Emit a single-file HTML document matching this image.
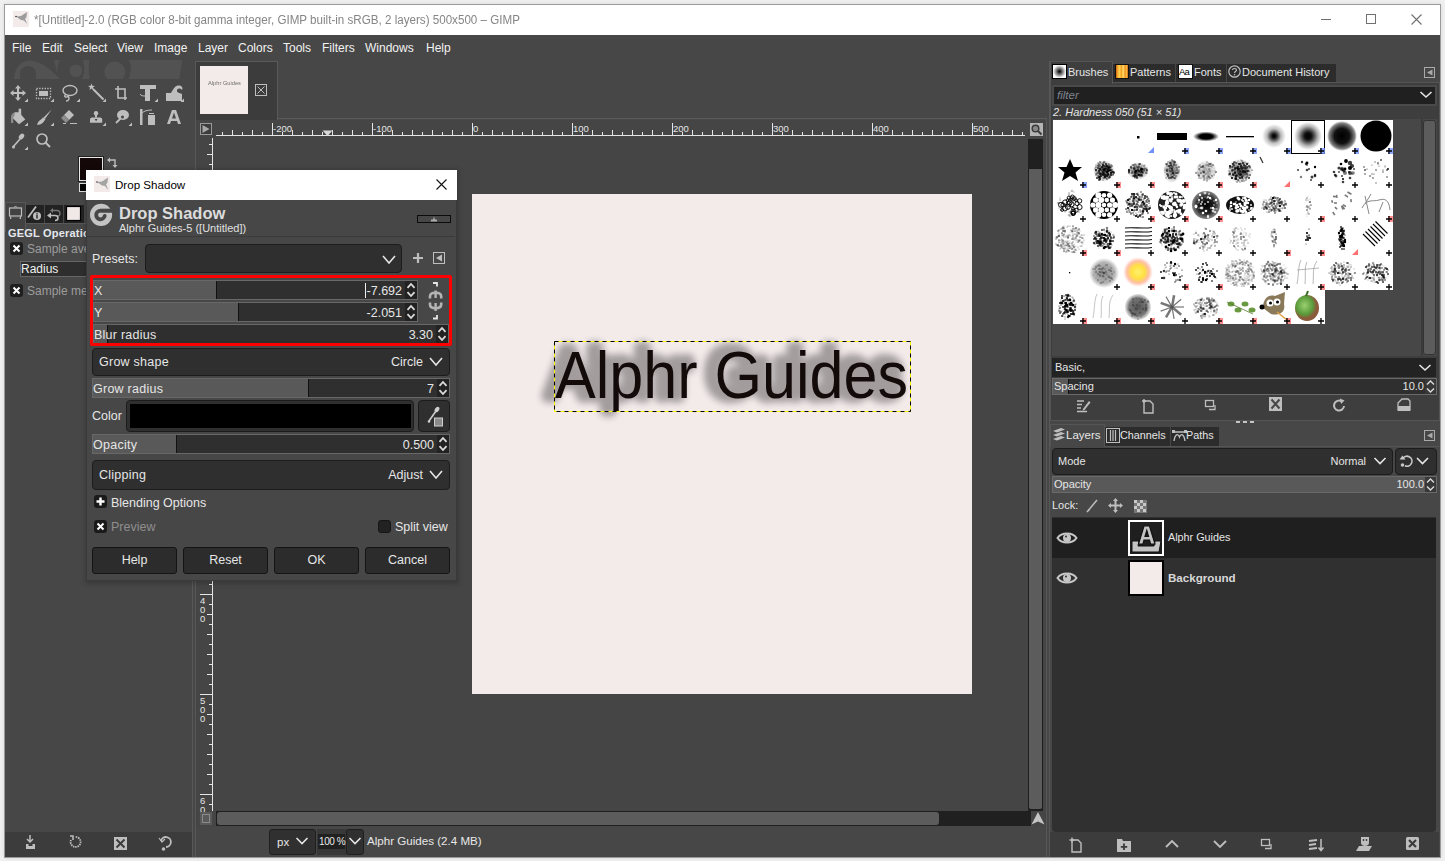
<!DOCTYPE html>
<html><head><meta charset="utf-8">
<style>
*{box-sizing:border-box;margin:0;padding:0}
html,body{width:1445px;height:861px;overflow:hidden;background:#efefef;font-family:"Liberation Sans",sans-serif;position:relative}
.a{position:absolute}
.t{position:absolute;white-space:pre;line-height:1}
svg{position:absolute;overflow:visible}

</style></head><body>

<div class="a" style="left:0;top:0;width:1445px;height:861px;background:#f0f0f0"></div>
<div class="a" style="left:4px;top:4px;width:1437px;height:854px;border:1px solid #9a9a9a;background:#474747;box-shadow:0 0 4px rgba(0,0,0,.10)"></div>
<div class="a" style="left:5px;top:5px;width:1435px;height:30px;background:#fff"></div>
<div class="a" style="left:13px;top:11px;width:16px;height:16px;background:#f3eaea"></div>
<svg style="left:13px;top:11px" width="16" height="16"><path d="M3 5.5 L8 5 L11 3 L14 1 L13.5 6 L12 8 L13 10 L14 13 L11 9.5 L8 9 Z" fill="#9c9c9c"/><circle cx="3" cy="5.5" r="0.8" fill="#333"/></svg>
<div class="t" style="left:34px;top:14px;font-size:12px;color:#858585;transform:scaleX(0.968);transform-origin:0 0">*[Untitled]-2.0 (RGB color 8-bit gamma integer, GIMP built-in sRGB, 2 layers) 500x500 – GIMP</div>
<div class="a" style="left:1321px;top:19px;width:10px;height:1px;background:#707070"></div>
<div class="a" style="left:1366px;top:14px;width:10px;height:10px;border:1px solid #707070"></div>
<svg style="left:1411px;top:14px" width="11" height="11"><path d="M0.5 0.5 L10.5 10.5 M10.5 0.5 L0.5 10.5" stroke="#707070" stroke-width="1.1"/></svg>
<div class="t" style="left:12px;top:42px;font-size:12px;color:#f2f2f2">File</div><div class="t" style="left:42px;top:42px;font-size:12px;color:#f2f2f2">Edit</div><div class="t" style="left:74px;top:42px;font-size:12px;color:#f2f2f2">Select</div><div class="t" style="left:117px;top:42px;font-size:12px;color:#f2f2f2">View</div><div class="t" style="left:154px;top:42px;font-size:12px;color:#f2f2f2">Image</div><div class="t" style="left:198px;top:42px;font-size:12px;color:#f2f2f2">Layer</div><div class="t" style="left:238px;top:42px;font-size:12px;color:#f2f2f2">Colors</div><div class="t" style="left:283px;top:42px;font-size:12px;color:#f2f2f2">Tools</div><div class="t" style="left:322px;top:42px;font-size:12px;color:#f2f2f2">Filters</div><div class="t" style="left:365px;top:42px;font-size:12px;color:#f2f2f2">Windows</div><div class="t" style="left:426px;top:42px;font-size:12px;color:#f2f2f2">Help</div><svg style="left:0;top:0" width="200" height="200"><path d="M14 79 C14 68 21 60.5 30 60.5 C40 60.5 50 69 60 79 Z" fill="#525252"/><path d="M20 79 L20 74 A8 8 0 0 1 36 74 L36 79 Z" fill="#474747"/><path d="M54 60 L59.8 60 C57.5 65 57 70 57.5 75 Z" fill="#525252"/><circle cx="75.8" cy="70.8" r="6.3" fill="#525252"/><path d="M82.5 60 L89.5 60 C88.5 66 88.5 72 90 79 L82 79 C85 73 85 66 82.5 60 Z" fill="#525252"/><path d="M107 79 A10.5 10.5 0 1 1 122.6 79 Z" fill="#525252"/><path d="M129 60 L182.3 60 L179.2 79 L128.6 79 C131.5 72 131.5 66 129 60 Z" fill="#525252"/><g fill="#bebebe" transform="translate(10,85)"><path d="M8 0 L11 3.5 L9 3.5 L9 7 L12.5 7 L12.5 5 L16 8 L12.5 11 L12.5 9 L9 9 L9 12.5 L11 12.5 L8 16 L5 12.5 L7 12.5 L7 9 L3.5 9 L3.5 11 L0 8 L3.5 5 L3.5 7 L7 7 L7 3.5 L5 3.5 Z"/></g><path d="M28 102 L24.5 102 L28 98.5 Z" fill="#bebebe"/><rect x="36.5" y="88.5" width="14" height="10" fill="none" stroke="#bebebe" stroke-width="1.3" stroke-dasharray="1.3 1.4"/><rect x="39" y="91" width="9" height="5" fill="#bebebe"/><path d="M54 102 L50.5 102 L54 98.5 Z" fill="#bebebe"/><ellipse cx="70" cy="90.5" rx="7" ry="5" fill="none" stroke="#bebebe" stroke-width="1.4"/><path d="M66 94 C63 97 66 98 68 96 C70 98 69 101 66 101" fill="none" stroke="#bebebe" stroke-width="1.4"/><path d="M80 102 L76.5 102 L80 98.5 Z" fill="#bebebe"/><path d="M93 89 L103.5 99.5" stroke="#bebebe" stroke-width="1.9"/><path d="M91.50 83.40 L92.38 85.79 L94.92 85.89 L92.93 87.46 L93.62 89.91 L91.50 88.50 L89.38 89.91 L90.07 87.46 L88.08 85.89 L90.62 85.79 Z" fill="#bebebe"/><path d="M106 102 L102.5 102 L106 98.5 Z" fill="#bebebe"/><path d="M118 86 L118 98 L127 98 M115 89 L125 89 L125 100" fill="none" stroke="#bebebe" stroke-width="1.6"/><path d="M140 85 L156 85 L156 89 L150 89 L150 101 L145 101 L145 89 L140 89 Z" fill="#bebebe"/><path d="M140 94 C141 96 143 96 146 96" fill="none" stroke="#bebebe" stroke-width="1"/><path d="M158 102 L154.5 102 L158 98.5 Z" fill="#bebebe"/><path d="M166 101 L166 93 L171 93 C174 88 175 85.5 179 85.5 C182 85.5 183 88 182 90 C180 88 177 88 177 91 C177 93 181 93 182 94 L182 101 Z" fill="#bebebe"/><path d="M184 102 L180.5 102 L184 98.5 Z" fill="#bebebe"/><path d="M14.6 112.3 L19 112.3 L25.3 119.6 L19 124.2 L12.6 118 Z" fill="#bebebe"/><rect x="18.6" y="108.6" width="2.6" height="9.2" rx="1.2" fill="#bebebe"/><path d="M11 123 L11 117.5 C11 114.5 12.5 113 14.6 112.5 L14.6 116 C13.6 116.3 13.2 117 13.2 118 L13.2 123 Z" fill="#8c8c8c"/><path d="M19.5 111 L19.5 117" stroke="#474747" stroke-width="0.01"/><path d="M28 126 L24.5 126 L28 122.5 Z" fill="#bebebe"/><path d="M51.8 109.3 L45 119 L43.3 117.8 Z" fill="#bebebe"/><path d="M43 117.5 L45.5 119.3 L43.5 122 C42 124 39.5 124.8 37 124.8 C37.5 122.5 39 120.5 41 119.5 Z" fill="#bebebe"/><path d="M54 126 L50.5 126 L54 122.5 Z" fill="#bebebe"/><path d="M69 110 L74 115 L69 120 L64 115 Z" fill="#bebebe"/><path d="M64 115 L69 120 L66 123 L61 118 Z" fill="#8c8c8c"/><path d="M63 123.5 L66 123.5 M70 123.5 L77 123.5" stroke="#bebebe" stroke-width="1.1"/><circle cx="96" cy="113.2" r="2.2" fill="#bebebe"/><rect x="95" y="114" width="2" height="3.5" fill="#bebebe"/><path d="M90 122.8 L90 119.5 C90 118.2 91 117.6 93 117.6 L99 117.6 C101 117.6 102.2 118.2 102.2 119.5 L102.2 122.8 Z" fill="#bebebe"/><path d="M94.6 119 L97.6 119 L96.1 121.2 Z" fill="#474747"/><path d="M106 126 L102.5 126 L106 122.5 Z" fill="#bebebe"/><ellipse cx="123" cy="115" rx="6" ry="5" fill="#bebebe"/><path d="M116 123 L122 117" stroke="#bebebe" stroke-width="1.8"/><circle cx="122.5" cy="117" r="1.5" fill="#474747"/><path d="M132 126 L128.5 126 L132 122.5 Z" fill="#bebebe"/><rect x="140" y="109" width="2.5" height="16" fill="#bebebe"/><path d="M142 113 C144 111 147 110 152 110" fill="none" stroke="#bebebe" stroke-width="1"/><rect x="148" y="115" width="7" height="10" fill="#bebebe"/><rect x="149" y="113" width="5" height="1" fill="#bebebe"/><path d="M167 124 L172 110 L176 110 L181 124 L178 124 L177 121 L171 121 L170 124 Z M172 118.5 L176 118.5 L174 112.5 Z" fill="#bebebe" fill-rule="evenodd"/><path d="M13 147 L20 139" stroke="#bebebe" stroke-width="1.6"/><ellipse cx="21.5" cy="136.5" rx="2.3" ry="3.2" transform="rotate(40 21.5 136.5)" fill="#bebebe"/><circle cx="13.5" cy="147" r="1.5" fill="#bebebe"/><path d="M28 150 L24.5 150 L28 146.5 Z" fill="#bebebe"/><circle cx="42" cy="139" r="5" fill="none" stroke="#bebebe" stroke-width="1.7"/><path d="M45.5 142.5 L50 147" stroke="#bebebe" stroke-width="2"/><path d="M109 160 L115 160 L115 166" fill="none" stroke="#bebebe" stroke-width="1.4"/><path d="M107 160 L110 157.5 L110 162.5 Z M115 168 L112.5 165 L117.5 165 Z" fill="#bebebe"/></svg><div class="a" style="left:79px;top:183px;width:12px;height:9px;background:#000;border:1px solid #ddd"></div><div class="a" style="left:79px;top:157px;width:24px;height:24px;border:1px solid #e8e8e8;background:#140808;outline:1px solid #222"></div><div class="a" style="left:26px;top:223px;width:166px;height:1px;background:#585858"></div><div class="a" style="left:5px;top:202px;width:21px;height:30px;background:#424242;border:1px solid #585858;border-bottom:none"></div><div class="a" style="left:26px;top:205px;width:18px;height:18px;background:#222"></div><div class="a" style="left:45px;top:205px;width:18px;height:18px;background:#222"></div><div class="a" style="left:64px;top:205px;width:20px;height:18px;background:#222"></div><svg style="left:0;top:195px" width="90" height="30">
<rect x="9.5" y="13" width="12" height="8" fill="none" stroke="#bebebe" stroke-width="1.2"/><path d="M14 12.5 L15.5 11 L17 12.5" fill="none" stroke="#bebebe" stroke-width="1"/><path d="M10.5 24 L11 21 M20.5 24 L20 21" stroke="#bebebe" stroke-width="1.2"/><rect x="11" y="21" width="9" height="1.2" fill="#888"/>
<path d="M28 22.5 L36 11.5" stroke="#bebebe" stroke-width="1.8"/><circle cx="37" cy="21" r="4" fill="#bebebe"/><rect x="36.3" y="19.5" width="1.4" height="4" fill="#222"/><rect x="36.3" y="17.8" width="1.4" height="1" fill="#222"/>
<path d="M52 15.5 L57 15.5 C59 15.5 60 17 60 18.5 C60 20 59 21 57.5 21" fill="none" stroke="#777" stroke-width="1.3"/><path d="M50 15.5 L53 13 L53 18 Z" fill="#777"/>
<path d="M50 20.5 L55 20.5 C57 20.5 58 22 58 23 C58 24.5 57 25.5 55 25.5" fill="none" stroke="#bebebe" stroke-width="1.5"/><path d="M47 20.5 L51 17.5 L51 23.5 Z" fill="#bebebe"/>
<rect x="66.5" y="11.5" width="14" height="14" fill="#f1e8e8" stroke="#000" stroke-width="1.2"/>
</svg><div class="t" style="left:8px;top:228px;font-size:11px;font-weight:bold;color:#e4e8ee;letter-spacing:0.2px">GEGL Operation</div><div class="a" style="left:10px;top:242px;width:13px;height:13px;background:#1e1e1e;border-radius:3px"></div><svg style="left:10px;top:242px" width="13" height="13"><path d="M3.5 3.5 L9.5 9.5 M9.5 3.5 L3.5 9.5" stroke="#fff" stroke-width="2"/></svg><div class="t" style="left:27px;top:243px;font-size:12px;color:#9c9c9c">Sample average</div><div class="a" style="left:20px;top:261px;width:170px;height:16px;background:#2e2e2e;border:1px solid #666"></div><div class="t" style="left:21px;top:263px;font-size:12px;color:#f0f0f0">Radius</div><div class="a" style="left:10px;top:284px;width:13px;height:13px;background:#1e1e1e;border-radius:3px"></div><svg style="left:10px;top:284px" width="13" height="13"><path d="M3.5 3.5 L9.5 9.5 M9.5 3.5 L3.5 9.5" stroke="#fff" stroke-width="2"/></svg><div class="t" style="left:27px;top:285px;font-size:12px;color:#9c9c9c">Sample merged</div><div class="a" style="left:5px;top:832px;width:187px;height:25px;background:#3c3c3c"></div><svg style="left:0;top:830px" width="200" height="30">
<path d="M30 5 L30 12 M27 9 L30 12 L33 9" fill="none" stroke="#bebebe" stroke-width="1.5"/><path d="M26 14 L26 19 L35 19 L35 14 L32.5 14 L32.5 16 L28.5 16 L28.5 14 Z" fill="#bebebe"/>
<path d="M71 10 A5 5 0 1 0 75 7" fill="none" stroke="#bebebe" stroke-width="1.8" stroke-dasharray="1.5 0.8"/><path d="M70 6 L73 6 L73 10" fill="none" stroke="#bebebe" stroke-width="1.5"/>
<rect x="114" y="7" width="13" height="13" fill="#bebebe"/><path d="M116.5 9.5 L124.5 17.5 M124.5 9.5 L116.5 17.5" stroke="#3c3c3c" stroke-width="2"/>
<path d="M161 11 A5 5 0 1 1 166 17" fill="none" stroke="#bebebe" stroke-width="1.8"/><path d="M159 8 L162 12 L165 9" fill="none" stroke="#bebebe" stroke-width="1.2"/><circle cx="163.5" cy="19" r="1.8" fill="#bebebe"/>
</svg><div class="a" style="left:195px;top:61px;width:1px;height:796px;background:#585858"></div><div class="a" style="left:192px;top:560px;width:1px;height:297px;background:#585858"></div><div class="a" style="left:196px;top:61px;width:82px;height:59px;background:#3c3c3c;border-top:1px solid #5a5a5a;border-right:1px solid #5a5a5a"></div><div class="a" style="left:277px;top:118px;width:770px;height:1px;background:#5a5a5a"></div><div class="a" style="left:200px;top:66px;width:48px;height:48px;background:#f3eaea"></div><div class="t" style="left:208px;top:80px;font-size:6px;color:#707070;transform:scaleX(0.95);transform-origin:0 0">Alphr Guides</div><svg style="left:255px;top:84px" width="12" height="12"><rect x="0.5" y="0.5" width="11" height="11" fill="none" stroke="#bebebe" stroke-width="1"/><path d="M2.5 2.5 L9.5 9.5 M9.5 2.5 L2.5 9.5" stroke="#bebebe" stroke-width="1"/></svg><div class="a" style="left:196px;top:120px;width:850px;height:706px;background:#454545"></div><svg style="left:200px;top:123px" width="12" height="12"><rect x="0.5" y="0.5" width="11" height="11" fill="#3c3c3c" stroke="#9a9a9a" stroke-width="1"/><path d="M2.5 2 L9.5 6 L2.5 10 Z" fill="#a8a8a8"/></svg><svg style="left:0;top:0" width="1445" height="861"><path d="M216 135.5 L1025 135.5" stroke="#e6e6e6" stroke-width="1"/><path d="M222.5 132 L222.5 135" stroke="#e6e6e6" stroke-width="1"/><path d="M232.5 130 L232.5 135" stroke="#e6e6e6" stroke-width="1"/><path d="M242.5 132 L242.5 135" stroke="#e6e6e6" stroke-width="1"/><path d="M252.5 130 L252.5 135" stroke="#e6e6e6" stroke-width="1"/><path d="M262.5 132 L262.5 135" stroke="#e6e6e6" stroke-width="1"/><path d="M272.5 123 L272.5 135" stroke="#e6e6e6" stroke-width="1"/><path d="M282.5 132 L282.5 135" stroke="#e6e6e6" stroke-width="1"/><path d="M292.5 130 L292.5 135" stroke="#e6e6e6" stroke-width="1"/><path d="M302.5 132 L302.5 135" stroke="#e6e6e6" stroke-width="1"/><path d="M312.5 130 L312.5 135" stroke="#e6e6e6" stroke-width="1"/><path d="M322.5 132 L322.5 135" stroke="#e6e6e6" stroke-width="1"/><path d="M332.5 130 L332.5 135" stroke="#e6e6e6" stroke-width="1"/><path d="M342.5 132 L342.5 135" stroke="#e6e6e6" stroke-width="1"/><path d="M352.5 130 L352.5 135" stroke="#e6e6e6" stroke-width="1"/><path d="M362.5 132 L362.5 135" stroke="#e6e6e6" stroke-width="1"/><path d="M372.5 123 L372.5 135" stroke="#e6e6e6" stroke-width="1"/><path d="M382.5 132 L382.5 135" stroke="#e6e6e6" stroke-width="1"/><path d="M392.5 130 L392.5 135" stroke="#e6e6e6" stroke-width="1"/><path d="M402.5 132 L402.5 135" stroke="#e6e6e6" stroke-width="1"/><path d="M412.5 130 L412.5 135" stroke="#e6e6e6" stroke-width="1"/><path d="M422.5 132 L422.5 135" stroke="#e6e6e6" stroke-width="1"/><path d="M432.5 130 L432.5 135" stroke="#e6e6e6" stroke-width="1"/><path d="M442.5 132 L442.5 135" stroke="#e6e6e6" stroke-width="1"/><path d="M452.5 130 L452.5 135" stroke="#e6e6e6" stroke-width="1"/><path d="M462.5 132 L462.5 135" stroke="#e6e6e6" stroke-width="1"/><path d="M472.5 123 L472.5 135" stroke="#e6e6e6" stroke-width="1"/><path d="M482.5 132 L482.5 135" stroke="#e6e6e6" stroke-width="1"/><path d="M492.5 130 L492.5 135" stroke="#e6e6e6" stroke-width="1"/><path d="M502.5 132 L502.5 135" stroke="#e6e6e6" stroke-width="1"/><path d="M512.5 130 L512.5 135" stroke="#e6e6e6" stroke-width="1"/><path d="M522.5 132 L522.5 135" stroke="#e6e6e6" stroke-width="1"/><path d="M532.5 130 L532.5 135" stroke="#e6e6e6" stroke-width="1"/><path d="M542.5 132 L542.5 135" stroke="#e6e6e6" stroke-width="1"/><path d="M552.5 130 L552.5 135" stroke="#e6e6e6" stroke-width="1"/><path d="M562.5 132 L562.5 135" stroke="#e6e6e6" stroke-width="1"/><path d="M572.5 123 L572.5 135" stroke="#e6e6e6" stroke-width="1"/><path d="M582.5 132 L582.5 135" stroke="#e6e6e6" stroke-width="1"/><path d="M592.5 130 L592.5 135" stroke="#e6e6e6" stroke-width="1"/><path d="M602.5 132 L602.5 135" stroke="#e6e6e6" stroke-width="1"/><path d="M612.5 130 L612.5 135" stroke="#e6e6e6" stroke-width="1"/><path d="M622.5 132 L622.5 135" stroke="#e6e6e6" stroke-width="1"/><path d="M632.5 130 L632.5 135" stroke="#e6e6e6" stroke-width="1"/><path d="M642.5 132 L642.5 135" stroke="#e6e6e6" stroke-width="1"/><path d="M652.5 130 L652.5 135" stroke="#e6e6e6" stroke-width="1"/><path d="M662.5 132 L662.5 135" stroke="#e6e6e6" stroke-width="1"/><path d="M672.5 123 L672.5 135" stroke="#e6e6e6" stroke-width="1"/><path d="M682.5 132 L682.5 135" stroke="#e6e6e6" stroke-width="1"/><path d="M692.5 130 L692.5 135" stroke="#e6e6e6" stroke-width="1"/><path d="M702.5 132 L702.5 135" stroke="#e6e6e6" stroke-width="1"/><path d="M712.5 130 L712.5 135" stroke="#e6e6e6" stroke-width="1"/><path d="M722.5 132 L722.5 135" stroke="#e6e6e6" stroke-width="1"/><path d="M732.5 130 L732.5 135" stroke="#e6e6e6" stroke-width="1"/><path d="M742.5 132 L742.5 135" stroke="#e6e6e6" stroke-width="1"/><path d="M752.5 130 L752.5 135" stroke="#e6e6e6" stroke-width="1"/><path d="M762.5 132 L762.5 135" stroke="#e6e6e6" stroke-width="1"/><path d="M772.5 123 L772.5 135" stroke="#e6e6e6" stroke-width="1"/><path d="M782.5 132 L782.5 135" stroke="#e6e6e6" stroke-width="1"/><path d="M792.5 130 L792.5 135" stroke="#e6e6e6" stroke-width="1"/><path d="M802.5 132 L802.5 135" stroke="#e6e6e6" stroke-width="1"/><path d="M812.5 130 L812.5 135" stroke="#e6e6e6" stroke-width="1"/><path d="M822.5 132 L822.5 135" stroke="#e6e6e6" stroke-width="1"/><path d="M832.5 130 L832.5 135" stroke="#e6e6e6" stroke-width="1"/><path d="M842.5 132 L842.5 135" stroke="#e6e6e6" stroke-width="1"/><path d="M852.5 130 L852.5 135" stroke="#e6e6e6" stroke-width="1"/><path d="M862.5 132 L862.5 135" stroke="#e6e6e6" stroke-width="1"/><path d="M872.5 123 L872.5 135" stroke="#e6e6e6" stroke-width="1"/><path d="M882.5 132 L882.5 135" stroke="#e6e6e6" stroke-width="1"/><path d="M892.5 130 L892.5 135" stroke="#e6e6e6" stroke-width="1"/><path d="M902.5 132 L902.5 135" stroke="#e6e6e6" stroke-width="1"/><path d="M912.5 130 L912.5 135" stroke="#e6e6e6" stroke-width="1"/><path d="M922.5 132 L922.5 135" stroke="#e6e6e6" stroke-width="1"/><path d="M932.5 130 L932.5 135" stroke="#e6e6e6" stroke-width="1"/><path d="M942.5 132 L942.5 135" stroke="#e6e6e6" stroke-width="1"/><path d="M952.5 130 L952.5 135" stroke="#e6e6e6" stroke-width="1"/><path d="M962.5 132 L962.5 135" stroke="#e6e6e6" stroke-width="1"/><path d="M972.5 123 L972.5 135" stroke="#e6e6e6" stroke-width="1"/><path d="M982.5 132 L982.5 135" stroke="#e6e6e6" stroke-width="1"/><path d="M992.5 130 L992.5 135" stroke="#e6e6e6" stroke-width="1"/><path d="M1002.5 132 L1002.5 135" stroke="#e6e6e6" stroke-width="1"/><path d="M1012.5 130 L1012.5 135" stroke="#e6e6e6" stroke-width="1"/><path d="M1022.5 132 L1022.5 135" stroke="#e6e6e6" stroke-width="1"/><path d="M212.5 138 L212.5 811" stroke="#e6e6e6" stroke-width="1"/><path d="M209 144.5 L212 144.5" stroke="#e6e6e6" stroke-width="1"/><path d="M207 154.5 L212 154.5" stroke="#e6e6e6" stroke-width="1"/><path d="M209 164.5 L212 164.5" stroke="#e6e6e6" stroke-width="1"/><path d="M207 174.5 L212 174.5" stroke="#e6e6e6" stroke-width="1"/><path d="M209 184.5 L212 184.5" stroke="#e6e6e6" stroke-width="1"/><path d="M200 194.5 L212 194.5" stroke="#e6e6e6" stroke-width="1"/><path d="M209 204.5 L212 204.5" stroke="#e6e6e6" stroke-width="1"/><path d="M207 214.5 L212 214.5" stroke="#e6e6e6" stroke-width="1"/><path d="M209 224.5 L212 224.5" stroke="#e6e6e6" stroke-width="1"/><path d="M207 234.5 L212 234.5" stroke="#e6e6e6" stroke-width="1"/><path d="M209 244.5 L212 244.5" stroke="#e6e6e6" stroke-width="1"/><path d="M207 254.5 L212 254.5" stroke="#e6e6e6" stroke-width="1"/><path d="M209 264.5 L212 264.5" stroke="#e6e6e6" stroke-width="1"/><path d="M207 274.5 L212 274.5" stroke="#e6e6e6" stroke-width="1"/><path d="M209 284.5 L212 284.5" stroke="#e6e6e6" stroke-width="1"/><path d="M200 294.5 L212 294.5" stroke="#e6e6e6" stroke-width="1"/><path d="M209 304.5 L212 304.5" stroke="#e6e6e6" stroke-width="1"/><path d="M207 314.5 L212 314.5" stroke="#e6e6e6" stroke-width="1"/><path d="M209 324.5 L212 324.5" stroke="#e6e6e6" stroke-width="1"/><path d="M207 334.5 L212 334.5" stroke="#e6e6e6" stroke-width="1"/><path d="M209 344.5 L212 344.5" stroke="#e6e6e6" stroke-width="1"/><path d="M207 354.5 L212 354.5" stroke="#e6e6e6" stroke-width="1"/><path d="M209 364.5 L212 364.5" stroke="#e6e6e6" stroke-width="1"/><path d="M207 374.5 L212 374.5" stroke="#e6e6e6" stroke-width="1"/><path d="M209 384.5 L212 384.5" stroke="#e6e6e6" stroke-width="1"/><path d="M200 394.5 L212 394.5" stroke="#e6e6e6" stroke-width="1"/><path d="M209 404.5 L212 404.5" stroke="#e6e6e6" stroke-width="1"/><path d="M207 414.5 L212 414.5" stroke="#e6e6e6" stroke-width="1"/><path d="M209 424.5 L212 424.5" stroke="#e6e6e6" stroke-width="1"/><path d="M207 434.5 L212 434.5" stroke="#e6e6e6" stroke-width="1"/><path d="M209 444.5 L212 444.5" stroke="#e6e6e6" stroke-width="1"/><path d="M207 454.5 L212 454.5" stroke="#e6e6e6" stroke-width="1"/><path d="M209 464.5 L212 464.5" stroke="#e6e6e6" stroke-width="1"/><path d="M207 474.5 L212 474.5" stroke="#e6e6e6" stroke-width="1"/><path d="M209 484.5 L212 484.5" stroke="#e6e6e6" stroke-width="1"/><path d="M200 494.5 L212 494.5" stroke="#e6e6e6" stroke-width="1"/><path d="M209 504.5 L212 504.5" stroke="#e6e6e6" stroke-width="1"/><path d="M207 514.5 L212 514.5" stroke="#e6e6e6" stroke-width="1"/><path d="M209 524.5 L212 524.5" stroke="#e6e6e6" stroke-width="1"/><path d="M207 534.5 L212 534.5" stroke="#e6e6e6" stroke-width="1"/><path d="M209 544.5 L212 544.5" stroke="#e6e6e6" stroke-width="1"/><path d="M207 554.5 L212 554.5" stroke="#e6e6e6" stroke-width="1"/><path d="M209 564.5 L212 564.5" stroke="#e6e6e6" stroke-width="1"/><path d="M207 574.5 L212 574.5" stroke="#e6e6e6" stroke-width="1"/><path d="M209 584.5 L212 584.5" stroke="#e6e6e6" stroke-width="1"/><path d="M200 594.5 L212 594.5" stroke="#e6e6e6" stroke-width="1"/><path d="M209 604.5 L212 604.5" stroke="#e6e6e6" stroke-width="1"/><path d="M207 614.5 L212 614.5" stroke="#e6e6e6" stroke-width="1"/><path d="M209 624.5 L212 624.5" stroke="#e6e6e6" stroke-width="1"/><path d="M207 634.5 L212 634.5" stroke="#e6e6e6" stroke-width="1"/><path d="M209 644.5 L212 644.5" stroke="#e6e6e6" stroke-width="1"/><path d="M207 654.5 L212 654.5" stroke="#e6e6e6" stroke-width="1"/><path d="M209 664.5 L212 664.5" stroke="#e6e6e6" stroke-width="1"/><path d="M207 674.5 L212 674.5" stroke="#e6e6e6" stroke-width="1"/><path d="M209 684.5 L212 684.5" stroke="#e6e6e6" stroke-width="1"/><path d="M200 694.5 L212 694.5" stroke="#e6e6e6" stroke-width="1"/><path d="M209 704.5 L212 704.5" stroke="#e6e6e6" stroke-width="1"/><path d="M207 714.5 L212 714.5" stroke="#e6e6e6" stroke-width="1"/><path d="M209 724.5 L212 724.5" stroke="#e6e6e6" stroke-width="1"/><path d="M207 734.5 L212 734.5" stroke="#e6e6e6" stroke-width="1"/><path d="M209 744.5 L212 744.5" stroke="#e6e6e6" stroke-width="1"/><path d="M207 754.5 L212 754.5" stroke="#e6e6e6" stroke-width="1"/><path d="M209 764.5 L212 764.5" stroke="#e6e6e6" stroke-width="1"/><path d="M207 774.5 L212 774.5" stroke="#e6e6e6" stroke-width="1"/><path d="M209 784.5 L212 784.5" stroke="#e6e6e6" stroke-width="1"/><path d="M200 794.5 L212 794.5" stroke="#e6e6e6" stroke-width="1"/><path d="M209 804.5 L212 804.5" stroke="#e6e6e6" stroke-width="1"/></svg><div class="t" style="left:273px;top:124px;font-size:9.5px;color:#e6e6e6">-200</div><div class="t" style="left:373px;top:124px;font-size:9.5px;color:#e6e6e6">-100</div><div class="t" style="left:473px;top:124px;font-size:9.5px;color:#e6e6e6">0</div><div class="t" style="left:573px;top:124px;font-size:9.5px;color:#e6e6e6">100</div><div class="t" style="left:673px;top:124px;font-size:9.5px;color:#e6e6e6">200</div><div class="t" style="left:773px;top:124px;font-size:9.5px;color:#e6e6e6">300</div><div class="t" style="left:873px;top:124px;font-size:9.5px;color:#e6e6e6">400</div><div class="t" style="left:973px;top:124px;font-size:9.5px;color:#e6e6e6">500</div><div class="t" style="left:200px;top:196px;font-size:9.5px;color:#e6e6e6">0</div><div class="t" style="left:200px;top:296px;font-size:9.5px;color:#e6e6e6">1</div><div class="t" style="left:200px;top:305px;font-size:9.5px;color:#e6e6e6">0</div><div class="t" style="left:200px;top:314px;font-size:9.5px;color:#e6e6e6">0</div><div class="t" style="left:200px;top:396px;font-size:9.5px;color:#e6e6e6">2</div><div class="t" style="left:200px;top:405px;font-size:9.5px;color:#e6e6e6">0</div><div class="t" style="left:200px;top:414px;font-size:9.5px;color:#e6e6e6">0</div><div class="t" style="left:200px;top:496px;font-size:9.5px;color:#e6e6e6">3</div><div class="t" style="left:200px;top:505px;font-size:9.5px;color:#e6e6e6">0</div><div class="t" style="left:200px;top:514px;font-size:9.5px;color:#e6e6e6">0</div><div class="t" style="left:200px;top:596px;font-size:9.5px;color:#e6e6e6">4</div><div class="t" style="left:200px;top:605px;font-size:9.5px;color:#e6e6e6">0</div><div class="t" style="left:200px;top:614px;font-size:9.5px;color:#e6e6e6">0</div><div class="t" style="left:200px;top:696px;font-size:9.5px;color:#e6e6e6">5</div><div class="t" style="left:200px;top:705px;font-size:9.5px;color:#e6e6e6">0</div><div class="t" style="left:200px;top:714px;font-size:9.5px;color:#e6e6e6">0</div><div class="t" style="left:200px;top:796px;font-size:9.5px;color:#e6e6e6">6</div><div class="t" style="left:200px;top:805px;font-size:9.5px;color:#e6e6e6">0</div><div class="t" style="left:200px;top:814px;font-size:9.5px;color:#e6e6e6">0</div><svg style="left:322px;top:130px" width="11" height="7"><path d="M0.5 0.5 L10.5 0.5 L5.5 6 Z" fill="#d8d8d8"/></svg><svg style="left:1030px;top:123px" width="13" height="13"><rect x="0" y="0" width="13" height="13" fill="#b4b4b4"/><circle cx="5.5" cy="5.5" r="3.3" fill="#888" stroke="#3c3c3c" stroke-width="1.5"/><path d="M8 8 L11.5 11.5" stroke="#3c3c3c" stroke-width="2"/></svg><div class="a" style="left:1028px;top:139px;width:15px;height:672px;background:#202020"></div><div class="a" style="left:1028px;top:168px;width:15px;height:642px;background:#5c5c5c;border:1px solid #1e1e1e;border-radius:0 0 3px 3px"></div><div class="a" style="left:216px;top:811px;width:815px;height:15px;background:#202020"></div><div class="a" style="left:217px;top:812px;width:722px;height:13px;background:#5c5c5c;border-radius:3px"></div><svg style="left:200px;top:812px" width="13" height="13"><rect x="0" y="0" width="12" height="13" fill="#5a5a5a"/><rect x="2.5" y="2.5" width="7" height="8" fill="none" stroke="#bbb" stroke-width="1" stroke-dasharray="1 1"/></svg><svg style="left:1031px;top:812px" width="14" height="14"><path d="M7 0 L13.5 12.5 L7 9.5 L0.5 12.5 Z" fill="#c4c4c4"/></svg><div class="a" style="left:472px;top:194px;width:500px;height:500px;background:#f3eaea"></div><div class="a" style="left:269px;top:829px;width:47px;height:26px;background:#303030;border:1px solid #1f1f1f;border-radius:3px"></div><div class="t" style="left:277px;top:837px;font-size:11.5px;color:#e8e8e8">px</div><svg style="left:295px;top:836px" width="14" height="10"><path d="M1.5 2 L7 7.5 L12.5 2" fill="none" stroke="#e6e6e6" stroke-width="1.6"/></svg><div class="a" style="left:317px;top:829px;width:30px;height:26px;background:#383838"></div><div class="a" style="left:318px;top:834px;width:27px;height:15px;background:#202020"></div><div class="t" style="left:319px;top:837px;font-size:10px;color:#e8e8e8;letter-spacing:-0.4px">100 %</div><div class="a" style="left:346px;top:829px;width:18px;height:26px;background:#303030;border:1px solid #1f1f1f;border-radius:3px"></div><svg style="left:348px;top:836px" width="14" height="10"><path d="M1.5 2 L7 7.5 L12.5 2" fill="none" stroke="#e6e6e6" stroke-width="1.6"/></svg><div class="t" style="left:367px;top:835px;font-size:11.6px;color:#e8e8e8">Alphr Guides (2.4 MB)</div><div class="a" style="left:1046px;top:118px;width:1px;height:739px;background:#585858"></div><div class="a" style="left:1049px;top:61px;width:1px;height:796px;background:#585858"></div><svg style="left:472px;top:194px" width="500" height="500" viewBox="472 194 500 500">
<defs><filter id="bl" x="-20%" y="-50%" width="140%" height="200%"><feGaussianBlur stdDeviation="3.6"/></filter></defs>
<g opacity="0.33" filter="url(#bl)">
<text transform="translate(547.3,396) scale(0.905,1)" font-family="Liberation Sans" font-size="67.5" fill="#000" stroke="#000" stroke-width="13" stroke-linejoin="round">Alphr Guides</text>
</g>
<text transform="translate(555,398) scale(0.905,1)" font-family="Liberation Sans" font-size="67.5" fill="#130a0a">Alphr Guides</text>
<rect x="554.5" y="341.5" width="356" height="70" fill="none" stroke="#ffff00" stroke-width="1"/>
<rect x="554.5" y="341.5" width="356" height="70" fill="none" stroke="#000" stroke-width="1" stroke-dasharray="4 4"/>
</svg><div class="a" style="left:1050px;top:57px;width:390px;height:800px;background:#474747"></div><div class="a" style="left:1050px;top:82px;width:390px;height:339px;background:#3e3e3e;border:1px solid #555;"></div><div class="a" style="left:1113px;top:64px;width:223px;height:18px;background:#2c2c2c"></div><div class="a" style="left:1175px;top:64px;width:1px;height:18px;background:#474747"></div><div class="a" style="left:1226px;top:64px;width:1px;height:18px;background:#474747"></div><div class="a" style="left:1050px;top:61px;width:63px;height:23px;background:#3e3e3e;border:1px solid #555;border-bottom:none"></div><div class="a" style="left:1052px;top:64px;width:15px;height:15px;background:radial-gradient(circle,#000 0,#333 15%,#fff 70%);border:1px solid #000"></div><div class="t" style="left:1068px;top:67px;font-size:11px;color:#e6e6e6">Brushes</div><div class="a" style="left:1115px;top:64px;width:14px;height:15px;border:1px solid #111;background:linear-gradient(90deg,#d06010 0,#f5b030 15%,#ffd050 30%,#f0a020 45%,#ffe070 60%,#e89020 75%,#ffc040 90%,#c05010 100%)"></div><div class="t" style="left:1130px;top:67px;font-size:11px;color:#e6e6e6">Patterns</div><div class="a" style="left:1178px;top:64px;width:15px;height:15px;background:#fff;border:1px solid #111"></div><div class="t" style="left:1179px;top:67px;font-size:9.5px;color:#000;letter-spacing:-0.8px">Aa</div><div class="t" style="left:1194px;top:67px;font-size:11px;color:#e6e6e6">Fonts</div><svg style="left:1228px;top:65px" width="13" height="13"><circle cx="6.5" cy="6.5" r="5.7" fill="none" stroke="#bebebe" stroke-width="1.2"/><path d="M4.5 5 C4.5 3 8.5 3 8.5 5 C8.5 6.5 6.5 6.5 6.5 8" fill="none" stroke="#bebebe" stroke-width="1.2"/><circle cx="6.5" cy="9.8" r="0.8" fill="#bebebe"/></svg><div class="t" style="left:1242px;top:67px;font-size:11px;color:#e6e6e6">Document History</div><svg style="left:1424px;top:67px" width="12" height="11"><rect x="0.5" y="0.5" width="10" height="10" fill="none" stroke="#aaa" stroke-width="1"/><path d="M8.5 2.5 L3 5.5 L8.5 8.5 Z" fill="#aaa"/></svg><div class="a" style="left:1052px;top:85px;width:385px;height:21px;background:#202020;border:2px solid #4a4a4a"></div><div class="t" style="left:1057px;top:90px;font-size:11.5px;font-style:italic;color:#7f8590">filter</div><svg style="left:1419px;top:90px" width="14" height="10"><path d="M1.5 2 L7 7 L12.5 2" fill="none" stroke="#e6e6e6" stroke-width="1.6"/></svg><div class="t" style="left:1053px;top:107px;font-size:11px;font-style:italic;color:#e6e6e6">2. Hardness 050 (51 × 51)</div><div class="a" style="left:1052px;top:119px;width:385px;height:237px;background:#474747"></div><div class="a" style="left:1421px;top:119px;width:2px;height:237px;background:#3a3a3a"></div><div class="a" style="left:1423px;top:120px;width:13px;height:235px;background:#5c5c5c;border:1px solid #333;border-radius:3px"></div><div class="a" style="left:1052px;top:358px;width:384px;height:19px;background:#232323"></div><div class="t" style="left:1055px;top:362px;font-size:11px;color:#e6e6e6">Basic,</div><svg style="left:1418px;top:363px" width="14" height="10"><path d="M1.5 2 L7 7 L12.5 2" fill="none" stroke="#e6e6e6" stroke-width="1.6"/></svg><div class="a" style="left:1052px;top:378px;width:385px;height:17px;background:#2f2f2f;border:1px solid #6a6a6a"></div><div class="a" style="left:1053px;top:379px;width:16px;height:15px;background:#595959;border-right:1px solid #111"></div><div class="a" style="left:1425px;top:379px;width:11px;height:15px;background:#383838"></div><svg style="left:1425px;top:379px" width="11" height="15"><path d="M2 5.5 L5.5 2.0 L9 5.5 M2 9.5 L5.5 13.0 L9 9.5" fill="none" stroke="#dcdcdc" stroke-width="1.4"/></svg><div class="t" style="left:1054px;top:381.0px;font-size:11px;color:#e6e6e6">Spacing</div><div class="t" style="right:21px;top:381.0px;font-size:11px;color:#e6e6e6">10.0</div><svg style="left:1060px;top:394px" width="370" height="22">
<g transform="translate(16,4)"><path d="M1 3 L8 3 M1 6.5 L6 6.5 M1 10 L5 10 M1 13.5 L11 13.5" stroke="#bebebe" stroke-width="1.4"/><path d="M7 11 L13 3 L14.5 4.5 L8.5 12 L6.5 12.5 Z" fill="#bebebe"/></g>
<g transform="translate(80,4)"><path d="M4 3 L10 3 L13 6 L13 15 L4 15 Z" fill="none" stroke="#bebebe" stroke-width="1.4"/><path d="M2 3 L6 3 M4 1 L4 5" stroke="#bebebe" stroke-width="1.4"/></g>
<g transform="translate(144,5)"><rect x="1.5" y="1.5" width="8" height="6" fill="none" stroke="#bebebe" stroke-width="1.3"/><path d="M11 6 L11 10.5 L5 10.5" fill="none" stroke="#bebebe" stroke-width="1.3"/></g>
<g transform="translate(209,3)"><rect x="0" y="0" width="13" height="14" fill="#bebebe"/><path d="M2.5 2.5 L10.5 11.5 M10.5 2.5 L2.5 11.5" stroke="#474747" stroke-width="2"/></g>
<g transform="translate(272,4)"><path d="M12 8 A5 5 0 1 1 9.5 3.2" fill="none" stroke="#bebebe" stroke-width="2"/><path d="M8 0.5 L12.5 2.5 L9 6 Z" fill="#bebebe"/></g>
<g transform="translate(336,3)"><path d="M2 13 L2 6 L6 2 L12 2 L14 4 L14 13 Z" fill="none" stroke="#bebebe" stroke-width="1.3"/><rect x="2" y="9" width="12" height="5" fill="#bebebe"/></g>
</svg><div class="a" style="left:1236px;top:421px;width:4px;height:2px;background:#c4c4c4"></div><div class="a" style="left:1243px;top:421px;width:4px;height:2px;background:#c4c4c4"></div><div class="a" style="left:1250px;top:421px;width:4px;height:2px;background:#c4c4c4"></div><div class="a" style="left:1050px;top:446px;width:389px;height:411px;background:#474747;border-top:1px solid #555"></div><div class="a" style="left:1104px;top:427px;width:115px;height:19px;background:#2c2c2c"></div><div class="a" style="left:1170px;top:427px;width:1px;height:19px;background:#474747"></div><div class="a" style="left:1050px;top:424px;width:55px;height:23px;background:#474747;border:1px solid #555;border-bottom:none"></div><svg style="left:1052px;top:427px" width="15" height="16"><path d="M1 4 L9 1 L13 2.5 L5 5.5 Z M1 8 L9 5 L13 6.5 L5 9.5 Z M1 12 L9 9 L13 10.5 L5 13.5 Z" fill="#bebebe"/></svg><div class="t" style="left:1066px;top:430px;font-size:11.5px;color:#e6e6e6">Layers</div><svg style="left:1106px;top:428px" width="14" height="15"><rect x="0.5" y="0.5" width="13" height="14" fill="none" stroke="#bebebe" stroke-width="1"/><path d="M4.5 2 L4.5 13 M7 2 L7 13 M9.5 2 L9.5 13" stroke="#bebebe" stroke-width="1.2"/></svg><div class="t" style="left:1120px;top:430px;font-size:10.8px;color:#e6e6e6">Channels</div><svg style="left:1172px;top:429px" width="15" height="14"><path d="M1 3 L14 3 M2 12 C3 5 6 4 7.5 8 C9 4 12 5 13 12" fill="none" stroke="#bebebe" stroke-width="1.4"/><rect x="0" y="1" width="3" height="3" fill="#bebebe"/><rect x="12" y="1" width="3" height="3" fill="#bebebe"/></svg><div class="t" style="left:1186px;top:430px;font-size:10.8px;color:#e6e6e6">Paths</div><svg style="left:1424px;top:430px" width="12" height="11"><rect x="0.5" y="0.5" width="10" height="10" fill="none" stroke="#aaa" stroke-width="1"/><path d="M8.5 2.5 L3 5.5 L8.5 8.5 Z" fill="#aaa"/></svg><div class="a" style="left:1052px;top:448px;width:341px;height:27px;background:#2f2f2f;border:1px solid #1c1c1c;border-radius:4px"></div><div class="t" style="left:1058px;top:456px;font-size:11px;color:#e6e6e6">Mode</div><div class="t" style="right:79px;top:456px;font-size:11px;color:#e6e6e6">Normal</div><svg style="left:1373px;top:456px" width="14" height="10"><path d="M1.5 2 L7 7.5 L12.5 2" fill="none" stroke="#e6e6e6" stroke-width="1.6"/></svg><div class="a" style="left:1395px;top:448px;width:42px;height:27px;background:#2f2f2f;border:1px solid #1c1c1c;border-radius:4px"></div><svg style="left:1398px;top:453px" width="36" height="16"><path d="M4.5 6 A5 5 0 1 1 7 12.8" fill="none" stroke="#c8c8c8" stroke-width="1.7"/><path d="M1.5 6.5 L4.5 2.5 L7.5 6.5 Z" fill="#c8c8c8"/><circle cx="4.5" cy="12" r="1.8" fill="#c8c8c8"/><path d="M19 5 L24.5 10.5 L30 5" fill="none" stroke="#e6e6e6" stroke-width="1.6"/></svg><div class="a" style="left:1052px;top:476px;width:385px;height:17px;background:#2f2f2f;border:1px solid #6a6a6a"></div><div class="a" style="left:1053px;top:477px;width:373px;height:15px;background:#595959;border-right:1px solid #111"></div><div class="a" style="left:1425px;top:477px;width:11px;height:15px;background:#383838"></div><svg style="left:1425px;top:477px" width="11" height="15"><path d="M2 5.5 L5.5 2.0 L9 5.5 M2 9.5 L5.5 13.0 L9 9.5" fill="none" stroke="#dcdcdc" stroke-width="1.4"/></svg><div class="t" style="left:1054px;top:479.0px;font-size:11px;color:#e6e6e6">Opacity</div><div class="t" style="right:21px;top:479.0px;font-size:11px;color:#e6e6e6">100.0</div><div class="t" style="left:1052px;top:500px;font-size:11px;color:#e6e6e6">Lock:</div><svg style="left:1084px;top:497px" width="64" height="18">
<path d="M3 15 L13 3" stroke="#bebebe" stroke-width="1.5"/><path d="M2.5 15.5 L5 12 L6 13 Z" fill="#bebebe"/>
<g transform="translate(24,1)"><path d="M7.5 0 L10 3 L8.5 3 L8.5 6.5 L12 6.5 L12 5 L15 7.5 L12 10 L12 8.5 L8.5 8.5 L8.5 12 L10 12 L7.5 15 L5 12 L6.5 12 L6.5 8.5 L3 8.5 L3 10 L0 7.5 L3 5 L3 6.5 L6.5 6.5 L6.5 3 L5 3 Z" fill="#bebebe"/></g>
<g transform="translate(50,3)"><rect x="0" y="0" width="13" height="13" fill="#777"/><path d="M0 0 h3 v3 h-3 Z M6 0 h3 v3 h-3 Z M3 3 h3 v3 h-3 Z M9 3 h3 v3 h-3 Z M0 6 h3 v3 h-3 Z M6 6 h3 v3 h-3 Z M3 9 h3 v3 h-3 Z M9 9 h3 v3 h-3 Z" fill="#c8c8c8"/></g>
</svg><div class="a" style="left:1052px;top:517px;width:384px;height:315px;background:#303030;border-radius:0 0 4px 4px"></div><div class="a" style="left:1052px;top:518px;width:384px;height:40px;background:#1f1f1f"></div><svg style="left:1056px;top:531px" width="22" height="14"><path d="M1.5 7 C5.5 1 16.5 1 20.5 7 C16.5 13 5.5 13 1.5 7 Z" fill="none" stroke="#c8c8c8" stroke-width="2"/><circle cx="11" cy="7" r="4" fill="#c8c8c8"/><circle cx="10" cy="5.5" r="1" fill="#333"/></svg><svg style="left:1056px;top:571px" width="22" height="14"><path d="M1.5 7 C5.5 1 16.5 1 20.5 7 C16.5 13 5.5 13 1.5 7 Z" fill="none" stroke="#c8c8c8" stroke-width="2"/><circle cx="11" cy="7" r="4" fill="#c8c8c8"/><circle cx="10" cy="5.5" r="1" fill="#333"/></svg><div class="a" style="left:1128px;top:520px;width:36px;height:36px;background:#1f1f1f;border:2px solid #fff"></div><svg style="left:1130px;top:522px" width="32" height="32"><path d="M2 19 L9 19 L8 24 L24 24 L25 19 L31 19 L29 30 L2 30 Z" fill="#c4c4c4" stroke="#111" stroke-width="1"/><path d="M8.5 22 L14 4 L19.5 4 L25 22 L20.5 22 L19.5 18 L14 18 L13 22 Z M15 14.5 L18.5 14.5 L16.8 8.5 Z" fill="#c4c4c4" fill-rule="evenodd" stroke="#111" stroke-width="1.2"/></svg><div class="t" style="left:1168px;top:532px;font-size:10.8px;color:#e6e6e6">Alphr Guides</div><div class="a" style="left:1128px;top:560px;width:36px;height:36px;background:#f3eaea;border:2px solid #000"></div><div class="t" style="left:1168px;top:572px;font-size:11.6px;font-weight:bold;color:#d8d8d8">Background</div><div class="a" style="left:1050px;top:832px;width:389px;height:25px;background:#3c3c3c"></div><svg style="left:1050px;top:832px" width="390" height="25">
<g transform="translate(18,5)"><path d="M4 3 L10 3 L13 6 L13 15 L4 15 Z" fill="none" stroke="#bebebe" stroke-width="1.4"/><path d="M1.5 3 L6.5 3 M4 0.5 L4 5.5" stroke="#bebebe" stroke-width="1.4"/></g>
<g transform="translate(66,5)"><path d="M1 2 L6 2 L7 4 L15 4 L15 15 L1 15 Z" fill="#bebebe"/><path d="M8 6.5 L8 13 M4.8 9.8 L11.2 9.8" stroke="#3c3c3c" stroke-width="1.8"/></g>
<g transform="translate(114,6)"><path d="M2 9 L8 3 L14 9" fill="none" stroke="#bebebe" stroke-width="1.8"/></g>
<g transform="translate(162,6)"><path d="M2 3 L8 9 L14 3" fill="none" stroke="#bebebe" stroke-width="1.8"/></g>
<g transform="translate(210,6)"><rect x="1.5" y="1.5" width="8" height="6" fill="none" stroke="#bebebe" stroke-width="1.3"/><path d="M11 6 L11 10.5 L5 10.5" fill="none" stroke="#bebebe" stroke-width="1.3"/></g>
<g transform="translate(258,5)"><path d="M1 4 L9 3 M1 8 L8 7 M1 12 L9 11" stroke="#bebebe" stroke-width="1.8"/><path d="M13 2 L13 13 M10.5 10.5 L13 13.5 L15.5 10.5" fill="none" stroke="#bebebe" stroke-width="1.5"/></g>
<g transform="translate(305,4)"><path d="M6 1 L14 1 L14 7 C14 9 12 10 10 10 C8 10 6 9 6 7 Z" fill="#bebebe"/><path d="M1 15 L4 10 L17 10 L14 15 Z" fill="#bebebe"/><circle cx="8.5" cy="4" r="0.9" fill="#3c3c3c"/><circle cx="11.5" cy="4" r="0.9" fill="#3c3c3c"/></g>
<g transform="translate(356,5)"><rect x="0" y="0" width="13" height="13" rx="1.5" fill="#bebebe"/><path d="M3 3 L10 10 M10 3 L3 10" stroke="#3c3c3c" stroke-width="2.2"/></g>
</svg><div class="a" style="left:1053px;top:120px;width:340px;height:170px;background:#fff"></div><div class="a" style="left:1053px;top:290px;width:272px;height:34px;background:#fff"></div><svg style="left:0;top:0" width="1445" height="861"><defs>
<radialGradient id="gE"><stop offset="0" stop-color="#000"/><stop offset="0.5" stop-color="#000"/><stop offset="1" stop-color="#000" stop-opacity="0"/></radialGradient>
<radialGradient id="gS"><stop offset="0" stop-color="#000"/><stop offset="0.15" stop-color="#111"/><stop offset="0.6" stop-color="#000" stop-opacity="0.25"/><stop offset="1" stop-color="#000" stop-opacity="0"/></radialGradient>
<radialGradient id="gM"><stop offset="0" stop-color="#000"/><stop offset="0.25" stop-color="#111"/><stop offset="0.7" stop-color="#000" stop-opacity="0.3"/><stop offset="1" stop-color="#000" stop-opacity="0"/></radialGradient>
<radialGradient id="gL"><stop offset="0" stop-color="#000"/><stop offset="0.5" stop-color="#111"/><stop offset="0.85" stop-color="#000" stop-opacity="0.5"/><stop offset="1" stop-color="#000" stop-opacity="0"/></radialGradient>
<radialGradient id="gD"><stop offset="0" stop-color="#000"/><stop offset="0.6" stop-color="#222"/><stop offset="1" stop-color="#888"/></radialGradient>
<radialGradient id="gO"><stop offset="0" stop-color="#fff070"/><stop offset="0.45" stop-color="#ffe040"/><stop offset="0.75" stop-color="#ffb090" stop-opacity="0.8"/><stop offset="1" stop-color="#ffc0b0" stop-opacity="0"/></radialGradient>
<radialGradient id="gB"><stop offset="0" stop-color="#000" stop-opacity="0.8"/><stop offset="0.6" stop-color="#000" stop-opacity="0.35"/><stop offset="1" stop-color="#000" stop-opacity="0"/></radialGradient><radialGradient id="gF"><stop offset="0" stop-color="#000" stop-opacity="0.45"/><stop offset="0.7" stop-color="#000" stop-opacity="0.3"/><stop offset="1" stop-color="#000" stop-opacity="0"/></radialGradient><radialGradient id="gG"><stop offset="0" stop-color="#555"/><stop offset="0.7" stop-color="#777"/><stop offset="1" stop-color="#999" stop-opacity="0.3"/></radialGradient>
<radialGradient id="gP" cx="0.4" cy="0.4"><stop offset="0" stop-color="#9ad070"/><stop offset="0.7" stop-color="#5a9a3a"/><stop offset="1" stop-color="#8a5a3a"/></radialGradient>
</defs><rect x="1137" y="136" width="2.5" height="2.5" fill="#000"/><path d="M1154 147 L1154 153 L1148 153 Z" fill="#7090ff"/><rect x="1157" y="133" width="30" height="7" fill="#000"/><rect x="1184" y="148" width="5" height="6" fill="#7090ff" opacity="0.8"/><path d="M1182 151 L1188 151 M1185 148 L1185 154" stroke="#000" stroke-width="1.3"/><ellipse cx="1206" cy="136.5" rx="13" ry="5" fill="url(#gE)"/><rect x="1218" y="148" width="5" height="6" fill="#7090ff" opacity="0.8"/><path d="M1216 151 L1222 151 M1219 148 L1219 154" stroke="#000" stroke-width="1.3"/><rect x="1226" y="136" width="28" height="1.3" fill="#000"/><rect x="1252" y="148" width="5" height="6" fill="#7090ff" opacity="0.8"/><path d="M1250 151 L1256 151 M1253 148 L1253 154" stroke="#000" stroke-width="1.3"/><circle cx="1274" cy="136" r="12" fill="url(#gS)"/><rect x="1286" y="148" width="5" height="6" fill="#7090ff" opacity="0.8"/><path d="M1284 151 L1290 151 M1287 148 L1287 154" stroke="#000" stroke-width="1.3"/><circle cx="1308" cy="136" r="14" fill="url(#gM)"/><rect x="1291.5" y="120.5" width="33" height="33" fill="none" stroke="#000" stroke-width="1"/><rect x="1320" y="148" width="5" height="6" fill="#7090ff" opacity="0.8"/><path d="M1318 151 L1324 151 M1321 148 L1321 154" stroke="#000" stroke-width="1.3"/><circle cx="1342" cy="136" r="15" fill="url(#gL)"/><rect x="1354" y="148" width="5" height="6" fill="#7090ff" opacity="0.8"/><path d="M1352 151 L1358 151 M1355 148 L1355 154" stroke="#000" stroke-width="1.3"/><circle cx="1376" cy="136" r="15.5" fill="#000"/><rect x="1388" y="148" width="5" height="6" fill="#7090ff" opacity="0.8"/><path d="M1386 151 L1392 151 M1389 148 L1389 154" stroke="#000" stroke-width="1.3"/><path d="M1070 159 L1073.5 167 L1082 167 L1075.5 172.5 L1078 181 L1070 176 L1062 181 L1064.5 172.5 L1058 167 L1066.5 167 Z" fill="#000"/><rect x="1082" y="182" width="5" height="6" fill="#7090ff" opacity="0.8"/><path d="M1080 185 L1086 185 M1083 182 L1083 188" stroke="#000" stroke-width="1.3"/><ellipse cx="1104" cy="171" rx="11" ry="11" fill="url(#gB)" opacity="0.8"/><g fill="#000" fill-opacity="0.5"><circle cx="1098" cy="176" r="0.9"/><circle cx="1114" cy="172" r="0.9"/><circle cx="1100" cy="162" r="1.0"/><circle cx="1104" cy="162" r="0.9"/><circle cx="1099" cy="179" r="0.4"/><circle cx="1102" cy="168" r="0.5"/><circle cx="1098" cy="173" r="0.5"/><circle cx="1110" cy="167" r="1.0"/><circle cx="1105" cy="166" r="0.8"/><circle cx="1105" cy="178" r="0.5"/><circle cx="1103" cy="165" r="0.7"/><circle cx="1109" cy="171" r="0.6"/><circle cx="1100" cy="166" r="0.7"/><circle cx="1095" cy="168" r="0.6"/><circle cx="1109" cy="164" r="0.8"/><circle cx="1109" cy="166" r="0.9"/><circle cx="1108" cy="166" r="0.5"/><circle cx="1096" cy="172" r="0.5"/><circle cx="1113" cy="171" r="0.6"/><circle cx="1098" cy="165" r="0.5"/><circle cx="1107" cy="179" r="0.4"/><circle cx="1100" cy="176" r="0.6"/><circle cx="1109" cy="170" r="0.9"/><circle cx="1099" cy="164" r="0.7"/><circle cx="1104" cy="166" r="1.0"/><circle cx="1100" cy="165" r="0.7"/><circle cx="1103" cy="175" r="0.8"/><circle cx="1107" cy="169" r="0.9"/><circle cx="1099" cy="172" r="0.8"/><circle cx="1096" cy="167" r="0.5"/><circle cx="1112" cy="172" r="0.5"/><circle cx="1098" cy="165" r="0.6"/><circle cx="1111" cy="171" r="1.0"/><circle cx="1099" cy="168" r="0.6"/><circle cx="1105" cy="169" r="0.8"/><circle cx="1108" cy="177" r="0.5"/><circle cx="1104" cy="170" r="0.9"/><circle cx="1108" cy="171" r="0.9"/><circle cx="1101" cy="168" r="0.7"/><circle cx="1109" cy="177" r="0.5"/><circle cx="1098" cy="173" r="0.8"/><circle cx="1101" cy="175" r="0.5"/><circle cx="1097" cy="178" r="0.9"/></g><g fill="#000" fill-opacity="1.0"><circle cx="1107" cy="172" r="0.8"/><circle cx="1107" cy="172" r="0.9"/><circle cx="1096" cy="170" r="1.0"/><circle cx="1099" cy="171" r="0.9"/><circle cx="1100" cy="174" r="0.5"/><circle cx="1113" cy="172" r="0.9"/><circle cx="1103" cy="169" r="0.5"/><circle cx="1103" cy="178" r="0.4"/><circle cx="1110" cy="170" r="1.0"/><circle cx="1105" cy="175" r="0.6"/><circle cx="1097" cy="178" r="0.8"/><circle cx="1107" cy="166" r="0.9"/><circle cx="1100" cy="179" r="0.9"/><circle cx="1106" cy="164" r="0.9"/><circle cx="1109" cy="168" r="0.9"/><circle cx="1110" cy="166" r="0.5"/><circle cx="1107" cy="169" r="0.7"/><circle cx="1106" cy="166" r="0.4"/><circle cx="1103" cy="165" r="0.9"/><circle cx="1104" cy="174" r="0.9"/><circle cx="1108" cy="171" r="0.7"/><circle cx="1105" cy="169" r="0.7"/><circle cx="1101" cy="176" r="0.9"/><circle cx="1101" cy="174" r="0.8"/><circle cx="1096" cy="175" r="0.5"/><circle cx="1109" cy="175" r="0.7"/><circle cx="1105" cy="167" r="0.5"/><circle cx="1104" cy="170" r="0.9"/><circle cx="1100" cy="173" r="0.8"/><circle cx="1108" cy="170" r="1.0"/><circle cx="1103" cy="167" r="0.5"/><circle cx="1105" cy="169" r="0.6"/><circle cx="1107" cy="176" r="0.7"/><circle cx="1105" cy="169" r="0.7"/><circle cx="1111" cy="167" r="0.6"/><circle cx="1108" cy="174" r="0.9"/><circle cx="1102" cy="167" r="0.9"/><circle cx="1106" cy="171" r="0.6"/><circle cx="1108" cy="174" r="0.8"/><circle cx="1101" cy="163" r="0.5"/><circle cx="1111" cy="175" r="1.0"/><circle cx="1099" cy="164" r="0.4"/><circle cx="1096" cy="171" r="0.4"/><circle cx="1104" cy="169" r="0.7"/><circle cx="1103" cy="173" r="0.8"/><circle cx="1103" cy="174" r="0.5"/><circle cx="1107" cy="176" r="0.8"/><circle cx="1098" cy="163" r="0.6"/><circle cx="1105" cy="177" r="1.0"/><circle cx="1100" cy="177" r="0.9"/><circle cx="1112" cy="172" r="0.8"/><circle cx="1106" cy="171" r="0.7"/><circle cx="1100" cy="169" r="0.8"/><circle cx="1108" cy="167" r="0.8"/></g><g fill="#000" fill-opacity="0.75"><circle cx="1108" cy="168" r="1.0"/><circle cx="1111" cy="173" r="0.8"/><circle cx="1111" cy="173" r="0.7"/><circle cx="1096" cy="167" r="0.6"/><circle cx="1098" cy="166" r="0.8"/><circle cx="1100" cy="174" r="0.9"/><circle cx="1099" cy="166" r="0.6"/><circle cx="1107" cy="177" r="0.4"/><circle cx="1108" cy="175" r="0.6"/><circle cx="1105" cy="177" r="0.4"/><circle cx="1104" cy="172" r="0.9"/><circle cx="1098" cy="172" r="0.5"/><circle cx="1103" cy="171" r="0.5"/><circle cx="1106" cy="166" r="0.4"/><circle cx="1103" cy="169" r="0.8"/><circle cx="1106" cy="172" r="0.4"/><circle cx="1112" cy="166" r="0.8"/><circle cx="1106" cy="171" r="0.5"/><circle cx="1099" cy="169" r="0.6"/><circle cx="1099" cy="180" r="0.9"/><circle cx="1107" cy="166" r="0.7"/><circle cx="1111" cy="165" r="0.7"/><circle cx="1098" cy="168" r="1.0"/><circle cx="1109" cy="167" r="0.7"/><circle cx="1105" cy="175" r="0.8"/><circle cx="1100" cy="178" r="0.6"/><circle cx="1102" cy="169" r="0.5"/><circle cx="1113" cy="175" r="0.8"/><circle cx="1100" cy="170" r="0.8"/><circle cx="1102" cy="174" r="0.8"/><circle cx="1099" cy="178" r="0.9"/><circle cx="1114" cy="173" r="0.9"/><circle cx="1109" cy="170" r="0.5"/><circle cx="1099" cy="175" r="0.4"/><circle cx="1106" cy="175" r="0.9"/><circle cx="1109" cy="178" r="0.7"/><circle cx="1105" cy="173" r="0.5"/><circle cx="1103" cy="164" r="0.4"/><circle cx="1105" cy="162" r="0.5"/><circle cx="1097" cy="174" r="0.5"/><circle cx="1100" cy="175" r="0.6"/><circle cx="1101" cy="170" r="0.7"/><circle cx="1113" cy="174" r="0.8"/><circle cx="1099" cy="177" r="0.7"/><circle cx="1110" cy="168" r="0.8"/><circle cx="1096" cy="165" r="0.6"/><circle cx="1103" cy="172" r="0.8"/><circle cx="1104" cy="175" r="0.7"/><circle cx="1105" cy="166" r="0.7"/><circle cx="1104" cy="178" r="0.7"/><circle cx="1103" cy="173" r="0.5"/><circle cx="1107" cy="174" r="0.7"/><circle cx="1108" cy="175" r="0.7"/><circle cx="1111" cy="173" r="1.0"/><circle cx="1106" cy="174" r="0.5"/><circle cx="1101" cy="174" r="0.6"/><circle cx="1100" cy="180" r="0.7"/><circle cx="1100" cy="167" r="0.6"/><circle cx="1103" cy="175" r="1.0"/><circle cx="1103" cy="163" r="0.7"/><circle cx="1104" cy="177" r="0.6"/><circle cx="1105" cy="168" r="0.7"/><circle cx="1109" cy="175" r="0.6"/><circle cx="1106" cy="178" r="0.7"/><circle cx="1107" cy="179" r="0.8"/><circle cx="1096" cy="174" r="0.7"/><circle cx="1110" cy="167" r="0.5"/><circle cx="1106" cy="166" r="0.5"/><circle cx="1108" cy="164" r="0.6"/><circle cx="1102" cy="171" r="0.7"/><circle cx="1106" cy="168" r="0.8"/><circle cx="1107" cy="167" r="0.7"/><circle cx="1099" cy="177" r="0.9"/><circle cx="1105" cy="170" r="0.8"/><circle cx="1100" cy="169" r="1.0"/><circle cx="1104" cy="163" r="0.5"/><circle cx="1107" cy="176" r="0.7"/><circle cx="1104" cy="169" r="0.4"/><circle cx="1103" cy="180" r="0.5"/><circle cx="1111" cy="170" r="0.8"/><circle cx="1105" cy="176" r="0.9"/><circle cx="1107" cy="172" r="1.0"/><circle cx="1107" cy="176" r="0.5"/><circle cx="1109" cy="177" r="0.8"/><circle cx="1106" cy="168" r="0.5"/><circle cx="1099" cy="165" r="0.6"/><circle cx="1109" cy="165" r="0.6"/><circle cx="1097" cy="173" r="0.6"/><circle cx="1103" cy="167" r="0.7"/><circle cx="1095" cy="169" r="0.4"/><circle cx="1111" cy="173" r="0.8"/><circle cx="1099" cy="173" r="0.6"/><circle cx="1109" cy="171" r="0.9"/><circle cx="1103" cy="167" r="0.4"/><circle cx="1112" cy="170" r="0.8"/><circle cx="1103" cy="170" r="0.5"/><circle cx="1111" cy="168" r="0.5"/><circle cx="1102" cy="173" r="0.6"/><circle cx="1110" cy="177" r="0.9"/><circle cx="1108" cy="172" r="0.7"/><circle cx="1109" cy="178" r="0.4"/></g><rect x="1116" y="182" width="5" height="6" fill="#ff7070" opacity="0.8"/><path d="M1114 185 L1120 185 M1117 182 L1117 188" stroke="#000" stroke-width="1.3"/><ellipse cx="1138" cy="171" rx="11" ry="9" fill="url(#gB)" opacity="0.8"/><g fill="#000" fill-opacity="0.75"><circle cx="1137" cy="170" r="0.5"/><circle cx="1131" cy="167" r="0.9"/><circle cx="1131" cy="170" r="0.5"/><circle cx="1134" cy="176" r="0.5"/><circle cx="1133" cy="176" r="0.8"/><circle cx="1137" cy="173" r="0.6"/><circle cx="1129" cy="171" r="1.0"/><circle cx="1135" cy="175" r="0.9"/><circle cx="1144" cy="166" r="0.7"/><circle cx="1135" cy="177" r="0.9"/><circle cx="1141" cy="168" r="0.7"/><circle cx="1144" cy="169" r="0.7"/><circle cx="1143" cy="172" r="0.6"/><circle cx="1133" cy="165" r="0.7"/><circle cx="1137" cy="177" r="0.5"/><circle cx="1129" cy="172" r="0.9"/><circle cx="1132" cy="165" r="0.4"/><circle cx="1142" cy="169" r="0.9"/><circle cx="1141" cy="175" r="0.9"/><circle cx="1129" cy="173" r="0.8"/><circle cx="1135" cy="172" r="0.9"/><circle cx="1138" cy="175" r="1.0"/><circle cx="1136" cy="176" r="1.0"/><circle cx="1135" cy="171" r="0.8"/><circle cx="1135" cy="173" r="1.0"/><circle cx="1134" cy="168" r="0.7"/><circle cx="1137" cy="178" r="0.9"/><circle cx="1142" cy="172" r="0.8"/><circle cx="1134" cy="165" r="0.6"/><circle cx="1135" cy="169" r="0.8"/><circle cx="1142" cy="173" r="0.5"/><circle cx="1142" cy="169" r="0.6"/><circle cx="1140" cy="172" r="0.8"/><circle cx="1142" cy="165" r="0.4"/><circle cx="1147" cy="170" r="0.9"/><circle cx="1134" cy="173" r="0.5"/><circle cx="1139" cy="171" r="0.9"/><circle cx="1137" cy="167" r="0.8"/><circle cx="1134" cy="167" r="0.5"/><circle cx="1147" cy="168" r="0.4"/><circle cx="1134" cy="169" r="0.9"/><circle cx="1134" cy="165" r="0.6"/><circle cx="1143" cy="173" r="0.7"/><circle cx="1139" cy="174" r="0.5"/><circle cx="1139" cy="164" r="0.7"/><circle cx="1140" cy="164" r="0.9"/><circle cx="1142" cy="169" r="0.8"/><circle cx="1146" cy="169" r="0.8"/><circle cx="1141" cy="169" r="0.7"/><circle cx="1141" cy="173" r="0.5"/><circle cx="1137" cy="176" r="0.6"/><circle cx="1142" cy="171" r="0.7"/><circle cx="1138" cy="169" r="0.8"/></g><g fill="#000" fill-opacity="0.5"><circle cx="1134" cy="175" r="0.7"/><circle cx="1138" cy="167" r="0.6"/><circle cx="1129" cy="170" r="0.7"/><circle cx="1136" cy="171" r="1.0"/><circle cx="1144" cy="170" r="0.4"/><circle cx="1135" cy="175" r="0.6"/><circle cx="1146" cy="171" r="0.8"/><circle cx="1140" cy="176" r="0.6"/><circle cx="1131" cy="173" r="0.4"/><circle cx="1147" cy="173" r="0.7"/><circle cx="1135" cy="176" r="0.8"/><circle cx="1142" cy="171" r="0.9"/><circle cx="1133" cy="173" r="0.5"/><circle cx="1139" cy="171" r="1.0"/><circle cx="1136" cy="173" r="0.8"/><circle cx="1147" cy="171" r="0.8"/><circle cx="1137" cy="171" r="0.8"/><circle cx="1142" cy="175" r="1.0"/><circle cx="1135" cy="172" r="0.7"/><circle cx="1136" cy="173" r="0.9"/><circle cx="1137" cy="177" r="0.9"/><circle cx="1136" cy="172" r="0.7"/><circle cx="1132" cy="171" r="0.4"/><circle cx="1140" cy="176" r="0.8"/><circle cx="1132" cy="168" r="0.7"/><circle cx="1134" cy="168" r="0.8"/><circle cx="1135" cy="178" r="0.6"/><circle cx="1132" cy="172" r="0.8"/><circle cx="1139" cy="175" r="0.9"/><circle cx="1131" cy="168" r="0.5"/><circle cx="1141" cy="172" r="0.9"/><circle cx="1135" cy="167" r="0.8"/><circle cx="1144" cy="170" r="0.9"/><circle cx="1140" cy="174" r="0.6"/><circle cx="1141" cy="176" r="0.6"/><circle cx="1136" cy="175" r="0.9"/><circle cx="1132" cy="173" r="0.9"/><circle cx="1142" cy="172" r="0.9"/><circle cx="1139" cy="175" r="0.7"/><circle cx="1141" cy="175" r="0.9"/></g><g fill="#000" fill-opacity="1.0"><circle cx="1144" cy="171" r="0.6"/><circle cx="1136" cy="171" r="0.9"/><circle cx="1145" cy="168" r="0.6"/><circle cx="1135" cy="164" r="0.6"/><circle cx="1141" cy="169" r="0.8"/><circle cx="1139" cy="167" r="0.7"/><circle cx="1131" cy="168" r="0.6"/><circle cx="1138" cy="171" r="0.4"/><circle cx="1146" cy="173" r="0.7"/><circle cx="1134" cy="176" r="0.8"/><circle cx="1145" cy="165" r="0.4"/><circle cx="1142" cy="169" r="0.9"/><circle cx="1136" cy="171" r="1.0"/><circle cx="1139" cy="165" r="0.6"/><circle cx="1139" cy="175" r="0.9"/><circle cx="1138" cy="170" r="0.7"/><circle cx="1129" cy="170" r="0.9"/><circle cx="1141" cy="170" r="0.6"/><circle cx="1143" cy="169" r="0.5"/><circle cx="1141" cy="167" r="0.4"/><circle cx="1141" cy="170" r="1.0"/><circle cx="1142" cy="176" r="0.7"/><circle cx="1138" cy="167" r="0.5"/><circle cx="1133" cy="171" r="0.5"/><circle cx="1136" cy="165" r="0.6"/><circle cx="1138" cy="173" r="0.6"/></g><rect x="1150" y="182" width="5" height="6" fill="#ff7070" opacity="0.8"/><path d="M1148 185 L1154 185 M1151 182 L1151 188" stroke="#000" stroke-width="1.3"/><ellipse cx="1172" cy="171" rx="9" ry="12" fill="url(#gB)" opacity="0.7200000000000001"/><g fill="#000" fill-opacity="0.25"><circle cx="1172" cy="171" r="0.7"/><circle cx="1175" cy="178" r="0.5"/><circle cx="1173" cy="177" r="0.6"/><circle cx="1175" cy="174" r="0.6"/><circle cx="1167" cy="170" r="0.6"/><circle cx="1170" cy="164" r="0.7"/><circle cx="1167" cy="177" r="0.4"/><circle cx="1175" cy="169" r="0.7"/><circle cx="1176" cy="177" r="0.5"/><circle cx="1173" cy="171" r="0.8"/><circle cx="1172" cy="171" r="0.6"/><circle cx="1169" cy="169" r="0.6"/></g><g fill="#000" fill-opacity="0.75"><circle cx="1172" cy="166" r="0.4"/><circle cx="1168" cy="175" r="0.8"/><circle cx="1167" cy="171" r="0.9"/><circle cx="1167" cy="165" r="0.6"/><circle cx="1171" cy="178" r="0.9"/><circle cx="1172" cy="168" r="0.7"/><circle cx="1175" cy="162" r="0.9"/><circle cx="1173" cy="173" r="0.8"/><circle cx="1174" cy="165" r="0.8"/><circle cx="1172" cy="169" r="1.0"/><circle cx="1171" cy="175" r="0.6"/><circle cx="1174" cy="164" r="0.6"/><circle cx="1171" cy="166" r="0.7"/><circle cx="1174" cy="173" r="0.6"/><circle cx="1174" cy="178" r="0.6"/><circle cx="1176" cy="172" r="0.5"/><circle cx="1177" cy="173" r="0.8"/><circle cx="1170" cy="166" r="0.6"/><circle cx="1169" cy="166" r="1.0"/><circle cx="1168" cy="176" r="0.9"/><circle cx="1172" cy="166" r="0.6"/><circle cx="1176" cy="176" r="0.7"/><circle cx="1167" cy="166" r="0.6"/><circle cx="1175" cy="163" r="0.5"/><circle cx="1168" cy="174" r="0.6"/><circle cx="1172" cy="160" r="0.7"/><circle cx="1174" cy="163" r="0.8"/><circle cx="1173" cy="173" r="0.9"/><circle cx="1178" cy="173" r="0.8"/><circle cx="1172" cy="174" r="0.6"/><circle cx="1174" cy="178" r="0.4"/><circle cx="1170" cy="163" r="0.9"/><circle cx="1170" cy="171" r="0.5"/><circle cx="1173" cy="167" r="0.7"/><circle cx="1172" cy="177" r="0.9"/><circle cx="1171" cy="165" r="0.9"/><circle cx="1175" cy="178" r="0.4"/><circle cx="1177" cy="168" r="0.8"/><circle cx="1173" cy="178" r="0.4"/><circle cx="1174" cy="165" r="0.6"/></g><g fill="#000" fill-opacity="0.5"><circle cx="1166" cy="164" r="0.9"/><circle cx="1170" cy="162" r="0.6"/><circle cx="1171" cy="171" r="0.6"/><circle cx="1174" cy="173" r="0.5"/><circle cx="1179" cy="167" r="0.9"/><circle cx="1169" cy="178" r="1.0"/><circle cx="1175" cy="171" r="0.5"/><circle cx="1179" cy="170" r="0.7"/><circle cx="1175" cy="178" r="0.6"/><circle cx="1173" cy="177" r="0.9"/><circle cx="1174" cy="162" r="0.8"/><circle cx="1174" cy="161" r="0.8"/><circle cx="1172" cy="171" r="0.7"/><circle cx="1170" cy="177" r="0.7"/><circle cx="1169" cy="170" r="0.7"/><circle cx="1174" cy="175" r="1.0"/><circle cx="1167" cy="164" r="1.0"/><circle cx="1175" cy="171" r="0.5"/><circle cx="1173" cy="171" r="0.6"/><circle cx="1166" cy="178" r="0.7"/><circle cx="1169" cy="166" r="0.5"/><circle cx="1176" cy="167" r="0.7"/><circle cx="1177" cy="170" r="0.9"/><circle cx="1172" cy="173" r="0.6"/><circle cx="1170" cy="161" r="0.5"/><circle cx="1167" cy="169" r="0.8"/><circle cx="1175" cy="178" r="0.7"/><circle cx="1165" cy="168" r="0.5"/><circle cx="1176" cy="173" r="1.0"/><circle cx="1172" cy="162" r="0.8"/><circle cx="1165" cy="172" r="0.6"/><circle cx="1172" cy="164" r="0.7"/><circle cx="1165" cy="170" r="0.8"/><circle cx="1179" cy="172" r="0.8"/><circle cx="1171" cy="168" r="0.7"/><circle cx="1168" cy="162" r="0.8"/><circle cx="1172" cy="161" r="0.5"/><circle cx="1178" cy="167" r="0.4"/><circle cx="1175" cy="179" r="0.5"/><circle cx="1173" cy="170" r="0.5"/><circle cx="1169" cy="178" r="0.8"/><circle cx="1176" cy="165" r="0.9"/><circle cx="1171" cy="163" r="0.9"/></g><g fill="#000" fill-opacity="1.0"><circle cx="1170" cy="168" r="0.7"/><circle cx="1173" cy="161" r="0.6"/><circle cx="1167" cy="174" r="0.8"/><circle cx="1178" cy="171" r="0.6"/><circle cx="1167" cy="170" r="0.7"/><circle cx="1170" cy="171" r="0.6"/></g><rect x="1184" y="182" width="5" height="6" fill="#ff7070" opacity="0.8"/><path d="M1182 185 L1188 185 M1185 182 L1185 188" stroke="#000" stroke-width="1.3"/><ellipse cx="1206" cy="171" rx="11" ry="11" fill="url(#gB)" opacity="0.4"/><g fill="#000" fill-opacity="0.5"><circle cx="1209" cy="177" r="1.0"/><circle cx="1204" cy="165" r="0.5"/><circle cx="1216" cy="172" r="1.0"/><circle cx="1200" cy="178" r="0.6"/><circle cx="1213" cy="165" r="0.9"/><circle cx="1196" cy="173" r="0.9"/><circle cx="1209" cy="164" r="0.8"/><circle cx="1210" cy="164" r="1.0"/><circle cx="1211" cy="166" r="0.5"/><circle cx="1204" cy="172" r="0.7"/><circle cx="1209" cy="175" r="0.4"/><circle cx="1208" cy="173" r="0.4"/><circle cx="1200" cy="165" r="0.8"/><circle cx="1208" cy="163" r="0.5"/><circle cx="1199" cy="169" r="0.7"/><circle cx="1203" cy="167" r="0.9"/><circle cx="1199" cy="173" r="0.4"/><circle cx="1203" cy="166" r="1.0"/><circle cx="1212" cy="176" r="0.9"/><circle cx="1205" cy="179" r="0.6"/><circle cx="1199" cy="176" r="0.9"/><circle cx="1201" cy="167" r="0.7"/><circle cx="1207" cy="179" r="0.6"/><circle cx="1211" cy="164" r="0.7"/><circle cx="1198" cy="173" r="0.6"/><circle cx="1199" cy="169" r="0.5"/><circle cx="1214" cy="166" r="0.4"/><circle cx="1209" cy="166" r="0.5"/><circle cx="1211" cy="163" r="0.4"/><circle cx="1204" cy="178" r="0.8"/><circle cx="1210" cy="178" r="0.5"/><circle cx="1201" cy="167" r="0.8"/><circle cx="1209" cy="169" r="0.7"/><circle cx="1204" cy="180" r="0.8"/><circle cx="1201" cy="178" r="0.6"/><circle cx="1201" cy="173" r="0.9"/><circle cx="1200" cy="168" r="0.5"/><circle cx="1204" cy="172" r="0.9"/><circle cx="1203" cy="177" r="0.4"/><circle cx="1200" cy="171" r="0.5"/></g><g fill="#000" fill-opacity="0.25"><circle cx="1203" cy="172" r="0.9"/><circle cx="1207" cy="165" r="0.9"/><circle cx="1202" cy="171" r="0.5"/><circle cx="1199" cy="175" r="0.9"/><circle cx="1212" cy="165" r="0.5"/><circle cx="1208" cy="179" r="0.5"/><circle cx="1198" cy="175" r="0.9"/><circle cx="1204" cy="176" r="0.9"/><circle cx="1202" cy="167" r="0.4"/><circle cx="1204" cy="176" r="0.9"/><circle cx="1197" cy="172" r="0.5"/><circle cx="1205" cy="167" r="0.8"/><circle cx="1202" cy="163" r="0.6"/><circle cx="1206" cy="174" r="0.7"/><circle cx="1214" cy="168" r="0.6"/><circle cx="1203" cy="172" r="0.8"/><circle cx="1207" cy="178" r="0.9"/><circle cx="1210" cy="171" r="0.9"/><circle cx="1208" cy="171" r="0.6"/><circle cx="1208" cy="176" r="1.0"/><circle cx="1198" cy="167" r="0.6"/><circle cx="1204" cy="171" r="0.4"/><circle cx="1202" cy="167" r="0.8"/><circle cx="1215" cy="170" r="0.6"/><circle cx="1206" cy="164" r="0.7"/><circle cx="1206" cy="174" r="0.4"/><circle cx="1208" cy="165" r="0.8"/><circle cx="1211" cy="175" r="0.6"/><circle cx="1207" cy="180" r="0.8"/><circle cx="1214" cy="174" r="0.4"/><circle cx="1212" cy="167" r="0.8"/><circle cx="1204" cy="168" r="0.7"/><circle cx="1206" cy="174" r="0.6"/><circle cx="1208" cy="174" r="0.8"/><circle cx="1210" cy="172" r="0.8"/><circle cx="1207" cy="177" r="0.8"/><circle cx="1213" cy="178" r="0.5"/><circle cx="1199" cy="166" r="0.9"/><circle cx="1203" cy="176" r="0.9"/><circle cx="1214" cy="171" r="0.6"/><circle cx="1212" cy="171" r="0.5"/><circle cx="1210" cy="174" r="0.8"/><circle cx="1202" cy="167" r="0.8"/><circle cx="1211" cy="164" r="0.8"/><circle cx="1210" cy="169" r="0.7"/><circle cx="1199" cy="175" r="0.6"/><circle cx="1206" cy="165" r="0.6"/><circle cx="1206" cy="165" r="0.6"/><circle cx="1209" cy="179" r="0.8"/><circle cx="1198" cy="171" r="0.5"/><circle cx="1209" cy="164" r="0.7"/><circle cx="1204" cy="173" r="0.8"/><circle cx="1208" cy="172" r="0.8"/><circle cx="1209" cy="166" r="0.8"/><circle cx="1213" cy="172" r="0.4"/><circle cx="1199" cy="178" r="0.9"/><circle cx="1206" cy="166" r="0.4"/><circle cx="1205" cy="178" r="0.5"/><circle cx="1198" cy="173" r="0.6"/><circle cx="1200" cy="174" r="0.6"/><circle cx="1200" cy="170" r="0.8"/><circle cx="1202" cy="171" r="0.4"/><circle cx="1199" cy="175" r="0.5"/><circle cx="1204" cy="170" r="0.8"/><circle cx="1205" cy="174" r="0.5"/><circle cx="1207" cy="162" r="0.9"/><circle cx="1204" cy="173" r="0.7"/><circle cx="1211" cy="166" r="1.0"/><circle cx="1199" cy="169" r="0.8"/><circle cx="1210" cy="178" r="1.0"/><circle cx="1200" cy="173" r="0.6"/><circle cx="1215" cy="171" r="0.6"/><circle cx="1203" cy="171" r="0.8"/><circle cx="1213" cy="177" r="0.4"/><circle cx="1209" cy="165" r="0.5"/><circle cx="1211" cy="178" r="0.7"/><circle cx="1214" cy="175" r="0.9"/><circle cx="1208" cy="177" r="0.6"/><circle cx="1206" cy="169" r="0.7"/><circle cx="1208" cy="166" r="0.8"/><circle cx="1215" cy="173" r="0.7"/><circle cx="1203" cy="177" r="0.5"/><circle cx="1207" cy="181" r="1.0"/><circle cx="1209" cy="170" r="0.8"/><circle cx="1209" cy="176" r="0.7"/></g><rect x="1218" y="182" width="5" height="6" fill="#ff7070" opacity="0.8"/><path d="M1216 185 L1222 185 M1219 182 L1219 188" stroke="#000" stroke-width="1.3"/><ellipse cx="1240" cy="171" rx="13" ry="12" fill="url(#gB)" opacity="0.8"/><g fill="#000" fill-opacity="0.75"><circle cx="1241" cy="175" r="0.9"/><circle cx="1237" cy="174" r="0.4"/><circle cx="1241" cy="174" r="0.9"/><circle cx="1245" cy="162" r="0.5"/><circle cx="1235" cy="162" r="0.7"/><circle cx="1244" cy="170" r="0.5"/><circle cx="1247" cy="172" r="0.5"/><circle cx="1246" cy="168" r="0.7"/><circle cx="1242" cy="172" r="0.6"/><circle cx="1245" cy="171" r="0.5"/><circle cx="1230" cy="174" r="0.6"/><circle cx="1242" cy="169" r="0.9"/><circle cx="1239" cy="177" r="0.5"/><circle cx="1246" cy="166" r="0.7"/><circle cx="1240" cy="175" r="0.9"/><circle cx="1241" cy="164" r="0.6"/><circle cx="1248" cy="171" r="0.9"/><circle cx="1236" cy="179" r="0.7"/><circle cx="1245" cy="175" r="0.5"/><circle cx="1239" cy="174" r="0.9"/><circle cx="1242" cy="178" r="0.9"/><circle cx="1235" cy="175" r="0.6"/><circle cx="1236" cy="176" r="0.9"/><circle cx="1238" cy="167" r="0.8"/><circle cx="1237" cy="182" r="0.7"/><circle cx="1242" cy="181" r="0.8"/><circle cx="1247" cy="168" r="0.8"/><circle cx="1235" cy="173" r="1.0"/><circle cx="1242" cy="177" r="1.0"/><circle cx="1244" cy="165" r="1.0"/><circle cx="1250" cy="175" r="0.8"/><circle cx="1242" cy="161" r="0.7"/><circle cx="1242" cy="167" r="0.6"/><circle cx="1234" cy="170" r="0.6"/><circle cx="1240" cy="176" r="0.6"/><circle cx="1233" cy="173" r="0.5"/><circle cx="1233" cy="167" r="0.6"/><circle cx="1235" cy="170" r="0.6"/><circle cx="1229" cy="175" r="0.6"/><circle cx="1239" cy="181" r="0.5"/><circle cx="1243" cy="174" r="0.7"/><circle cx="1235" cy="168" r="0.9"/><circle cx="1238" cy="172" r="0.5"/><circle cx="1235" cy="174" r="0.6"/><circle cx="1247" cy="170" r="0.4"/><circle cx="1247" cy="171" r="0.7"/><circle cx="1230" cy="174" r="1.0"/><circle cx="1245" cy="168" r="0.9"/><circle cx="1235" cy="166" r="0.4"/><circle cx="1245" cy="174" r="0.6"/><circle cx="1240" cy="172" r="0.6"/><circle cx="1248" cy="163" r="0.5"/><circle cx="1230" cy="173" r="0.8"/><circle cx="1236" cy="168" r="0.7"/><circle cx="1239" cy="169" r="1.0"/><circle cx="1233" cy="174" r="0.4"/><circle cx="1246" cy="169" r="0.8"/><circle cx="1241" cy="171" r="0.5"/><circle cx="1247" cy="167" r="0.5"/><circle cx="1241" cy="164" r="0.6"/><circle cx="1246" cy="163" r="0.4"/><circle cx="1235" cy="177" r="0.4"/><circle cx="1236" cy="179" r="0.5"/><circle cx="1241" cy="166" r="0.9"/><circle cx="1230" cy="168" r="0.8"/><circle cx="1236" cy="172" r="0.5"/><circle cx="1234" cy="175" r="0.8"/><circle cx="1235" cy="169" r="0.9"/><circle cx="1248" cy="170" r="0.5"/><circle cx="1238" cy="170" r="0.8"/><circle cx="1237" cy="168" r="0.9"/><circle cx="1244" cy="163" r="0.5"/><circle cx="1238" cy="167" r="0.7"/><circle cx="1241" cy="160" r="0.5"/><circle cx="1244" cy="173" r="0.8"/><circle cx="1235" cy="168" r="0.4"/><circle cx="1246" cy="174" r="0.7"/><circle cx="1236" cy="163" r="0.7"/><circle cx="1233" cy="166" r="0.6"/><circle cx="1241" cy="167" r="0.6"/><circle cx="1248" cy="167" r="0.6"/><circle cx="1243" cy="179" r="0.6"/><circle cx="1240" cy="171" r="1.0"/><circle cx="1250" cy="175" r="0.5"/><circle cx="1229" cy="171" r="0.6"/></g><g fill="#000" fill-opacity="0.5"><circle cx="1232" cy="170" r="0.5"/><circle cx="1247" cy="172" r="0.5"/><circle cx="1239" cy="172" r="0.4"/><circle cx="1243" cy="167" r="0.7"/><circle cx="1231" cy="176" r="0.7"/><circle cx="1241" cy="166" r="0.4"/><circle cx="1244" cy="181" r="0.7"/><circle cx="1250" cy="168" r="0.7"/><circle cx="1245" cy="171" r="0.9"/><circle cx="1232" cy="168" r="0.5"/><circle cx="1247" cy="176" r="0.7"/><circle cx="1243" cy="161" r="0.4"/><circle cx="1245" cy="168" r="0.8"/><circle cx="1249" cy="171" r="0.5"/><circle cx="1241" cy="168" r="0.7"/><circle cx="1242" cy="176" r="0.8"/><circle cx="1249" cy="166" r="0.6"/><circle cx="1245" cy="177" r="0.5"/><circle cx="1244" cy="175" r="0.6"/><circle cx="1244" cy="166" r="0.7"/><circle cx="1240" cy="168" r="0.6"/><circle cx="1246" cy="170" r="0.5"/><circle cx="1233" cy="174" r="0.6"/><circle cx="1242" cy="171" r="0.5"/><circle cx="1239" cy="173" r="0.5"/><circle cx="1234" cy="162" r="0.9"/><circle cx="1240" cy="164" r="0.9"/><circle cx="1233" cy="165" r="0.5"/><circle cx="1240" cy="182" r="0.6"/><circle cx="1245" cy="170" r="0.4"/><circle cx="1233" cy="175" r="0.9"/><circle cx="1232" cy="163" r="0.5"/><circle cx="1234" cy="165" r="0.6"/><circle cx="1239" cy="174" r="0.6"/><circle cx="1237" cy="166" r="0.5"/><circle cx="1244" cy="181" r="0.4"/><circle cx="1234" cy="163" r="0.9"/><circle cx="1238" cy="166" r="0.4"/><circle cx="1237" cy="168" r="0.7"/><circle cx="1246" cy="180" r="0.8"/><circle cx="1246" cy="178" r="0.9"/><circle cx="1230" cy="166" r="0.8"/><circle cx="1243" cy="167" r="0.6"/><circle cx="1239" cy="173" r="0.5"/><circle cx="1229" cy="174" r="0.9"/><circle cx="1247" cy="177" r="0.7"/><circle cx="1239" cy="166" r="0.5"/><circle cx="1245" cy="166" r="0.8"/><circle cx="1237" cy="176" r="0.6"/><circle cx="1230" cy="167" r="1.0"/><circle cx="1245" cy="172" r="0.7"/><circle cx="1243" cy="164" r="0.6"/><circle cx="1236" cy="163" r="0.7"/><circle cx="1237" cy="163" r="0.7"/><circle cx="1242" cy="167" r="0.7"/><circle cx="1241" cy="163" r="0.5"/><circle cx="1233" cy="166" r="0.5"/><circle cx="1230" cy="171" r="0.5"/><circle cx="1238" cy="168" r="0.8"/><circle cx="1235" cy="179" r="0.9"/><circle cx="1234" cy="172" r="0.6"/><circle cx="1250" cy="167" r="1.0"/><circle cx="1250" cy="166" r="0.5"/><circle cx="1246" cy="173" r="0.7"/><circle cx="1238" cy="176" r="0.9"/><circle cx="1249" cy="171" r="0.7"/><circle cx="1238" cy="161" r="0.6"/><circle cx="1247" cy="171" r="0.9"/><circle cx="1246" cy="172" r="0.8"/><circle cx="1238" cy="173" r="0.7"/><circle cx="1239" cy="169" r="0.8"/><circle cx="1241" cy="174" r="0.9"/><circle cx="1232" cy="170" r="1.0"/><circle cx="1241" cy="166" r="0.8"/><circle cx="1241" cy="172" r="0.8"/><circle cx="1238" cy="167" r="0.8"/><circle cx="1244" cy="168" r="0.8"/><circle cx="1233" cy="175" r="0.9"/><circle cx="1249" cy="177" r="0.6"/><circle cx="1247" cy="177" r="0.7"/><circle cx="1249" cy="178" r="0.8"/><circle cx="1245" cy="170" r="0.7"/><circle cx="1243" cy="171" r="0.6"/></g><g fill="#000" fill-opacity="1.0"><circle cx="1244" cy="171" r="0.5"/><circle cx="1233" cy="164" r="0.9"/><circle cx="1234" cy="165" r="0.7"/><circle cx="1235" cy="172" r="0.8"/><circle cx="1232" cy="171" r="0.5"/><circle cx="1232" cy="178" r="0.9"/><circle cx="1235" cy="178" r="0.6"/><circle cx="1230" cy="166" r="0.9"/><circle cx="1249" cy="178" r="0.8"/><circle cx="1249" cy="166" r="0.8"/><circle cx="1243" cy="171" r="0.9"/><circle cx="1240" cy="169" r="0.5"/><circle cx="1247" cy="164" r="1.0"/><circle cx="1242" cy="169" r="0.4"/><circle cx="1237" cy="175" r="0.8"/><circle cx="1247" cy="167" r="0.7"/><circle cx="1234" cy="166" r="0.5"/><circle cx="1237" cy="166" r="0.4"/><circle cx="1248" cy="168" r="0.4"/><circle cx="1232" cy="171" r="0.6"/><circle cx="1252" cy="170" r="0.6"/><circle cx="1239" cy="164" r="0.9"/><circle cx="1235" cy="167" r="0.4"/><circle cx="1241" cy="166" r="0.5"/><circle cx="1236" cy="176" r="0.9"/><circle cx="1243" cy="168" r="0.8"/><circle cx="1243" cy="172" r="0.9"/><circle cx="1235" cy="165" r="0.4"/><circle cx="1245" cy="166" r="0.7"/><circle cx="1238" cy="180" r="0.8"/><circle cx="1232" cy="178" r="0.7"/><circle cx="1236" cy="178" r="0.9"/><circle cx="1236" cy="168" r="0.5"/><circle cx="1240" cy="178" r="0.9"/><circle cx="1245" cy="172" r="1.0"/><circle cx="1236" cy="179" r="0.9"/><circle cx="1238" cy="169" r="1.0"/><circle cx="1240" cy="173" r="0.6"/><circle cx="1243" cy="176" r="0.7"/><circle cx="1233" cy="170" r="0.8"/><circle cx="1241" cy="168" r="0.7"/><circle cx="1233" cy="174" r="0.7"/><circle cx="1248" cy="175" r="0.6"/><circle cx="1235" cy="173" r="0.7"/><circle cx="1240" cy="164" r="0.8"/><circle cx="1243" cy="163" r="0.9"/><circle cx="1232" cy="167" r="0.8"/><circle cx="1247" cy="174" r="0.8"/><circle cx="1238" cy="171" r="0.7"/></g><rect x="1252" y="182" width="5" height="6" fill="#ff7070" opacity="0.8"/><path d="M1250 185 L1256 185 M1253 182 L1253 188" stroke="#000" stroke-width="1.3"/><path d="M1260 157 L1263 163" stroke="#333" stroke-width="1.2"/><path d="M1290 181 L1290 187 L1284 187 Z" fill="#ff7070"/><g fill="#000" fill-opacity="0.75"><circle cx="1302" cy="162" r="1.2"/><circle cx="1307" cy="163" r="1.1"/><circle cx="1306" cy="164" r="1.2"/><circle cx="1315" cy="175" r="1.2"/><circle cx="1315" cy="176" r="1.3"/><circle cx="1307" cy="170" r="1.3"/><circle cx="1311" cy="180" r="1.0"/><circle cx="1312" cy="177" r="1.5"/><circle cx="1298" cy="170" r="1.0"/><circle cx="1309" cy="169" r="1.0"/></g><g fill="#000" fill-opacity="1.0"><circle cx="1307" cy="163" r="1.4"/><circle cx="1307" cy="165" r="0.8"/><circle cx="1315" cy="167" r="1.2"/></g><g fill="#000" fill-opacity="0.5"><circle cx="1301" cy="177" r="1.2"/></g><path d="M1318 185 L1324 185 M1321 182 L1321 188" stroke="#000" stroke-width="1.3"/><g fill="#000" fill-opacity="0.75"><circle cx="1343" cy="182" r="1.3"/><circle cx="1350" cy="173" r="1.9"/><circle cx="1349" cy="172" r="1.1"/><circle cx="1344" cy="171" r="1.6"/><circle cx="1350" cy="178" r="1.3"/><circle cx="1334" cy="172" r="1.3"/><circle cx="1335" cy="175" r="1.2"/><circle cx="1352" cy="166" r="2.1"/><circle cx="1354" cy="169" r="1.0"/><circle cx="1339" cy="172" r="0.9"/><circle cx="1336" cy="176" r="1.4"/><circle cx="1339" cy="168" r="1.6"/><circle cx="1350" cy="163" r="2.2"/><circle cx="1345" cy="169" r="1.1"/><circle cx="1342" cy="169" r="1.6"/><circle cx="1342" cy="176" r="1.0"/></g><g fill="#000" fill-opacity="1.0"><circle cx="1343" cy="179" r="1.0"/><circle cx="1346" cy="161" r="1.9"/><circle cx="1350" cy="168" r="2.0"/><circle cx="1341" cy="164" r="1.3"/><circle cx="1345" cy="169" r="1.4"/></g><g fill="#000" fill-opacity="0.5"><circle cx="1352" cy="174" r="0.8"/><circle cx="1342" cy="169" r="2.2"/><circle cx="1343" cy="170" r="1.3"/><circle cx="1345" cy="173" r="2.0"/><circle cx="1353" cy="173" r="1.8"/></g><path d="M1352 185 L1358 185 M1355 182 L1355 188" stroke="#000" stroke-width="1.3"/><g fill="#000" fill-opacity="1.0"><circle cx="1383" cy="170" r="0.5"/><circle cx="1365" cy="170" r="0.8"/><circle cx="1378" cy="163" r="0.7"/><circle cx="1370" cy="176" r="0.7"/><circle cx="1387" cy="170" r="0.8"/><circle cx="1388" cy="169" r="0.9"/></g><g fill="#000" fill-opacity="0.75"><circle cx="1365" cy="174" r="0.8"/><circle cx="1364" cy="167" r="0.8"/><circle cx="1376" cy="170" r="0.8"/><circle cx="1387" cy="177" r="0.8"/><circle cx="1379" cy="166" r="0.5"/><circle cx="1385" cy="166" r="0.6"/><circle cx="1374" cy="174" r="0.6"/><circle cx="1367" cy="169" r="0.6"/><circle cx="1383" cy="172" r="0.7"/><circle cx="1381" cy="160" r="0.9"/><circle cx="1372" cy="165" r="0.5"/><circle cx="1373" cy="178" r="0.8"/><circle cx="1378" cy="164" r="0.6"/></g><g fill="#000" fill-opacity="0.5"><circle cx="1365" cy="170" r="0.6"/><circle cx="1385" cy="167" r="0.5"/><circle cx="1376" cy="183" r="0.8"/><circle cx="1372" cy="174" r="0.8"/><circle cx="1375" cy="162" r="0.8"/></g><path d="M1386 185 L1392 185 M1389 182 L1389 188" stroke="#000" stroke-width="1.3"/><circle cx="1063.0" cy="205.0" r="2.1" fill="none" stroke="#000" stroke-width="0.9"/><circle cx="1068.8" cy="197.8" r="1.6" fill="none" stroke="#000" stroke-width="0.9"/><circle cx="1073.4" cy="211.4" r="2.5" fill="none" stroke="#000" stroke-width="0.9"/><circle cx="1073.0" cy="208.6" r="1.4" fill="none" stroke="#000" stroke-width="0.9"/><circle cx="1073.4" cy="212.8" r="2.0" fill="none" stroke="#000" stroke-width="0.9"/><circle cx="1074.3" cy="198.6" r="1.9" fill="none" stroke="#000" stroke-width="0.9"/><circle cx="1079.6" cy="207.1" r="2.5" fill="none" stroke="#000" stroke-width="0.9"/><circle cx="1065.1" cy="202.4" r="2.5" fill="none" stroke="#000" stroke-width="0.9"/><circle cx="1075.9" cy="200.1" r="1.4" fill="none" stroke="#000" stroke-width="0.9"/><circle cx="1067.4" cy="200.3" r="1.3" fill="none" stroke="#000" stroke-width="0.9"/><circle cx="1068.7" cy="203.8" r="2.5" fill="none" stroke="#000" stroke-width="0.9"/><circle cx="1072.4" cy="196.9" r="1.9" fill="none" stroke="#000" stroke-width="0.9"/><circle cx="1062.2" cy="209.9" r="1.5" fill="none" stroke="#000" stroke-width="0.9"/><circle cx="1073.2" cy="213.1" r="2.2" fill="none" stroke="#000" stroke-width="0.9"/><circle cx="1071.6" cy="198.5" r="1.8" fill="none" stroke="#000" stroke-width="0.9"/><circle cx="1073.1" cy="213.5" r="2.1" fill="none" stroke="#000" stroke-width="0.9"/><circle cx="1064.9" cy="208.4" r="2.5" fill="none" stroke="#000" stroke-width="0.9"/><circle cx="1071.6" cy="204.3" r="2.5" fill="none" stroke="#000" stroke-width="0.9"/><circle cx="1069.8" cy="202.6" r="2.4" fill="none" stroke="#000" stroke-width="0.9"/><circle cx="1076.2" cy="210.3" r="2.0" fill="none" stroke="#000" stroke-width="0.9"/><circle cx="1077.0" cy="203.6" r="2.0" fill="none" stroke="#000" stroke-width="0.9"/><circle cx="1079.6" cy="200.9" r="2.2" fill="none" stroke="#000" stroke-width="0.9"/><circle cx="1067.8" cy="206.9" r="2.5" fill="none" stroke="#000" stroke-width="0.9"/><circle cx="1061.0" cy="204.8" r="2.5" fill="none" stroke="#000" stroke-width="0.9"/><g fill="#000" fill-opacity="0.25"><circle cx="1059" cy="203" r="1.0"/><circle cx="1075" cy="214" r="0.7"/><circle cx="1062" cy="210" r="0.8"/><circle cx="1071" cy="199" r="1.2"/><circle cx="1078" cy="208" r="1.0"/><circle cx="1061" cy="206" r="0.4"/><circle cx="1074" cy="203" r="0.4"/><circle cx="1065" cy="212" r="0.6"/><circle cx="1070" cy="212" r="1.1"/><circle cx="1075" cy="199" r="0.9"/><circle cx="1079" cy="212" r="0.9"/><circle cx="1079" cy="207" r="0.4"/><circle cx="1059" cy="208" r="0.8"/><circle cx="1074" cy="205" r="1.2"/><circle cx="1070" cy="216" r="1.1"/><circle cx="1066" cy="211" r="0.6"/><circle cx="1074" cy="198" r="1.1"/><circle cx="1074" cy="192" r="0.7"/><circle cx="1066" cy="212" r="0.4"/><circle cx="1080" cy="210" r="0.7"/><circle cx="1075" cy="199" r="0.7"/><circle cx="1063" cy="203" r="1.2"/><circle cx="1061" cy="210" r="1.3"/><circle cx="1069" cy="195" r="1.2"/><circle cx="1079" cy="204" r="0.9"/><circle cx="1064" cy="210" r="0.6"/><circle cx="1072" cy="214" r="0.5"/><circle cx="1058" cy="203" r="0.4"/><circle cx="1069" cy="212" r="0.8"/><circle cx="1072" cy="191" r="1.3"/><circle cx="1069" cy="199" r="1.2"/><circle cx="1058" cy="203" r="1.2"/><circle cx="1078" cy="201" r="1.0"/><circle cx="1071" cy="212" r="0.5"/><circle cx="1082" cy="209" r="0.5"/><circle cx="1073" cy="201" r="0.9"/><circle cx="1075" cy="196" r="0.6"/><circle cx="1069" cy="215" r="1.3"/><circle cx="1076" cy="197" r="0.6"/><circle cx="1070" cy="205" r="1.0"/><circle cx="1060" cy="198" r="0.8"/><circle cx="1071" cy="207" r="1.3"/><circle cx="1060" cy="200" r="1.0"/></g><g fill="#000" fill-opacity="0.5"><circle cx="1068" cy="209" r="0.8"/><circle cx="1078" cy="208" r="0.6"/><circle cx="1071" cy="199" r="1.1"/><circle cx="1069" cy="193" r="0.7"/></g><path d="M1080 219 L1086 219 M1083 216 L1083 222" stroke="#000" stroke-width="1.3"/><circle cx="1104" cy="205" r="14" fill="#000"/><circle cx="1095.6" cy="200.1" r="2.6" fill="#fff"/><circle cx="1092.8" cy="205.0" r="2.6" fill="#fff"/><circle cx="1095.6" cy="209.9" r="2.6" fill="#fff"/><circle cx="1098.4" cy="195.2" r="3.0" fill="#fff"/><circle cx="1101.2" cy="200.1" r="3.0" fill="#fff"/><circle cx="1098.4" cy="205.0" r="3.0" fill="#fff"/><circle cx="1101.2" cy="209.9" r="3.0" fill="#fff"/><circle cx="1098.4" cy="214.8" r="3.0" fill="#fff"/><circle cx="1104.0" cy="195.2" r="2.3" fill="#fff"/><circle cx="1106.8" cy="200.1" r="2.3" fill="#fff"/><circle cx="1104.0" cy="205.0" r="2.3" fill="#fff"/><circle cx="1106.8" cy="209.9" r="2.3" fill="#fff"/><circle cx="1104.0" cy="214.8" r="2.3" fill="#fff"/><circle cx="1109.6" cy="195.2" r="2.6" fill="#fff"/><circle cx="1112.4" cy="200.1" r="2.6" fill="#fff"/><circle cx="1109.6" cy="205.0" r="2.6" fill="#fff"/><circle cx="1112.4" cy="209.9" r="2.6" fill="#fff"/><circle cx="1109.6" cy="214.8" r="2.6" fill="#fff"/><circle cx="1115.2" cy="205.0" r="3.0" fill="#fff"/><path d="M1114 219 L1120 219 M1117 216 L1117 222" stroke="#000" stroke-width="1.3"/><g fill="#000" fill-opacity="0.5"><circle cx="1142" cy="203" r="0.9"/><circle cx="1140" cy="210" r="0.7"/><circle cx="1132" cy="205" r="0.9"/><circle cx="1147" cy="210" r="0.5"/><circle cx="1132" cy="197" r="0.4"/><circle cx="1134" cy="202" r="0.5"/><circle cx="1142" cy="207" r="1.1"/><circle cx="1142" cy="194" r="0.5"/><circle cx="1141" cy="217" r="0.7"/><circle cx="1147" cy="202" r="0.6"/><circle cx="1130" cy="204" r="1.1"/><circle cx="1147" cy="200" r="0.7"/><circle cx="1128" cy="205" r="1.0"/><circle cx="1127" cy="200" r="0.5"/><circle cx="1132" cy="203" r="0.6"/><circle cx="1139" cy="216" r="0.9"/><circle cx="1143" cy="194" r="1.0"/><circle cx="1139" cy="206" r="0.9"/><circle cx="1134" cy="196" r="0.9"/><circle cx="1140" cy="195" r="0.4"/><circle cx="1130" cy="201" r="0.5"/><circle cx="1129" cy="212" r="0.8"/><circle cx="1128" cy="203" r="0.5"/><circle cx="1144" cy="199" r="0.8"/><circle cx="1136" cy="205" r="0.9"/><circle cx="1132" cy="205" r="0.5"/><circle cx="1135" cy="210" r="0.8"/><circle cx="1127" cy="212" r="1.0"/><circle cx="1147" cy="200" r="0.7"/><circle cx="1141" cy="201" r="0.6"/><circle cx="1134" cy="201" r="0.9"/><circle cx="1142" cy="207" r="0.4"/><circle cx="1129" cy="199" r="0.9"/><circle cx="1149" cy="199" r="0.6"/><circle cx="1136" cy="199" r="0.7"/><circle cx="1143" cy="217" r="1.1"/><circle cx="1132" cy="194" r="0.6"/><circle cx="1141" cy="215" r="0.7"/><circle cx="1126" cy="209" r="1.0"/><circle cx="1135" cy="208" r="0.5"/><circle cx="1132" cy="210" r="1.0"/><circle cx="1135" cy="203" r="0.5"/><circle cx="1132" cy="210" r="0.7"/><circle cx="1133" cy="199" r="1.0"/><circle cx="1143" cy="211" r="0.5"/><circle cx="1150" cy="208" r="0.4"/><circle cx="1133" cy="206" r="0.5"/><circle cx="1150" cy="206" r="0.7"/><circle cx="1144" cy="211" r="0.8"/><circle cx="1141" cy="203" r="0.4"/><circle cx="1142" cy="207" r="0.6"/><circle cx="1138" cy="195" r="0.5"/><circle cx="1141" cy="205" r="1.1"/><circle cx="1143" cy="210" r="0.6"/><circle cx="1133" cy="204" r="0.4"/><circle cx="1140" cy="197" r="1.0"/><circle cx="1147" cy="211" r="0.8"/><circle cx="1132" cy="197" r="0.6"/><circle cx="1141" cy="199" r="0.9"/><circle cx="1134" cy="196" r="1.0"/><circle cx="1127" cy="203" r="0.5"/><circle cx="1141" cy="215" r="0.5"/><circle cx="1145" cy="209" r="1.0"/><circle cx="1141" cy="211" r="0.8"/><circle cx="1127" cy="202" r="0.6"/><circle cx="1143" cy="195" r="1.0"/><circle cx="1131" cy="204" r="1.1"/><circle cx="1148" cy="198" r="0.7"/><circle cx="1129" cy="208" r="0.4"/><circle cx="1137" cy="203" r="0.7"/><circle cx="1148" cy="199" r="0.9"/><circle cx="1139" cy="212" r="0.7"/><circle cx="1138" cy="208" r="0.7"/><circle cx="1140" cy="200" r="0.5"/><circle cx="1141" cy="192" r="0.9"/><circle cx="1144" cy="198" r="0.7"/><circle cx="1140" cy="210" r="0.4"/><circle cx="1137" cy="201" r="1.0"/><circle cx="1132" cy="203" r="0.4"/><circle cx="1146" cy="207" r="0.6"/></g><g fill="#000" fill-opacity="0.75"><circle cx="1134" cy="204" r="1.0"/><circle cx="1149" cy="203" r="0.5"/><circle cx="1140" cy="216" r="0.9"/><circle cx="1139" cy="200" r="1.0"/><circle cx="1127" cy="203" r="0.7"/><circle cx="1137" cy="209" r="0.7"/><circle cx="1140" cy="215" r="0.7"/><circle cx="1148" cy="213" r="0.6"/><circle cx="1137" cy="194" r="1.0"/><circle cx="1133" cy="201" r="1.0"/><circle cx="1127" cy="210" r="0.5"/><circle cx="1132" cy="194" r="0.9"/><circle cx="1141" cy="200" r="0.7"/><circle cx="1137" cy="210" r="1.1"/><circle cx="1146" cy="209" r="0.7"/><circle cx="1133" cy="202" r="0.4"/><circle cx="1143" cy="209" r="0.8"/><circle cx="1132" cy="210" r="1.1"/><circle cx="1135" cy="207" r="0.5"/><circle cx="1134" cy="205" r="0.6"/><circle cx="1134" cy="203" r="1.0"/><circle cx="1146" cy="209" r="1.0"/><circle cx="1139" cy="197" r="0.8"/><circle cx="1144" cy="204" r="0.8"/><circle cx="1145" cy="203" r="0.8"/><circle cx="1136" cy="213" r="0.6"/><circle cx="1131" cy="214" r="0.8"/><circle cx="1138" cy="193" r="0.5"/><circle cx="1146" cy="201" r="0.7"/><circle cx="1148" cy="213" r="0.7"/><circle cx="1143" cy="213" r="0.7"/><circle cx="1144" cy="203" r="0.7"/><circle cx="1128" cy="200" r="0.9"/><circle cx="1126" cy="201" r="0.7"/><circle cx="1138" cy="199" r="0.8"/><circle cx="1145" cy="210" r="0.4"/><circle cx="1147" cy="209" r="1.1"/><circle cx="1147" cy="196" r="0.6"/><circle cx="1137" cy="198" r="0.5"/><circle cx="1135" cy="194" r="0.6"/><circle cx="1144" cy="208" r="0.5"/><circle cx="1147" cy="197" r="0.9"/><circle cx="1138" cy="205" r="0.8"/><circle cx="1146" cy="205" r="0.8"/><circle cx="1133" cy="194" r="0.7"/><circle cx="1149" cy="201" r="1.0"/><circle cx="1132" cy="196" r="0.8"/><circle cx="1136" cy="205" r="0.5"/><circle cx="1134" cy="196" r="0.7"/><circle cx="1145" cy="198" r="0.6"/><circle cx="1127" cy="202" r="0.7"/><circle cx="1131" cy="213" r="0.7"/><circle cx="1135" cy="210" r="0.6"/><circle cx="1132" cy="206" r="0.9"/><circle cx="1130" cy="206" r="0.9"/><circle cx="1132" cy="194" r="0.8"/><circle cx="1146" cy="207" r="0.9"/><circle cx="1140" cy="215" r="0.8"/><circle cx="1134" cy="199" r="0.9"/><circle cx="1144" cy="206" r="0.6"/><circle cx="1137" cy="204" r="0.8"/><circle cx="1138" cy="202" r="0.7"/><circle cx="1129" cy="202" r="0.6"/><circle cx="1134" cy="215" r="0.8"/><circle cx="1144" cy="208" r="0.8"/><circle cx="1142" cy="203" r="0.7"/><circle cx="1144" cy="209" r="0.9"/><circle cx="1146" cy="210" r="0.5"/><circle cx="1130" cy="208" r="0.4"/><circle cx="1145" cy="198" r="1.0"/><circle cx="1135" cy="200" r="0.6"/><circle cx="1130" cy="212" r="0.7"/><circle cx="1145" cy="206" r="1.0"/><circle cx="1141" cy="207" r="0.4"/><circle cx="1133" cy="210" r="0.6"/><circle cx="1137" cy="198" r="0.6"/><circle cx="1143" cy="212" r="1.0"/><circle cx="1148" cy="207" r="0.8"/><circle cx="1131" cy="206" r="0.5"/><circle cx="1149" cy="203" r="0.6"/><circle cx="1129" cy="200" r="0.5"/></g><g fill="#000" fill-opacity="1.0"><circle cx="1134" cy="210" r="0.6"/><circle cx="1133" cy="213" r="0.7"/><circle cx="1130" cy="202" r="0.4"/><circle cx="1138" cy="202" r="0.6"/><circle cx="1131" cy="197" r="0.8"/><circle cx="1145" cy="201" r="0.4"/><circle cx="1134" cy="194" r="1.1"/><circle cx="1130" cy="199" r="0.8"/><circle cx="1143" cy="202" r="0.7"/><circle cx="1135" cy="207" r="1.0"/><circle cx="1134" cy="207" r="0.5"/><circle cx="1142" cy="205" r="0.6"/><circle cx="1147" cy="205" r="0.7"/><circle cx="1133" cy="204" r="0.8"/><circle cx="1147" cy="206" r="0.4"/><circle cx="1135" cy="198" r="0.5"/><circle cx="1143" cy="214" r="0.5"/><circle cx="1143" cy="200" r="0.6"/><circle cx="1136" cy="201" r="0.5"/><circle cx="1150" cy="208" r="0.9"/><circle cx="1139" cy="200" r="0.7"/><circle cx="1147" cy="202" r="0.7"/><circle cx="1147" cy="211" r="1.0"/><circle cx="1143" cy="205" r="0.8"/><circle cx="1138" cy="217" r="0.9"/><circle cx="1136" cy="197" r="1.1"/><circle cx="1149" cy="209" r="1.0"/><circle cx="1138" cy="195" r="0.8"/><circle cx="1134" cy="198" r="1.1"/><circle cx="1141" cy="200" r="0.7"/><circle cx="1140" cy="207" r="0.8"/><circle cx="1147" cy="211" r="0.6"/><circle cx="1141" cy="212" r="0.6"/><circle cx="1145" cy="196" r="0.9"/><circle cx="1132" cy="210" r="1.1"/><circle cx="1143" cy="202" r="1.1"/><circle cx="1142" cy="195" r="0.7"/><circle cx="1142" cy="214" r="0.7"/><circle cx="1137" cy="207" r="0.9"/><circle cx="1141" cy="206" r="0.7"/><circle cx="1137" cy="209" r="0.6"/><circle cx="1129" cy="204" r="1.0"/><circle cx="1129" cy="210" r="0.7"/><circle cx="1128" cy="200" r="1.1"/><circle cx="1143" cy="211" r="1.0"/><circle cx="1132" cy="201" r="0.4"/><circle cx="1128" cy="208" r="1.1"/><circle cx="1134" cy="211" r="0.5"/><circle cx="1144" cy="204" r="1.0"/><circle cx="1136" cy="216" r="1.1"/><circle cx="1146" cy="196" r="0.4"/><circle cx="1137" cy="204" r="0.6"/><circle cx="1130" cy="204" r="0.5"/><circle cx="1146" cy="208" r="0.4"/><circle cx="1142" cy="197" r="0.7"/><circle cx="1147" cy="200" r="0.4"/><circle cx="1139" cy="199" r="0.8"/><circle cx="1137" cy="215" r="0.7"/><circle cx="1147" cy="209" r="0.6"/><circle cx="1139" cy="199" r="0.7"/></g><rect x="1150" y="216" width="5" height="6" fill="#ff7070" opacity="0.8"/><path d="M1148 219 L1154 219 M1151 216 L1151 222" stroke="#000" stroke-width="1.3"/><circle cx="1172" cy="205" r="14" fill="#222"/><g fill="#fff" fill-opacity="1.0"><circle cx="1162" cy="198" r="1.3"/><circle cx="1168" cy="213" r="2.1"/><circle cx="1175" cy="212" r="1.7"/><circle cx="1170" cy="200" r="1.7"/><circle cx="1177" cy="207" r="1.2"/><circle cx="1161" cy="212" r="1.1"/><circle cx="1169" cy="213" r="2.0"/><circle cx="1168" cy="216" r="1.9"/><circle cx="1168" cy="197" r="0.9"/><circle cx="1164" cy="207" r="1.7"/><circle cx="1170" cy="211" r="1.4"/><circle cx="1167" cy="203" r="2.1"/><circle cx="1167" cy="215" r="1.9"/><circle cx="1167" cy="201" r="1.3"/><circle cx="1174" cy="210" r="0.9"/><circle cx="1181" cy="214" r="1.4"/><circle cx="1179" cy="201" r="1.7"/><circle cx="1185" cy="208" r="1.3"/><circle cx="1184" cy="208" r="1.4"/><circle cx="1171" cy="213" r="0.9"/><circle cx="1165" cy="208" r="1.1"/><circle cx="1184" cy="201" r="1.8"/><circle cx="1168" cy="194" r="0.8"/><circle cx="1167" cy="197" r="1.6"/><circle cx="1164" cy="197" r="2.0"/><circle cx="1168" cy="206" r="1.0"/><circle cx="1169" cy="212" r="1.0"/><circle cx="1167" cy="198" r="1.9"/><circle cx="1180" cy="197" r="1.3"/><circle cx="1175" cy="217" r="1.1"/><circle cx="1175" cy="197" r="1.5"/><circle cx="1168" cy="193" r="1.9"/><circle cx="1182" cy="197" r="0.9"/><circle cx="1176" cy="194" r="1.5"/><circle cx="1176" cy="205" r="1.5"/><circle cx="1167" cy="202" r="1.8"/><circle cx="1172" cy="199" r="1.4"/><circle cx="1174" cy="193" r="1.1"/><circle cx="1181" cy="202" r="1.2"/><circle cx="1174" cy="216" r="1.3"/><circle cx="1171" cy="201" r="1.6"/><circle cx="1175" cy="203" r="1.5"/><circle cx="1180" cy="200" r="1.3"/><circle cx="1165" cy="209" r="1.3"/><circle cx="1181" cy="205" r="1.7"/><circle cx="1164" cy="197" r="1.3"/><circle cx="1180" cy="210" r="1.2"/><circle cx="1179" cy="211" r="2.1"/><circle cx="1167" cy="213" r="1.9"/><circle cx="1170" cy="207" r="1.7"/><circle cx="1172" cy="212" r="1.0"/><circle cx="1165" cy="211" r="1.5"/><circle cx="1179" cy="212" r="1.8"/><circle cx="1180" cy="200" r="1.1"/><circle cx="1177" cy="197" r="1.4"/><circle cx="1169" cy="207" r="1.0"/><circle cx="1181" cy="201" r="1.4"/><circle cx="1169" cy="212" r="1.6"/><circle cx="1184" cy="201" r="1.7"/><circle cx="1175" cy="215" r="2.2"/><circle cx="1169" cy="206" r="1.1"/><circle cx="1174" cy="204" r="2.1"/><circle cx="1162" cy="206" r="0.8"/><circle cx="1172" cy="197" r="0.9"/><circle cx="1166" cy="198" r="1.7"/><circle cx="1160" cy="205" r="1.0"/><circle cx="1170" cy="196" r="1.0"/><circle cx="1171" cy="194" r="2.1"/><circle cx="1162" cy="197" r="1.4"/><circle cx="1171" cy="208" r="2.1"/><circle cx="1172" cy="210" r="1.2"/><circle cx="1169" cy="213" r="1.5"/><circle cx="1182" cy="204" r="1.6"/><circle cx="1166" cy="215" r="1.4"/><circle cx="1178" cy="200" r="1.7"/><circle cx="1164" cy="198" r="2.1"/><circle cx="1171" cy="216" r="1.1"/><circle cx="1169" cy="217" r="1.1"/><circle cx="1166" cy="208" r="1.2"/><circle cx="1177" cy="211" r="1.1"/><circle cx="1185" cy="206" r="2.2"/><circle cx="1162" cy="212" r="1.3"/><circle cx="1166" cy="205" r="1.4"/><circle cx="1177" cy="211" r="1.3"/><circle cx="1181" cy="202" r="0.8"/><circle cx="1183" cy="201" r="1.8"/><circle cx="1161" cy="206" r="1.1"/><circle cx="1163" cy="213" r="2.0"/><circle cx="1167" cy="206" r="1.3"/><circle cx="1179" cy="210" r="1.0"/></g><rect x="1184" y="216" width="5" height="6" fill="#ff7070" opacity="0.8"/><path d="M1182 219 L1188 219 M1185 216 L1185 222" stroke="#000" stroke-width="1.3"/><circle cx="1206" cy="205" r="14" fill="url(#gD)"/><g fill="#fff" fill-opacity="1.0"><circle cx="1210" cy="198" r="1.2"/><circle cx="1213" cy="208" r="1.2"/><circle cx="1200" cy="195" r="0.9"/><circle cx="1199" cy="200" r="1.1"/><circle cx="1196" cy="206" r="1.5"/><circle cx="1216" cy="200" r="1.2"/><circle cx="1198" cy="198" r="0.5"/><circle cx="1196" cy="207" r="1.3"/><circle cx="1206" cy="211" r="1.3"/><circle cx="1203" cy="213" r="1.3"/></g><g fill="#fff" fill-opacity="0.5"><circle cx="1203" cy="200" r="0.6"/><circle cx="1217" cy="209" r="0.8"/><circle cx="1205" cy="197" r="0.7"/></g><g fill="#fff" fill-opacity="0.75"><circle cx="1213" cy="211" r="1.4"/><circle cx="1202" cy="198" r="1.2"/><circle cx="1215" cy="212" r="1.3"/><circle cx="1198" cy="203" r="0.6"/><circle cx="1207" cy="198" r="0.7"/><circle cx="1199" cy="202" r="0.7"/><circle cx="1202" cy="202" r="1.0"/><circle cx="1214" cy="209" r="0.9"/><circle cx="1208" cy="217" r="1.2"/><circle cx="1202" cy="208" r="1.4"/><circle cx="1214" cy="205" r="0.8"/><circle cx="1208" cy="202" r="1.1"/><circle cx="1208" cy="217" r="0.7"/><circle cx="1209" cy="194" r="0.9"/><circle cx="1208" cy="216" r="1.2"/><circle cx="1201" cy="208" r="1.3"/><circle cx="1214" cy="201" r="0.7"/><circle cx="1216" cy="209" r="0.7"/><circle cx="1211" cy="208" r="0.9"/><circle cx="1205" cy="193" r="1.4"/><circle cx="1199" cy="208" r="0.6"/><circle cx="1200" cy="195" r="1.2"/><circle cx="1211" cy="199" r="0.7"/><circle cx="1201" cy="204" r="1.1"/><circle cx="1217" cy="203" r="0.7"/><circle cx="1208" cy="197" r="1.2"/><circle cx="1205" cy="204" r="0.9"/></g><rect x="1218" y="216" width="5" height="6" fill="#ff7070" opacity="0.8"/><path d="M1216 219 L1222 219 M1219 216 L1219 222" stroke="#000" stroke-width="1.3"/><ellipse cx="1240" cy="205" rx="14" ry="9" fill="#111"/><g fill="#fff" fill-opacity="1.0"><circle cx="1240" cy="209" r="1.1"/><circle cx="1237" cy="205" r="1.2"/><circle cx="1238" cy="198" r="1.5"/><circle cx="1242" cy="200" r="1.0"/><circle cx="1251" cy="209" r="1.1"/><circle cx="1245" cy="208" r="1.3"/><circle cx="1246" cy="201" r="0.6"/><circle cx="1243" cy="208" r="1.3"/><circle cx="1234" cy="204" r="1.3"/><circle cx="1243" cy="212" r="1.4"/><circle cx="1247" cy="207" r="1.5"/><circle cx="1242" cy="211" r="1.1"/><circle cx="1238" cy="210" r="0.9"/><circle cx="1252" cy="208" r="1.0"/><circle cx="1238" cy="211" r="1.3"/><circle cx="1244" cy="209" r="0.9"/><circle cx="1246" cy="212" r="1.0"/><circle cx="1245" cy="205" r="1.3"/><circle cx="1231" cy="203" r="1.3"/><circle cx="1239" cy="210" r="0.8"/><circle cx="1232" cy="209" r="0.9"/><circle cx="1238" cy="207" r="1.2"/><circle cx="1231" cy="202" r="1.0"/><circle cx="1236" cy="206" r="1.1"/><circle cx="1242" cy="213" r="0.7"/><circle cx="1251" cy="205" r="0.9"/><circle cx="1237" cy="211" r="1.6"/><circle cx="1251" cy="208" r="1.0"/><circle cx="1236" cy="202" r="0.7"/><circle cx="1245" cy="209" r="1.5"/><circle cx="1243" cy="211" r="0.9"/><circle cx="1248" cy="203" r="1.2"/><circle cx="1239" cy="204" r="0.8"/><circle cx="1235" cy="204" r="1.2"/><circle cx="1243" cy="198" r="1.0"/><circle cx="1246" cy="202" r="0.8"/><circle cx="1241" cy="206" r="1.5"/><circle cx="1230" cy="210" r="0.9"/><circle cx="1241" cy="211" r="0.8"/><circle cx="1230" cy="208" r="0.8"/><circle cx="1247" cy="208" r="0.7"/><circle cx="1246" cy="200" r="1.5"/><circle cx="1247" cy="201" r="0.9"/><circle cx="1231" cy="206" r="1.3"/><circle cx="1245" cy="211" r="1.5"/><circle cx="1243" cy="207" r="1.0"/><circle cx="1246" cy="203" r="1.2"/><circle cx="1249" cy="210" r="0.8"/><circle cx="1246" cy="212" r="1.3"/><circle cx="1237" cy="211" r="1.6"/><circle cx="1241" cy="211" r="1.6"/><circle cx="1236" cy="208" r="1.4"/><circle cx="1243" cy="201" r="1.0"/><circle cx="1239" cy="199" r="1.5"/><circle cx="1240" cy="204" r="1.2"/><circle cx="1244" cy="210" r="1.3"/><circle cx="1245" cy="205" r="1.4"/><circle cx="1245" cy="203" r="1.6"/><circle cx="1249" cy="200" r="1.3"/><circle cx="1245" cy="198" r="1.5"/></g><path d="M1250 219 L1256 219 M1253 216 L1253 222" stroke="#000" stroke-width="1.3"/><g fill="#000" fill-opacity="0.75"><circle cx="1274" cy="203" r="0.8"/><circle cx="1281" cy="203" r="0.6"/><circle cx="1264" cy="209" r="0.9"/><circle cx="1279" cy="204" r="0.5"/><circle cx="1279" cy="210" r="0.9"/><circle cx="1276" cy="206" r="0.8"/><circle cx="1266" cy="205" r="0.7"/><circle cx="1275" cy="206" r="0.7"/><circle cx="1276" cy="208" r="0.5"/><circle cx="1279" cy="200" r="0.8"/><circle cx="1280" cy="202" r="0.7"/><circle cx="1279" cy="211" r="0.8"/><circle cx="1271" cy="203" r="1.0"/><circle cx="1274" cy="201" r="1.0"/><circle cx="1272" cy="205" r="0.7"/><circle cx="1279" cy="203" r="0.9"/><circle cx="1280" cy="208" r="0.5"/><circle cx="1271" cy="199" r="0.5"/><circle cx="1273" cy="207" r="0.6"/><circle cx="1270" cy="199" r="0.5"/><circle cx="1273" cy="208" r="0.7"/><circle cx="1281" cy="211" r="0.5"/><circle cx="1266" cy="208" r="0.8"/><circle cx="1269" cy="207" r="0.6"/><circle cx="1280" cy="199" r="0.9"/><circle cx="1266" cy="208" r="0.4"/><circle cx="1270" cy="209" r="0.5"/><circle cx="1275" cy="201" r="0.9"/><circle cx="1277" cy="208" r="0.4"/><circle cx="1282" cy="208" r="0.6"/><circle cx="1267" cy="208" r="0.9"/><circle cx="1279" cy="205" r="0.5"/><circle cx="1270" cy="207" r="0.4"/><circle cx="1280" cy="203" r="0.9"/><circle cx="1266" cy="200" r="0.5"/><circle cx="1267" cy="212" r="0.5"/><circle cx="1262" cy="208" r="0.5"/><circle cx="1272" cy="199" r="0.5"/><circle cx="1286" cy="203" r="0.5"/><circle cx="1277" cy="200" r="0.8"/><circle cx="1285" cy="208" r="0.9"/><circle cx="1278" cy="202" r="0.8"/><circle cx="1266" cy="203" r="0.7"/><circle cx="1272" cy="210" r="0.9"/><circle cx="1267" cy="204" r="0.7"/><circle cx="1282" cy="203" r="0.7"/><circle cx="1271" cy="197" r="0.6"/><circle cx="1274" cy="197" r="0.8"/><circle cx="1275" cy="210" r="0.7"/><circle cx="1280" cy="206" r="0.9"/><circle cx="1269" cy="207" r="0.5"/><circle cx="1270" cy="202" r="0.5"/><circle cx="1280" cy="199" r="0.5"/><circle cx="1280" cy="211" r="0.8"/><circle cx="1281" cy="201" r="0.6"/><circle cx="1276" cy="198" r="0.6"/><circle cx="1271" cy="211" r="0.6"/><circle cx="1274" cy="201" r="0.8"/><circle cx="1273" cy="198" r="0.8"/><circle cx="1273" cy="198" r="1.0"/><circle cx="1273" cy="198" r="1.0"/><circle cx="1272" cy="205" r="0.5"/><circle cx="1270" cy="208" r="0.4"/><circle cx="1280" cy="209" r="0.5"/><circle cx="1276" cy="197" r="0.4"/><circle cx="1274" cy="211" r="0.8"/><circle cx="1272" cy="203" r="0.7"/><circle cx="1283" cy="208" r="0.6"/><circle cx="1264" cy="207" r="0.6"/><circle cx="1267" cy="204" r="0.5"/><circle cx="1285" cy="204" r="0.8"/><circle cx="1267" cy="202" r="0.6"/><circle cx="1266" cy="207" r="0.9"/><circle cx="1264" cy="207" r="0.5"/><circle cx="1274" cy="204" r="0.9"/></g><g fill="#000" fill-opacity="0.5"><circle cx="1280" cy="206" r="1.0"/><circle cx="1286" cy="204" r="1.0"/><circle cx="1278" cy="206" r="0.8"/><circle cx="1274" cy="208" r="0.8"/><circle cx="1278" cy="201" r="0.6"/><circle cx="1263" cy="205" r="0.7"/><circle cx="1275" cy="204" r="0.4"/><circle cx="1286" cy="205" r="0.8"/><circle cx="1276" cy="208" r="1.0"/><circle cx="1269" cy="210" r="0.8"/><circle cx="1270" cy="199" r="0.4"/><circle cx="1277" cy="204" r="1.0"/><circle cx="1275" cy="198" r="0.6"/><circle cx="1276" cy="211" r="0.5"/><circle cx="1279" cy="201" r="0.8"/><circle cx="1282" cy="202" r="1.0"/><circle cx="1279" cy="211" r="0.5"/><circle cx="1283" cy="205" r="0.7"/><circle cx="1269" cy="200" r="0.7"/><circle cx="1269" cy="212" r="0.9"/><circle cx="1274" cy="199" r="0.5"/><circle cx="1269" cy="204" r="0.9"/><circle cx="1270" cy="204" r="0.9"/><circle cx="1271" cy="209" r="0.5"/><circle cx="1274" cy="209" r="0.8"/><circle cx="1272" cy="202" r="0.9"/><circle cx="1276" cy="207" r="0.5"/><circle cx="1272" cy="207" r="0.4"/><circle cx="1274" cy="207" r="0.6"/><circle cx="1270" cy="204" r="0.4"/><circle cx="1267" cy="205" r="0.5"/><circle cx="1275" cy="211" r="0.8"/><circle cx="1281" cy="205" r="0.8"/><circle cx="1273" cy="208" r="0.4"/><circle cx="1281" cy="203" r="0.5"/><circle cx="1285" cy="201" r="0.8"/><circle cx="1275" cy="209" r="0.8"/><circle cx="1275" cy="213" r="0.9"/><circle cx="1268" cy="206" r="0.9"/><circle cx="1267" cy="209" r="0.9"/><circle cx="1280" cy="210" r="0.6"/><circle cx="1282" cy="209" r="0.4"/><circle cx="1279" cy="200" r="0.7"/><circle cx="1264" cy="202" r="0.9"/><circle cx="1271" cy="211" r="0.5"/><circle cx="1273" cy="198" r="1.0"/><circle cx="1279" cy="209" r="0.5"/><circle cx="1276" cy="212" r="0.4"/><circle cx="1285" cy="201" r="0.4"/><circle cx="1278" cy="198" r="0.9"/><circle cx="1266" cy="209" r="0.8"/><circle cx="1272" cy="202" r="0.8"/><circle cx="1264" cy="200" r="0.5"/><circle cx="1263" cy="207" r="0.4"/><circle cx="1275" cy="198" r="0.9"/><circle cx="1276" cy="206" r="0.4"/><circle cx="1271" cy="206" r="0.6"/><circle cx="1274" cy="209" r="1.0"/><circle cx="1281" cy="202" r="0.9"/><circle cx="1265" cy="207" r="0.9"/><circle cx="1284" cy="206" r="0.9"/><circle cx="1263" cy="202" r="0.5"/><circle cx="1278" cy="209" r="0.9"/><circle cx="1274" cy="208" r="0.6"/><circle cx="1265" cy="205" r="0.6"/><circle cx="1277" cy="203" r="0.6"/><circle cx="1280" cy="211" r="0.8"/><circle cx="1284" cy="202" r="0.5"/><circle cx="1277" cy="198" r="0.8"/><circle cx="1272" cy="206" r="0.6"/><circle cx="1272" cy="200" r="0.7"/><circle cx="1273" cy="206" r="0.6"/><circle cx="1282" cy="204" r="0.9"/><circle cx="1271" cy="210" r="0.8"/><circle cx="1277" cy="210" r="0.8"/><circle cx="1263" cy="204" r="0.8"/></g><g fill="#000" fill-opacity="1.0"><circle cx="1280" cy="206" r="0.9"/><circle cx="1284" cy="205" r="0.8"/><circle cx="1282" cy="201" r="0.5"/><circle cx="1272" cy="200" r="0.7"/></g><path d="M1284 219 L1290 219 M1287 216 L1287 222" stroke="#000" stroke-width="1.3"/><g fill="#000" fill-opacity="0.75"><circle cx="1308" cy="208" r="0.5"/><circle cx="1307" cy="206" r="0.7"/><circle cx="1306" cy="207" r="0.4"/><circle cx="1307" cy="207" r="0.5"/><circle cx="1311" cy="205" r="0.6"/><circle cx="1307" cy="210" r="0.7"/><circle cx="1310" cy="202" r="0.8"/><circle cx="1310" cy="199" r="0.4"/></g><g fill="#000" fill-opacity="0.5"><circle cx="1310" cy="209" r="0.8"/><circle cx="1309" cy="207" r="0.6"/><circle cx="1306" cy="199" r="0.4"/><circle cx="1311" cy="205" r="0.6"/><circle cx="1308" cy="196" r="0.4"/><circle cx="1307" cy="198" r="0.8"/><circle cx="1308" cy="200" r="0.6"/><circle cx="1310" cy="208" r="0.6"/><circle cx="1308" cy="207" r="0.7"/><circle cx="1309" cy="202" r="0.4"/><circle cx="1308" cy="213" r="0.6"/><circle cx="1309" cy="206" r="0.5"/><circle cx="1308" cy="212" r="0.5"/><circle cx="1306" cy="200" r="0.6"/><circle cx="1309" cy="214" r="0.8"/><circle cx="1310" cy="202" r="0.5"/><circle cx="1307" cy="210" r="0.5"/></g><g fill="#000" fill-opacity="0.25"><circle cx="1307" cy="214" r="0.6"/><circle cx="1307" cy="216" r="0.5"/><circle cx="1306" cy="200" r="0.5"/><circle cx="1310" cy="205" r="0.6"/><circle cx="1310" cy="202" r="0.8"/><circle cx="1306" cy="202" r="0.4"/></g><rect x="1320" y="216" width="5" height="6" fill="#ff7070" opacity="0.8"/><path d="M1318 219 L1324 219 M1321 216 L1321 222" stroke="#000" stroke-width="1.3"/><path d="M1331.7 200.2 l0.9 2.5" stroke="#777" stroke-width="1.6"/><path d="M1335.9 196.7 l-2.9 -0.3" stroke="#777" stroke-width="1.6"/><path d="M1332.8 212.0 l2.0 3.1" stroke="#777" stroke-width="1.6"/><path d="M1351.2 202.1 l-0.4 -3.0" stroke="#777" stroke-width="1.6"/><path d="M1341.6 205.7 l1.3 3.8" stroke="#777" stroke-width="1.6"/><path d="M1337.1 209.1 l-2.2 -1.9" stroke="#777" stroke-width="1.6"/><path d="M1336.5 194.8 l0.5 3.0" stroke="#777" stroke-width="1.6"/><path d="M1344.5 209.2 l-2.4 -3.4" stroke="#777" stroke-width="1.6"/><path d="M1351.4 194.3 l-3.9 -2.3" stroke="#777" stroke-width="1.6"/><path d="M1348.0 197.1 l-3.2 -2.3" stroke="#777" stroke-width="1.6"/><path d="M1343.0 204.6 l2.9 2.1" stroke="#777" stroke-width="1.6"/><path d="M1336.9 203.0 l-2.8 0.0" stroke="#777" stroke-width="1.6"/><path d="M1352 219 L1358 219 M1355 216 L1355 222" stroke="#000" stroke-width="1.3"/><path d="M1362 208 C1367 198 1373 202 1379 200 C1385 198 1389 200 1390 210 M1365 196 L1369 214 M1371 194 L1365 204 M1379 212 L1383 202" fill="none" stroke="#888" stroke-width="1"/><rect x="1388" y="216" width="5" height="6" fill="#ff7070" opacity="0.8"/><path d="M1386 219 L1392 219 M1389 216 L1389 222" stroke="#000" stroke-width="1.3"/><g fill="#000" fill-opacity="0.75"><circle cx="1066" cy="252" r="0.6"/><circle cx="1058" cy="237" r="0.4"/><circle cx="1067" cy="242" r="0.5"/><circle cx="1062" cy="242" r="0.6"/><circle cx="1073" cy="246" r="0.3"/><circle cx="1073" cy="252" r="0.5"/><circle cx="1062" cy="228" r="0.6"/><circle cx="1064" cy="246" r="0.5"/><circle cx="1082" cy="242" r="0.3"/><circle cx="1074" cy="252" r="0.7"/><circle cx="1082" cy="238" r="0.7"/><circle cx="1063" cy="244" r="0.7"/><circle cx="1079" cy="233" r="0.7"/><circle cx="1073" cy="226" r="0.4"/><circle cx="1069" cy="235" r="0.6"/><circle cx="1064" cy="234" r="0.5"/><circle cx="1072" cy="243" r="0.5"/><circle cx="1081" cy="237" r="0.4"/><circle cx="1064" cy="251" r="0.6"/><circle cx="1072" cy="252" r="0.5"/><circle cx="1073" cy="233" r="0.4"/><circle cx="1069" cy="234" r="0.3"/><circle cx="1080" cy="240" r="0.6"/><circle cx="1081" cy="242" r="0.5"/><circle cx="1075" cy="252" r="0.5"/><circle cx="1067" cy="245" r="0.3"/><circle cx="1068" cy="226" r="0.5"/><circle cx="1076" cy="236" r="0.3"/><circle cx="1066" cy="245" r="0.4"/><circle cx="1067" cy="251" r="0.6"/><circle cx="1084" cy="235" r="0.5"/><circle cx="1072" cy="231" r="0.4"/><circle cx="1079" cy="230" r="0.5"/><circle cx="1061" cy="245" r="0.7"/><circle cx="1070" cy="248" r="0.5"/><circle cx="1064" cy="228" r="0.4"/><circle cx="1072" cy="249" r="0.7"/><circle cx="1065" cy="232" r="0.4"/><circle cx="1056" cy="239" r="0.6"/><circle cx="1079" cy="240" r="0.6"/><circle cx="1077" cy="240" r="0.3"/><circle cx="1063" cy="240" r="0.5"/><circle cx="1066" cy="251" r="0.4"/><circle cx="1079" cy="229" r="0.7"/><circle cx="1074" cy="238" r="0.3"/><circle cx="1073" cy="239" r="0.6"/><circle cx="1071" cy="235" r="0.3"/><circle cx="1068" cy="237" r="0.6"/><circle cx="1083" cy="238" r="0.5"/><circle cx="1071" cy="230" r="0.5"/><circle cx="1062" cy="240" r="0.4"/><circle cx="1073" cy="235" r="0.6"/><circle cx="1079" cy="242" r="0.3"/><circle cx="1065" cy="232" r="0.4"/><circle cx="1068" cy="238" r="0.7"/><circle cx="1059" cy="243" r="0.4"/><circle cx="1056" cy="244" r="0.6"/><circle cx="1075" cy="249" r="0.4"/><circle cx="1073" cy="235" r="0.3"/><circle cx="1073" cy="248" r="0.5"/><circle cx="1062" cy="239" r="0.5"/><circle cx="1068" cy="246" r="0.6"/><circle cx="1057" cy="238" r="0.5"/><circle cx="1062" cy="246" r="0.4"/><circle cx="1077" cy="228" r="0.4"/><circle cx="1081" cy="235" r="0.4"/><circle cx="1082" cy="243" r="0.5"/><circle cx="1071" cy="247" r="0.5"/><circle cx="1057" cy="237" r="0.7"/><circle cx="1063" cy="241" r="0.7"/><circle cx="1082" cy="235" r="0.5"/><circle cx="1077" cy="235" r="0.5"/><circle cx="1068" cy="248" r="0.4"/><circle cx="1082" cy="242" r="0.4"/><circle cx="1066" cy="237" r="0.5"/><circle cx="1061" cy="240" r="0.5"/><circle cx="1074" cy="239" r="0.6"/><circle cx="1079" cy="234" r="0.6"/><circle cx="1059" cy="236" r="0.7"/><circle cx="1063" cy="229" r="0.6"/><circle cx="1072" cy="231" r="0.4"/><circle cx="1063" cy="236" r="0.5"/><circle cx="1058" cy="245" r="0.6"/><circle cx="1070" cy="248" r="0.5"/><circle cx="1078" cy="232" r="0.4"/><circle cx="1058" cy="245" r="0.7"/><circle cx="1063" cy="228" r="0.6"/><circle cx="1057" cy="245" r="0.6"/><circle cx="1072" cy="239" r="0.7"/><circle cx="1070" cy="236" r="0.4"/><circle cx="1058" cy="231" r="0.7"/><circle cx="1062" cy="235" r="0.5"/><circle cx="1059" cy="242" r="0.5"/><circle cx="1072" cy="236" r="0.3"/><circle cx="1075" cy="234" r="0.6"/><circle cx="1070" cy="246" r="0.5"/><circle cx="1069" cy="251" r="0.7"/><circle cx="1071" cy="248" r="0.3"/><circle cx="1063" cy="248" r="0.6"/></g><g fill="#000" fill-opacity="0.5"><circle cx="1078" cy="230" r="0.4"/><circle cx="1064" cy="249" r="0.6"/><circle cx="1070" cy="226" r="0.4"/><circle cx="1074" cy="245" r="0.5"/><circle cx="1058" cy="246" r="0.7"/><circle cx="1061" cy="247" r="0.4"/><circle cx="1062" cy="234" r="0.3"/><circle cx="1055" cy="238" r="0.4"/><circle cx="1071" cy="230" r="0.4"/><circle cx="1070" cy="235" r="0.3"/><circle cx="1075" cy="229" r="0.5"/><circle cx="1064" cy="226" r="0.5"/><circle cx="1074" cy="244" r="0.4"/><circle cx="1075" cy="247" r="0.4"/><circle cx="1061" cy="241" r="0.3"/><circle cx="1068" cy="252" r="0.3"/><circle cx="1065" cy="241" r="0.6"/><circle cx="1059" cy="241" r="0.4"/><circle cx="1068" cy="237" r="0.5"/><circle cx="1059" cy="240" r="0.5"/><circle cx="1078" cy="236" r="0.5"/><circle cx="1079" cy="249" r="0.5"/><circle cx="1074" cy="234" r="0.3"/><circle cx="1075" cy="246" r="0.3"/><circle cx="1059" cy="246" r="0.5"/><circle cx="1075" cy="249" r="0.4"/><circle cx="1070" cy="244" r="0.3"/><circle cx="1073" cy="228" r="0.3"/><circle cx="1069" cy="248" r="0.5"/><circle cx="1061" cy="248" r="0.6"/><circle cx="1077" cy="240" r="0.5"/><circle cx="1074" cy="250" r="0.5"/><circle cx="1066" cy="249" r="0.5"/><circle cx="1079" cy="233" r="0.6"/><circle cx="1078" cy="240" r="0.4"/><circle cx="1077" cy="232" r="0.7"/><circle cx="1082" cy="246" r="0.5"/><circle cx="1073" cy="228" r="0.6"/><circle cx="1066" cy="236" r="0.5"/><circle cx="1066" cy="242" r="0.5"/><circle cx="1057" cy="237" r="0.5"/><circle cx="1067" cy="227" r="0.6"/><circle cx="1069" cy="251" r="0.4"/><circle cx="1075" cy="250" r="0.4"/><circle cx="1083" cy="242" r="0.5"/><circle cx="1072" cy="252" r="0.4"/><circle cx="1064" cy="249" r="0.7"/><circle cx="1076" cy="237" r="0.5"/><circle cx="1068" cy="250" r="0.7"/><circle cx="1061" cy="237" r="0.3"/><circle cx="1079" cy="241" r="0.7"/><circle cx="1077" cy="248" r="0.3"/><circle cx="1065" cy="243" r="0.4"/><circle cx="1073" cy="238" r="0.3"/><circle cx="1064" cy="243" r="0.5"/><circle cx="1076" cy="242" r="0.4"/><circle cx="1062" cy="246" r="0.4"/><circle cx="1067" cy="248" r="0.3"/><circle cx="1061" cy="237" r="0.3"/><circle cx="1063" cy="242" r="0.4"/><circle cx="1057" cy="245" r="0.4"/><circle cx="1070" cy="232" r="0.4"/><circle cx="1059" cy="234" r="0.6"/><circle cx="1070" cy="241" r="0.4"/><circle cx="1077" cy="236" r="0.7"/><circle cx="1063" cy="248" r="0.4"/><circle cx="1068" cy="241" r="0.6"/><circle cx="1059" cy="232" r="0.4"/><circle cx="1068" cy="244" r="0.7"/><circle cx="1073" cy="242" r="0.7"/><circle cx="1072" cy="249" r="0.5"/><circle cx="1058" cy="233" r="0.3"/><circle cx="1083" cy="244" r="0.4"/><circle cx="1084" cy="240" r="0.6"/><circle cx="1077" cy="234" r="0.5"/><circle cx="1081" cy="246" r="0.3"/><circle cx="1070" cy="243" r="0.4"/><circle cx="1067" cy="235" r="0.5"/><circle cx="1078" cy="233" r="0.7"/><circle cx="1075" cy="228" r="0.5"/><circle cx="1068" cy="236" r="0.7"/><circle cx="1077" cy="235" r="0.6"/><circle cx="1067" cy="241" r="0.4"/><circle cx="1074" cy="252" r="0.5"/><circle cx="1072" cy="243" r="0.5"/><circle cx="1062" cy="247" r="0.7"/><circle cx="1061" cy="246" r="0.7"/><circle cx="1058" cy="236" r="0.5"/><circle cx="1064" cy="231" r="0.6"/><circle cx="1059" cy="246" r="0.4"/><circle cx="1061" cy="242" r="0.4"/><circle cx="1070" cy="226" r="0.4"/><circle cx="1063" cy="243" r="0.5"/><circle cx="1065" cy="248" r="0.7"/><circle cx="1060" cy="249" r="0.5"/><circle cx="1072" cy="232" r="0.6"/><circle cx="1064" cy="234" r="0.4"/><circle cx="1078" cy="247" r="0.5"/><circle cx="1076" cy="236" r="0.6"/><circle cx="1075" cy="240" r="0.5"/><circle cx="1075" cy="229" r="0.5"/><circle cx="1073" cy="245" r="0.5"/><circle cx="1061" cy="244" r="0.5"/><circle cx="1057" cy="238" r="0.4"/><circle cx="1064" cy="242" r="0.5"/><circle cx="1071" cy="243" r="0.3"/><circle cx="1077" cy="233" r="0.4"/><circle cx="1079" cy="241" r="0.6"/></g><g fill="#000" fill-opacity="1.0"><circle cx="1081" cy="246" r="0.4"/><circle cx="1075" cy="238" r="0.4"/><circle cx="1068" cy="244" r="0.6"/><circle cx="1076" cy="238" r="0.4"/><circle cx="1063" cy="227" r="0.6"/><circle cx="1076" cy="250" r="0.6"/><circle cx="1066" cy="246" r="0.4"/><circle cx="1073" cy="237" r="0.5"/><circle cx="1076" cy="238" r="0.4"/><circle cx="1063" cy="235" r="0.4"/><circle cx="1059" cy="236" r="0.7"/><circle cx="1069" cy="245" r="0.4"/><circle cx="1069" cy="243" r="0.5"/><circle cx="1069" cy="246" r="0.7"/><circle cx="1078" cy="242" r="0.6"/><circle cx="1065" cy="245" r="0.5"/><circle cx="1064" cy="231" r="0.4"/><circle cx="1075" cy="231" r="0.6"/><circle cx="1065" cy="231" r="0.7"/><circle cx="1063" cy="245" r="0.3"/><circle cx="1059" cy="240" r="0.6"/><circle cx="1076" cy="246" r="0.3"/><circle cx="1073" cy="231" r="0.6"/><circle cx="1076" cy="239" r="0.3"/><circle cx="1073" cy="246" r="0.4"/><circle cx="1067" cy="245" r="0.6"/><circle cx="1080" cy="231" r="0.3"/><circle cx="1060" cy="246" r="0.4"/><circle cx="1080" cy="237" r="0.6"/><circle cx="1067" cy="243" r="0.5"/><circle cx="1074" cy="229" r="0.3"/><circle cx="1074" cy="247" r="0.7"/><circle cx="1076" cy="228" r="0.7"/><circle cx="1059" cy="230" r="0.6"/><circle cx="1064" cy="235" r="0.5"/><circle cx="1065" cy="230" r="0.4"/><circle cx="1068" cy="250" r="0.4"/><circle cx="1080" cy="246" r="0.3"/><circle cx="1072" cy="245" r="0.5"/><circle cx="1064" cy="228" r="0.6"/><circle cx="1068" cy="237" r="0.4"/><circle cx="1058" cy="235" r="0.3"/><circle cx="1064" cy="251" r="0.5"/><circle cx="1063" cy="231" r="0.7"/><circle cx="1062" cy="233" r="0.5"/><circle cx="1062" cy="233" r="0.5"/><circle cx="1073" cy="226" r="0.6"/><circle cx="1061" cy="229" r="0.5"/><circle cx="1073" cy="229" r="0.6"/><circle cx="1077" cy="230" r="0.5"/><circle cx="1056" cy="237" r="0.4"/><circle cx="1064" cy="237" r="0.4"/><circle cx="1072" cy="231" r="0.6"/></g><rect x="1082" y="250" width="5" height="6" fill="#ff7070" opacity="0.8"/><path d="M1080 253 L1086 253 M1083 250 L1083 256" stroke="#000" stroke-width="1.3"/><g fill="#000" fill-opacity="1.0"><circle cx="1110" cy="241" r="1.1"/><circle cx="1108" cy="238" r="1.1"/><circle cx="1096" cy="232" r="0.7"/><circle cx="1105" cy="247" r="1.3"/><circle cx="1108" cy="244" r="0.9"/><circle cx="1104" cy="238" r="1.1"/><circle cx="1109" cy="233" r="1.0"/><circle cx="1101" cy="242" r="1.0"/><circle cx="1100" cy="243" r="1.3"/><circle cx="1104" cy="248" r="1.3"/><circle cx="1101" cy="238" r="1.0"/><circle cx="1100" cy="239" r="0.6"/><circle cx="1110" cy="234" r="0.9"/><circle cx="1107" cy="240" r="0.6"/><circle cx="1107" cy="232" r="0.8"/><circle cx="1110" cy="235" r="0.8"/><circle cx="1104" cy="238" r="0.8"/><circle cx="1097" cy="236" r="0.6"/><circle cx="1098" cy="241" r="1.1"/><circle cx="1104" cy="230" r="0.7"/><circle cx="1104" cy="244" r="0.8"/><circle cx="1098" cy="236" r="0.7"/><circle cx="1107" cy="232" r="0.5"/><circle cx="1105" cy="232" r="0.4"/><circle cx="1110" cy="242" r="0.8"/><circle cx="1105" cy="240" r="1.2"/><circle cx="1106" cy="240" r="0.6"/><circle cx="1105" cy="235" r="1.3"/><circle cx="1110" cy="247" r="0.5"/><circle cx="1102" cy="237" r="0.8"/><circle cx="1100" cy="239" r="0.8"/><circle cx="1110" cy="244" r="1.2"/><circle cx="1106" cy="242" r="0.9"/><circle cx="1106" cy="247" r="0.9"/><circle cx="1106" cy="244" r="0.6"/><circle cx="1111" cy="237" r="0.7"/><circle cx="1111" cy="238" r="0.7"/><circle cx="1113" cy="235" r="0.6"/></g><g fill="#000" fill-opacity="0.75"><circle cx="1108" cy="235" r="0.5"/><circle cx="1101" cy="236" r="0.7"/><circle cx="1111" cy="244" r="0.9"/><circle cx="1104" cy="229" r="0.6"/><circle cx="1109" cy="248" r="1.2"/><circle cx="1111" cy="239" r="0.5"/><circle cx="1099" cy="232" r="0.6"/><circle cx="1099" cy="236" r="0.9"/><circle cx="1105" cy="238" r="0.5"/><circle cx="1097" cy="241" r="1.1"/><circle cx="1099" cy="243" r="0.8"/><circle cx="1108" cy="242" r="0.4"/><circle cx="1111" cy="238" r="0.8"/><circle cx="1098" cy="243" r="0.7"/><circle cx="1110" cy="248" r="1.1"/><circle cx="1102" cy="230" r="1.1"/><circle cx="1111" cy="241" r="1.2"/><circle cx="1108" cy="246" r="0.5"/><circle cx="1100" cy="241" r="0.8"/><circle cx="1103" cy="235" r="0.7"/><circle cx="1096" cy="239" r="1.2"/><circle cx="1099" cy="235" r="1.1"/><circle cx="1098" cy="246" r="1.1"/><circle cx="1099" cy="242" r="1.2"/><circle cx="1101" cy="238" r="0.8"/><circle cx="1108" cy="234" r="0.4"/><circle cx="1100" cy="236" r="0.8"/><circle cx="1110" cy="244" r="0.8"/><circle cx="1097" cy="234" r="0.7"/><circle cx="1101" cy="242" r="0.8"/><circle cx="1107" cy="231" r="1.3"/><circle cx="1101" cy="244" r="1.0"/><circle cx="1102" cy="234" r="0.5"/><circle cx="1110" cy="236" r="0.9"/><circle cx="1099" cy="234" r="1.1"/><circle cx="1100" cy="241" r="1.0"/><circle cx="1101" cy="235" r="0.7"/><circle cx="1106" cy="241" r="0.9"/><circle cx="1111" cy="242" r="0.4"/><circle cx="1106" cy="239" r="0.9"/><circle cx="1106" cy="241" r="0.5"/><circle cx="1100" cy="236" r="0.8"/><circle cx="1094" cy="243" r="1.2"/><circle cx="1099" cy="241" r="0.5"/><circle cx="1103" cy="238" r="1.0"/><circle cx="1105" cy="248" r="0.4"/><circle cx="1094" cy="239" r="1.1"/><circle cx="1113" cy="241" r="1.1"/><circle cx="1102" cy="234" r="1.2"/><circle cx="1107" cy="230" r="0.7"/><circle cx="1108" cy="246" r="0.4"/><circle cx="1103" cy="246" r="0.8"/><circle cx="1109" cy="231" r="0.5"/><circle cx="1107" cy="235" r="0.6"/><circle cx="1111" cy="247" r="0.7"/><circle cx="1096" cy="232" r="1.3"/><circle cx="1095" cy="238" r="1.2"/><circle cx="1096" cy="241" r="0.7"/><circle cx="1107" cy="236" r="1.0"/><circle cx="1097" cy="243" r="1.3"/><circle cx="1107" cy="240" r="0.7"/><circle cx="1105" cy="235" r="0.7"/></g><g fill="#000" fill-opacity="0.5"><circle cx="1110" cy="243" r="0.8"/><circle cx="1099" cy="248" r="0.4"/><circle cx="1107" cy="228" r="1.2"/><circle cx="1114" cy="237" r="1.0"/><circle cx="1101" cy="240" r="1.0"/><circle cx="1108" cy="239" r="1.1"/><circle cx="1110" cy="234" r="0.4"/><circle cx="1106" cy="236" r="0.9"/><circle cx="1102" cy="245" r="0.8"/><circle cx="1100" cy="245" r="0.8"/><circle cx="1108" cy="246" r="1.1"/><circle cx="1098" cy="241" r="0.7"/><circle cx="1103" cy="235" r="0.8"/><circle cx="1114" cy="237" r="0.7"/><circle cx="1107" cy="241" r="0.8"/><circle cx="1111" cy="244" r="0.4"/><circle cx="1100" cy="242" r="0.7"/><circle cx="1095" cy="244" r="0.8"/><circle cx="1096" cy="234" r="1.3"/><circle cx="1109" cy="246" r="1.0"/><circle cx="1098" cy="243" r="0.6"/><circle cx="1101" cy="234" r="1.0"/><circle cx="1105" cy="239" r="1.2"/><circle cx="1102" cy="241" r="0.7"/><circle cx="1100" cy="233" r="0.8"/><circle cx="1097" cy="238" r="0.4"/><circle cx="1108" cy="247" r="1.2"/><circle cx="1099" cy="246" r="0.5"/><circle cx="1102" cy="235" r="1.1"/><circle cx="1106" cy="241" r="0.5"/><circle cx="1096" cy="242" r="0.8"/><circle cx="1099" cy="236" r="0.4"/><circle cx="1100" cy="236" r="0.8"/><circle cx="1112" cy="245" r="0.6"/><circle cx="1108" cy="237" r="0.7"/><circle cx="1099" cy="244" r="1.0"/><circle cx="1100" cy="242" r="0.5"/><circle cx="1104" cy="241" r="1.2"/><circle cx="1114" cy="235" r="0.6"/><circle cx="1104" cy="235" r="0.8"/><circle cx="1113" cy="238" r="0.9"/><circle cx="1104" cy="235" r="0.5"/><circle cx="1114" cy="238" r="0.7"/><circle cx="1101" cy="246" r="1.1"/><circle cx="1108" cy="233" r="0.7"/><circle cx="1100" cy="245" r="0.9"/><circle cx="1098" cy="239" r="0.5"/><circle cx="1099" cy="236" r="0.5"/><circle cx="1109" cy="235" r="0.8"/><circle cx="1095" cy="233" r="1.1"/><circle cx="1096" cy="237" r="0.8"/><circle cx="1110" cy="240" r="1.2"/><circle cx="1102" cy="234" r="1.0"/><circle cx="1103" cy="243" r="0.9"/><circle cx="1100" cy="235" r="0.6"/><circle cx="1102" cy="234" r="0.6"/><circle cx="1109" cy="236" r="0.8"/><circle cx="1111" cy="232" r="0.5"/><circle cx="1104" cy="235" r="1.2"/><circle cx="1100" cy="245" r="1.2"/><circle cx="1094" cy="236" r="0.9"/><circle cx="1098" cy="231" r="0.6"/><circle cx="1095" cy="237" r="0.5"/><circle cx="1104" cy="241" r="1.1"/><circle cx="1102" cy="243" r="1.2"/><circle cx="1097" cy="235" r="0.8"/><circle cx="1107" cy="246" r="0.8"/><circle cx="1104" cy="240" r="1.0"/></g><rect x="1116" y="250" width="5" height="6" fill="#ff7070" opacity="0.8"/><path d="M1114 253 L1120 253 M1117 250 L1117 256" stroke="#000" stroke-width="1.3"/><path d="M1125 228.0 C1133 227 1143 229 1152 227.5" fill="none" stroke="#111" stroke-width="1.1"/><path d="M1125 232.0 C1133 231 1143 233 1152 231.5" fill="none" stroke="#111" stroke-width="1.1"/><path d="M1125 236.0 C1133 235 1143 237 1152 235.5" fill="none" stroke="#111" stroke-width="1.1"/><path d="M1125 240.0 C1133 239 1143 241 1152 239.5" fill="none" stroke="#111" stroke-width="1.1"/><path d="M1125 244.0 C1133 243 1143 245 1152 243.5" fill="none" stroke="#111" stroke-width="1.1"/><path d="M1125 248.0 C1133 247 1143 249 1152 247.5" fill="none" stroke="#111" stroke-width="1.1"/><path d="M1148 253 L1154 253 M1151 250 L1151 256" stroke="#000" stroke-width="1.3"/><g fill="#000" fill-opacity="1.0"><circle cx="1181" cy="239" r="1.3"/><circle cx="1183" cy="242" r="0.7"/><circle cx="1183" cy="234" r="1.4"/><circle cx="1173" cy="234" r="1.0"/><circle cx="1179" cy="243" r="0.6"/><circle cx="1168" cy="234" r="0.8"/><circle cx="1167" cy="233" r="0.8"/><circle cx="1169" cy="245" r="1.2"/><circle cx="1174" cy="228" r="0.5"/><circle cx="1170" cy="235" r="1.2"/><circle cx="1173" cy="237" r="0.5"/><circle cx="1173" cy="243" r="0.9"/><circle cx="1177" cy="244" r="1.0"/><circle cx="1173" cy="240" r="0.7"/><circle cx="1175" cy="244" r="0.5"/><circle cx="1169" cy="228" r="1.0"/><circle cx="1182" cy="239" r="1.4"/><circle cx="1179" cy="244" r="0.4"/><circle cx="1167" cy="232" r="0.5"/><circle cx="1166" cy="247" r="1.4"/><circle cx="1177" cy="237" r="0.7"/><circle cx="1183" cy="240" r="0.5"/><circle cx="1166" cy="240" r="0.5"/><circle cx="1177" cy="240" r="0.8"/><circle cx="1171" cy="251" r="1.3"/><circle cx="1174" cy="231" r="1.4"/><circle cx="1169" cy="231" r="1.2"/><circle cx="1165" cy="239" r="0.8"/><circle cx="1163" cy="234" r="1.2"/><circle cx="1175" cy="243" r="0.7"/><circle cx="1173" cy="242" r="0.6"/><circle cx="1169" cy="228" r="1.0"/><circle cx="1175" cy="250" r="1.3"/><circle cx="1170" cy="238" r="0.4"/></g><g fill="#000" fill-opacity="0.75"><circle cx="1168" cy="241" r="1.3"/><circle cx="1163" cy="238" r="1.3"/><circle cx="1174" cy="241" r="1.3"/><circle cx="1170" cy="242" r="0.7"/><circle cx="1174" cy="241" r="1.4"/><circle cx="1174" cy="240" r="1.2"/><circle cx="1179" cy="244" r="0.7"/><circle cx="1169" cy="233" r="0.8"/><circle cx="1174" cy="249" r="1.0"/><circle cx="1174" cy="248" r="0.7"/><circle cx="1160" cy="242" r="0.8"/><circle cx="1174" cy="237" r="1.0"/><circle cx="1172" cy="238" r="1.2"/><circle cx="1171" cy="241" r="1.0"/><circle cx="1177" cy="241" r="1.1"/><circle cx="1171" cy="240" r="0.7"/><circle cx="1162" cy="236" r="1.3"/><circle cx="1168" cy="245" r="0.4"/><circle cx="1168" cy="248" r="1.0"/><circle cx="1161" cy="240" r="1.3"/><circle cx="1167" cy="234" r="0.6"/><circle cx="1173" cy="236" r="0.5"/><circle cx="1170" cy="236" r="1.3"/><circle cx="1182" cy="244" r="0.5"/><circle cx="1176" cy="235" r="1.0"/><circle cx="1173" cy="242" r="1.4"/><circle cx="1167" cy="241" r="0.9"/><circle cx="1166" cy="243" r="0.8"/><circle cx="1177" cy="238" r="0.6"/><circle cx="1166" cy="236" r="1.2"/><circle cx="1175" cy="238" r="1.1"/><circle cx="1165" cy="232" r="1.1"/><circle cx="1182" cy="240" r="0.8"/><circle cx="1176" cy="234" r="1.2"/><circle cx="1178" cy="241" r="0.8"/><circle cx="1182" cy="235" r="1.0"/><circle cx="1182" cy="241" r="0.9"/><circle cx="1170" cy="240" r="0.6"/><circle cx="1169" cy="236" r="0.4"/><circle cx="1179" cy="243" r="0.7"/><circle cx="1178" cy="245" r="0.5"/><circle cx="1161" cy="243" r="0.7"/><circle cx="1168" cy="250" r="1.0"/><circle cx="1166" cy="249" r="0.5"/><circle cx="1168" cy="239" r="1.2"/><circle cx="1179" cy="248" r="0.6"/><circle cx="1165" cy="230" r="1.4"/><circle cx="1164" cy="242" r="1.0"/><circle cx="1167" cy="237" r="1.1"/><circle cx="1162" cy="235" r="1.0"/><circle cx="1162" cy="245" r="0.4"/><circle cx="1162" cy="241" r="0.8"/><circle cx="1180" cy="238" r="0.9"/><circle cx="1178" cy="235" r="0.6"/><circle cx="1181" cy="235" r="1.4"/><circle cx="1168" cy="242" r="0.6"/><circle cx="1166" cy="242" r="1.2"/><circle cx="1179" cy="234" r="0.8"/><circle cx="1173" cy="236" r="1.1"/><circle cx="1174" cy="241" r="0.5"/><circle cx="1168" cy="237" r="0.9"/><circle cx="1178" cy="239" r="1.1"/><circle cx="1173" cy="239" r="0.6"/><circle cx="1179" cy="245" r="0.6"/><circle cx="1178" cy="247" r="1.3"/><circle cx="1169" cy="245" r="0.9"/><circle cx="1176" cy="250" r="1.1"/></g><g fill="#000" fill-opacity="0.5"><circle cx="1175" cy="242" r="1.2"/><circle cx="1171" cy="230" r="0.4"/><circle cx="1180" cy="245" r="1.4"/><circle cx="1175" cy="238" r="0.7"/><circle cx="1179" cy="244" r="1.2"/><circle cx="1179" cy="232" r="0.9"/><circle cx="1168" cy="242" r="1.2"/><circle cx="1177" cy="242" r="0.9"/><circle cx="1181" cy="245" r="0.7"/><circle cx="1178" cy="244" r="1.2"/><circle cx="1169" cy="249" r="0.7"/><circle cx="1172" cy="244" r="1.4"/><circle cx="1175" cy="240" r="1.1"/><circle cx="1183" cy="241" r="0.8"/><circle cx="1181" cy="244" r="0.6"/><circle cx="1168" cy="236" r="1.2"/><circle cx="1169" cy="240" r="0.7"/><circle cx="1181" cy="245" r="0.6"/><circle cx="1180" cy="236" r="0.4"/><circle cx="1180" cy="239" r="1.0"/><circle cx="1172" cy="231" r="1.3"/><circle cx="1173" cy="234" r="0.5"/><circle cx="1180" cy="231" r="1.2"/><circle cx="1168" cy="232" r="0.8"/><circle cx="1173" cy="242" r="1.3"/><circle cx="1176" cy="249" r="1.0"/><circle cx="1173" cy="236" r="1.0"/><circle cx="1170" cy="245" r="0.8"/><circle cx="1168" cy="237" r="0.6"/><circle cx="1173" cy="231" r="0.9"/><circle cx="1171" cy="244" r="1.1"/><circle cx="1165" cy="237" r="1.3"/><circle cx="1180" cy="235" r="0.6"/><circle cx="1167" cy="229" r="1.3"/><circle cx="1176" cy="231" r="1.2"/><circle cx="1162" cy="235" r="0.9"/><circle cx="1167" cy="243" r="0.5"/><circle cx="1171" cy="249" r="1.4"/><circle cx="1163" cy="235" r="1.0"/><circle cx="1169" cy="231" r="0.4"/><circle cx="1167" cy="233" r="1.2"/><circle cx="1164" cy="242" r="0.8"/><circle cx="1171" cy="237" r="0.7"/><circle cx="1173" cy="241" r="0.6"/><circle cx="1172" cy="241" r="1.4"/><circle cx="1171" cy="246" r="0.7"/><circle cx="1180" cy="243" r="1.0"/><circle cx="1175" cy="240" r="1.2"/><circle cx="1167" cy="234" r="0.9"/><circle cx="1174" cy="227" r="1.0"/><circle cx="1165" cy="240" r="1.1"/><circle cx="1168" cy="235" r="0.5"/><circle cx="1161" cy="241" r="0.9"/><circle cx="1166" cy="239" r="0.6"/><circle cx="1168" cy="239" r="1.1"/><circle cx="1179" cy="243" r="0.5"/><circle cx="1171" cy="244" r="0.5"/><circle cx="1175" cy="250" r="0.8"/><circle cx="1171" cy="249" r="1.3"/><circle cx="1177" cy="238" r="1.1"/><circle cx="1165" cy="233" r="1.4"/></g><g fill="#000" fill-opacity="0.25"><circle cx="1164" cy="238" r="1.2"/><circle cx="1166" cy="239" r="1.1"/><circle cx="1173" cy="237" r="0.6"/><circle cx="1174" cy="229" r="0.8"/><circle cx="1163" cy="240" r="0.7"/><circle cx="1164" cy="243" r="0.5"/><circle cx="1169" cy="231" r="0.9"/><circle cx="1170" cy="237" r="0.4"/><circle cx="1175" cy="238" r="1.0"/><circle cx="1165" cy="243" r="1.3"/><circle cx="1163" cy="232" r="1.0"/><circle cx="1181" cy="243" r="0.5"/><circle cx="1174" cy="248" r="1.3"/><circle cx="1172" cy="249" r="1.3"/><circle cx="1166" cy="234" r="0.8"/><circle cx="1181" cy="238" r="1.2"/><circle cx="1176" cy="231" r="0.6"/><circle cx="1166" cy="247" r="0.9"/><circle cx="1172" cy="229" r="1.0"/><circle cx="1177" cy="232" r="0.8"/></g><path d="M1182 253 L1188 253 M1185 250 L1185 256" stroke="#000" stroke-width="1.3"/><g fill="#000" fill-opacity="0.5"><circle cx="1211" cy="246" r="0.4"/><circle cx="1215" cy="240" r="1.0"/><circle cx="1202" cy="242" r="1.1"/><circle cx="1207" cy="239" r="0.6"/><circle cx="1211" cy="246" r="0.7"/><circle cx="1202" cy="237" r="0.5"/><circle cx="1204" cy="247" r="0.5"/><circle cx="1215" cy="236" r="0.5"/><circle cx="1194" cy="239" r="0.8"/><circle cx="1215" cy="246" r="0.8"/><circle cx="1205" cy="244" r="1.1"/><circle cx="1207" cy="244" r="0.5"/><circle cx="1205" cy="238" r="0.7"/><circle cx="1196" cy="239" r="0.5"/><circle cx="1204" cy="248" r="0.4"/><circle cx="1217" cy="236" r="1.1"/><circle cx="1196" cy="242" r="1.1"/><circle cx="1213" cy="231" r="0.6"/><circle cx="1197" cy="242" r="0.7"/><circle cx="1206" cy="236" r="1.0"/><circle cx="1217" cy="242" r="0.9"/><circle cx="1208" cy="235" r="1.1"/><circle cx="1204" cy="233" r="0.9"/><circle cx="1213" cy="234" r="0.7"/><circle cx="1201" cy="246" r="0.5"/><circle cx="1215" cy="234" r="0.6"/><circle cx="1209" cy="241" r="0.8"/><circle cx="1197" cy="240" r="0.6"/><circle cx="1212" cy="236" r="0.7"/><circle cx="1200" cy="248" r="1.0"/><circle cx="1201" cy="239" r="1.1"/><circle cx="1204" cy="233" r="0.6"/><circle cx="1205" cy="228" r="0.6"/><circle cx="1215" cy="242" r="1.0"/><circle cx="1215" cy="245" r="0.4"/><circle cx="1207" cy="250" r="0.7"/><circle cx="1206" cy="239" r="0.6"/><circle cx="1210" cy="231" r="1.0"/><circle cx="1205" cy="236" r="0.7"/><circle cx="1202" cy="239" r="1.1"/><circle cx="1204" cy="239" r="0.4"/><circle cx="1194" cy="234" r="0.6"/><circle cx="1215" cy="233" r="0.5"/><circle cx="1206" cy="229" r="1.1"/><circle cx="1208" cy="248" r="0.7"/><circle cx="1207" cy="243" r="0.9"/><circle cx="1194" cy="241" r="0.6"/><circle cx="1208" cy="237" r="0.6"/></g><g fill="#000" fill-opacity="0.75"><circle cx="1203" cy="247" r="0.7"/><circle cx="1210" cy="248" r="0.7"/><circle cx="1207" cy="243" r="0.7"/><circle cx="1214" cy="237" r="1.1"/><circle cx="1194" cy="241" r="0.8"/><circle cx="1197" cy="241" r="0.8"/><circle cx="1196" cy="243" r="0.4"/><circle cx="1201" cy="240" r="0.6"/><circle cx="1201" cy="239" r="1.1"/><circle cx="1218" cy="236" r="0.5"/><circle cx="1205" cy="234" r="0.6"/><circle cx="1194" cy="243" r="1.2"/><circle cx="1205" cy="245" r="0.5"/><circle cx="1204" cy="239" r="0.8"/><circle cx="1205" cy="237" r="1.2"/><circle cx="1196" cy="233" r="0.8"/></g><g fill="#000" fill-opacity="0.25"><circle cx="1212" cy="240" r="0.9"/><circle cx="1208" cy="236" r="1.0"/><circle cx="1203" cy="249" r="1.1"/><circle cx="1205" cy="247" r="0.6"/><circle cx="1196" cy="231" r="0.5"/><circle cx="1203" cy="244" r="0.7"/><circle cx="1204" cy="241" r="0.9"/><circle cx="1209" cy="235" r="0.8"/><circle cx="1195" cy="244" r="1.1"/><circle cx="1212" cy="233" r="0.4"/><circle cx="1198" cy="235" r="1.1"/><circle cx="1205" cy="244" r="0.5"/><circle cx="1208" cy="238" r="1.0"/><circle cx="1200" cy="240" r="0.5"/><circle cx="1206" cy="242" r="0.6"/><circle cx="1210" cy="239" r="0.8"/><circle cx="1208" cy="240" r="0.9"/><circle cx="1217" cy="238" r="0.9"/><circle cx="1204" cy="251" r="0.8"/><circle cx="1202" cy="242" r="0.7"/><circle cx="1214" cy="232" r="1.2"/><circle cx="1208" cy="241" r="0.6"/><circle cx="1203" cy="244" r="1.0"/><circle cx="1205" cy="246" r="0.7"/><circle cx="1206" cy="244" r="0.5"/><circle cx="1199" cy="236" r="0.8"/><circle cx="1199" cy="234" r="0.6"/><circle cx="1198" cy="240" r="1.1"/><circle cx="1214" cy="232" r="0.5"/><circle cx="1199" cy="242" r="0.5"/><circle cx="1214" cy="243" r="0.8"/><circle cx="1212" cy="245" r="0.8"/><circle cx="1203" cy="234" r="0.7"/><circle cx="1203" cy="235" r="0.4"/><circle cx="1210" cy="234" r="0.4"/><circle cx="1205" cy="235" r="1.1"/><circle cx="1203" cy="246" r="0.9"/><circle cx="1203" cy="243" r="1.0"/><circle cx="1207" cy="233" r="0.4"/><circle cx="1214" cy="237" r="1.2"/><circle cx="1212" cy="237" r="0.5"/></g><path d="M1216 253 L1222 253 M1219 250 L1219 256" stroke="#000" stroke-width="1.3"/><g fill="#000" fill-opacity="0.5"><circle cx="1241" cy="239" r="1.0"/><circle cx="1231" cy="241" r="0.7"/><circle cx="1240" cy="234" r="0.6"/><circle cx="1243" cy="250" r="0.8"/><circle cx="1238" cy="239" r="0.5"/><circle cx="1234" cy="241" r="0.9"/><circle cx="1238" cy="246" r="0.8"/><circle cx="1244" cy="245" r="0.7"/><circle cx="1238" cy="250" r="0.6"/><circle cx="1241" cy="237" r="1.0"/><circle cx="1243" cy="234" r="0.4"/><circle cx="1234" cy="246" r="1.0"/><circle cx="1245" cy="249" r="1.0"/><circle cx="1236" cy="240" r="0.5"/><circle cx="1246" cy="235" r="0.6"/><circle cx="1243" cy="246" r="0.4"/><circle cx="1233" cy="243" r="0.7"/><circle cx="1244" cy="237" r="1.0"/><circle cx="1245" cy="248" r="0.8"/><circle cx="1235" cy="247" r="0.7"/><circle cx="1241" cy="233" r="0.7"/><circle cx="1234" cy="237" r="0.9"/><circle cx="1235" cy="231" r="0.7"/><circle cx="1233" cy="232" r="0.9"/><circle cx="1234" cy="239" r="0.5"/><circle cx="1238" cy="229" r="0.5"/><circle cx="1234" cy="233" r="1.0"/><circle cx="1242" cy="249" r="0.8"/><circle cx="1238" cy="240" r="0.5"/></g><g fill="#000" fill-opacity="0.25"><circle cx="1237" cy="243" r="0.6"/><circle cx="1236" cy="228" r="1.0"/><circle cx="1235" cy="229" r="0.6"/><circle cx="1245" cy="229" r="0.8"/><circle cx="1248" cy="243" r="0.9"/><circle cx="1235" cy="235" r="0.5"/><circle cx="1245" cy="241" r="0.7"/><circle cx="1234" cy="231" r="0.8"/><circle cx="1236" cy="249" r="0.8"/><circle cx="1240" cy="247" r="0.5"/><circle cx="1243" cy="237" r="0.9"/><circle cx="1245" cy="240" r="0.9"/><circle cx="1236" cy="237" r="0.9"/><circle cx="1236" cy="241" r="0.6"/><circle cx="1241" cy="228" r="0.7"/><circle cx="1233" cy="243" r="0.5"/><circle cx="1241" cy="232" r="0.4"/><circle cx="1244" cy="243" r="0.9"/><circle cx="1250" cy="234" r="0.7"/><circle cx="1246" cy="246" r="0.5"/><circle cx="1235" cy="229" r="0.6"/><circle cx="1230" cy="239" r="0.5"/><circle cx="1237" cy="242" r="0.4"/><circle cx="1242" cy="240" r="0.5"/><circle cx="1248" cy="234" r="0.4"/><circle cx="1247" cy="240" r="0.8"/><circle cx="1241" cy="234" r="0.9"/><circle cx="1250" cy="237" r="0.6"/><circle cx="1242" cy="230" r="0.7"/><circle cx="1244" cy="241" r="0.8"/><circle cx="1241" cy="234" r="0.9"/><circle cx="1244" cy="232" r="0.6"/><circle cx="1238" cy="243" r="1.0"/><circle cx="1242" cy="243" r="0.9"/><circle cx="1245" cy="246" r="0.6"/><circle cx="1244" cy="243" r="0.5"/><circle cx="1233" cy="235" r="0.9"/><circle cx="1246" cy="240" r="0.5"/><circle cx="1243" cy="236" r="0.7"/><circle cx="1234" cy="229" r="0.7"/><circle cx="1236" cy="244" r="0.7"/><circle cx="1246" cy="233" r="0.8"/><circle cx="1237" cy="236" r="0.9"/><circle cx="1249" cy="236" r="0.7"/><circle cx="1230" cy="243" r="0.7"/></g><path d="M1250 253 L1256 253 M1253 250 L1253 256" stroke="#000" stroke-width="1.3"/><g fill="#000" fill-opacity="0.5"><circle cx="1275" cy="242" r="0.5"/><circle cx="1274" cy="232" r="0.9"/><circle cx="1275" cy="230" r="0.8"/><circle cx="1274" cy="245" r="0.9"/><circle cx="1273" cy="243" r="0.4"/><circle cx="1276" cy="239" r="0.7"/><circle cx="1275" cy="242" r="0.4"/><circle cx="1274" cy="230" r="0.4"/><circle cx="1276" cy="237" r="0.9"/><circle cx="1276" cy="244" r="0.4"/><circle cx="1276" cy="238" r="0.5"/><circle cx="1274" cy="232" r="0.7"/><circle cx="1276" cy="234" r="0.4"/><circle cx="1272" cy="233" r="0.6"/><circle cx="1274" cy="239" r="0.7"/><circle cx="1272" cy="236" r="0.7"/><circle cx="1275" cy="240" r="0.9"/><circle cx="1271" cy="236" r="0.5"/><circle cx="1275" cy="240" r="0.5"/><circle cx="1275" cy="242" r="0.5"/><circle cx="1273" cy="242" r="0.8"/><circle cx="1276" cy="234" r="0.6"/><circle cx="1276" cy="243" r="0.4"/><circle cx="1272" cy="241" r="0.7"/></g><g fill="#000" fill-opacity="0.75"><circle cx="1272" cy="232" r="0.8"/><circle cx="1274" cy="233" r="0.4"/><circle cx="1276" cy="243" r="0.6"/><circle cx="1275" cy="232" r="0.8"/><circle cx="1273" cy="237" r="0.7"/><circle cx="1276" cy="237" r="0.7"/><circle cx="1276" cy="239" r="0.8"/><circle cx="1275" cy="242" r="0.6"/><circle cx="1273" cy="241" r="0.8"/><circle cx="1274" cy="229" r="0.5"/><circle cx="1274" cy="246" r="0.6"/><circle cx="1272" cy="235" r="0.4"/></g><g fill="#000" fill-opacity="0.25"><circle cx="1274" cy="247" r="0.8"/><circle cx="1275" cy="232" r="0.5"/><circle cx="1271" cy="234" r="0.8"/><circle cx="1272" cy="237" r="0.7"/><circle cx="1273" cy="230" r="0.7"/></g><rect x="1286" y="250" width="5" height="6" fill="#ff7070" opacity="0.8"/><path d="M1284 253 L1290 253 M1287 250 L1287 256" stroke="#000" stroke-width="1.3"/><g fill="#000" fill-opacity="1.0"><circle cx="1307" cy="236" r="0.8"/><circle cx="1310" cy="238" r="1.1"/><circle cx="1307" cy="239" r="0.7"/><circle cx="1309" cy="229" r="0.6"/><circle cx="1306" cy="240" r="1.0"/><circle cx="1308" cy="240" r="1.0"/><circle cx="1307" cy="233" r="1.1"/><circle cx="1309" cy="238" r="0.8"/><circle cx="1308" cy="238" r="0.9"/></g><g fill="#000" fill-opacity="0.75"><circle cx="1309" cy="235" r="0.8"/><circle cx="1309" cy="236" r="0.7"/><circle cx="1306" cy="244" r="0.6"/><circle cx="1307" cy="237" r="0.8"/></g><rect x="1320" y="250" width="5" height="6" fill="#ff7070" opacity="0.8"/><path d="M1318 253 L1324 253 M1321 250 L1321 256" stroke="#000" stroke-width="1.3"/><g fill="#000" fill-opacity="0.75"><circle cx="1343" cy="231" r="1.1"/><circle cx="1339" cy="239" r="0.7"/><circle cx="1340" cy="236" r="1.2"/><circle cx="1344" cy="249" r="0.9"/><circle cx="1342" cy="236" r="1.1"/><circle cx="1344" cy="234" r="0.8"/><circle cx="1340" cy="237" r="1.1"/><circle cx="1344" cy="233" r="0.5"/><circle cx="1342" cy="245" r="1.1"/><circle cx="1340" cy="247" r="1.1"/><circle cx="1341" cy="231" r="1.0"/><circle cx="1342" cy="232" r="0.8"/><circle cx="1342" cy="229" r="0.9"/><circle cx="1342" cy="230" r="0.8"/><circle cx="1340" cy="239" r="0.6"/><circle cx="1341" cy="244" r="0.5"/><circle cx="1339" cy="239" r="0.7"/><circle cx="1340" cy="240" r="1.2"/><circle cx="1344" cy="230" r="0.4"/><circle cx="1343" cy="231" r="0.8"/><circle cx="1342" cy="229" r="1.2"/><circle cx="1341" cy="237" r="0.8"/><circle cx="1341" cy="237" r="1.3"/><circle cx="1340" cy="237" r="0.9"/><circle cx="1344" cy="236" r="0.4"/><circle cx="1344" cy="241" r="1.2"/><circle cx="1340" cy="238" r="0.6"/><circle cx="1344" cy="238" r="0.9"/><circle cx="1342" cy="243" r="1.2"/><circle cx="1342" cy="228" r="0.6"/><circle cx="1341" cy="230" r="1.0"/><circle cx="1343" cy="236" r="0.5"/><circle cx="1342" cy="234" r="0.8"/><circle cx="1339" cy="240" r="0.6"/><circle cx="1343" cy="233" r="0.4"/><circle cx="1341" cy="227" r="1.1"/><circle cx="1342" cy="249" r="1.0"/><circle cx="1342" cy="241" r="0.7"/><circle cx="1342" cy="235" r="1.2"/><circle cx="1343" cy="233" r="1.3"/><circle cx="1342" cy="243" r="1.2"/><circle cx="1343" cy="238" r="1.1"/><circle cx="1345" cy="242" r="1.1"/><circle cx="1344" cy="234" r="0.4"/><circle cx="1340" cy="244" r="0.6"/><circle cx="1343" cy="228" r="0.6"/><circle cx="1343" cy="234" r="1.0"/></g><g fill="#000" fill-opacity="1.0"><circle cx="1342" cy="234" r="0.5"/><circle cx="1340" cy="231" r="0.7"/><circle cx="1342" cy="230" r="0.8"/><circle cx="1341" cy="239" r="1.0"/><circle cx="1339" cy="235" r="0.4"/><circle cx="1339" cy="233" r="1.2"/><circle cx="1343" cy="245" r="1.0"/><circle cx="1343" cy="244" r="1.0"/><circle cx="1342" cy="230" r="0.7"/><circle cx="1345" cy="240" r="1.2"/><circle cx="1344" cy="245" r="0.9"/><circle cx="1341" cy="242" r="1.0"/><circle cx="1342" cy="242" r="0.4"/><circle cx="1341" cy="236" r="1.3"/><circle cx="1342" cy="236" r="1.1"/><circle cx="1342" cy="240" r="0.8"/><circle cx="1343" cy="228" r="0.5"/><circle cx="1342" cy="237" r="0.5"/><circle cx="1343" cy="234" r="0.5"/><circle cx="1344" cy="246" r="1.2"/><circle cx="1345" cy="235" r="0.6"/><circle cx="1341" cy="231" r="1.1"/><circle cx="1343" cy="246" r="0.9"/><circle cx="1341" cy="246" r="0.9"/><circle cx="1340" cy="244" r="0.4"/><circle cx="1343" cy="243" r="1.0"/><circle cx="1341" cy="229" r="0.7"/><circle cx="1342" cy="237" r="1.2"/><circle cx="1342" cy="235" r="1.0"/><circle cx="1343" cy="242" r="0.7"/><circle cx="1342" cy="237" r="0.5"/><circle cx="1345" cy="242" r="1.2"/><circle cx="1344" cy="231" r="0.9"/><circle cx="1344" cy="243" r="0.6"/></g><g fill="#000" fill-opacity="0.5"><circle cx="1340" cy="241" r="1.1"/><circle cx="1343" cy="243" r="0.9"/><circle cx="1344" cy="230" r="0.7"/><circle cx="1341" cy="231" r="1.0"/></g><path d="M1358 249 L1358 255 L1352 255 Z" fill="#ff7070"/><path d="M1363.0 234.0 l12 12" stroke="#000" stroke-width="1.1" transform="translate(0.0,0.0)"/><path d="M1367.0 234.0 l12 12" stroke="#000" stroke-width="1.1" transform="translate(-1.5,-2.5)"/><path d="M1371.0 234.0 l12 12" stroke="#000" stroke-width="1.1" transform="translate(-3.0,-5.0)"/><path d="M1375.0 234.0 l12 12" stroke="#000" stroke-width="1.1" transform="translate(-4.5,-7.5)"/><path d="M1379.0 234.0 l12 12" stroke="#000" stroke-width="1.1" transform="translate(-6.0,-10.0)"/><path d="M1383.0 234.0 l12 12" stroke="#000" stroke-width="1.1" transform="translate(-7.5,-12.5)"/><path d="M1386 253 L1392 253 M1389 250 L1389 256" stroke="#000" stroke-width="1.3"/><rect x="1069" y="272" width="1.3" height="1.3" fill="#000"/><circle cx="1104" cy="273" r="15" fill="url(#gF)"/><g fill="#000" fill-opacity="0.25"><circle cx="1104" cy="277" r="0.6"/><circle cx="1107" cy="265" r="0.9"/><circle cx="1104" cy="273" r="0.9"/><circle cx="1100" cy="272" r="0.7"/><circle cx="1109" cy="270" r="1.1"/><circle cx="1112" cy="277" r="0.5"/><circle cx="1100" cy="272" r="1.3"/><circle cx="1106" cy="272" r="1.1"/><circle cx="1103" cy="268" r="1.2"/><circle cx="1095" cy="269" r="1.1"/><circle cx="1093" cy="269" r="0.9"/><circle cx="1103" cy="272" r="0.6"/><circle cx="1100" cy="269" r="1.0"/><circle cx="1100" cy="275" r="1.1"/><circle cx="1109" cy="276" r="0.5"/><circle cx="1111" cy="271" r="0.5"/><circle cx="1108" cy="267" r="0.5"/><circle cx="1107" cy="274" r="0.5"/><circle cx="1112" cy="274" r="0.9"/><circle cx="1104" cy="273" r="1.3"/><circle cx="1103" cy="276" r="1.3"/><circle cx="1101" cy="273" r="0.6"/><circle cx="1105" cy="280" r="0.6"/><circle cx="1097" cy="265" r="0.4"/><circle cx="1096" cy="278" r="0.4"/><circle cx="1103" cy="273" r="0.8"/><circle cx="1110" cy="270" r="0.8"/><circle cx="1100" cy="276" r="1.1"/><circle cx="1103" cy="282" r="1.1"/><circle cx="1105" cy="266" r="0.5"/><circle cx="1111" cy="278" r="1.0"/><circle cx="1100" cy="266" r="0.9"/><circle cx="1110" cy="281" r="1.1"/><circle cx="1108" cy="275" r="0.6"/><circle cx="1098" cy="266" r="1.0"/><circle cx="1105" cy="269" r="0.8"/><circle cx="1111" cy="268" r="0.9"/><circle cx="1098" cy="280" r="1.0"/><circle cx="1096" cy="272" r="1.2"/><circle cx="1114" cy="272" r="0.8"/><circle cx="1106" cy="274" r="0.6"/><circle cx="1111" cy="271" r="1.2"/><circle cx="1098" cy="274" r="1.2"/><circle cx="1104" cy="273" r="0.7"/><circle cx="1110" cy="278" r="0.9"/><circle cx="1112" cy="279" r="1.1"/><circle cx="1099" cy="269" r="1.0"/><circle cx="1096" cy="267" r="1.2"/><circle cx="1106" cy="279" r="0.9"/><circle cx="1103" cy="276" r="0.6"/><circle cx="1102" cy="272" r="0.9"/><circle cx="1108" cy="277" r="0.8"/><circle cx="1093" cy="275" r="0.5"/><circle cx="1109" cy="277" r="1.1"/><circle cx="1097" cy="276" r="0.4"/><circle cx="1102" cy="269" r="1.0"/><circle cx="1113" cy="280" r="0.5"/><circle cx="1111" cy="277" r="0.5"/><circle cx="1099" cy="265" r="0.9"/><circle cx="1101" cy="283" r="1.2"/><circle cx="1110" cy="276" r="0.6"/><circle cx="1106" cy="265" r="0.8"/><circle cx="1101" cy="269" r="0.7"/><circle cx="1102" cy="270" r="0.6"/></g><path d="M1114 287 L1120 287 M1117 284 L1117 290" stroke="#000" stroke-width="1.3"/><circle cx="1138" cy="272" r="15" fill="url(#gO)"/><rect x="1150" y="284" width="5" height="6" fill="#ff7070" opacity="0.8"/><path d="M1148 287 L1154 287 M1151 284 L1151 290" stroke="#000" stroke-width="1.3"/><g fill="#000" fill-opacity="0.75"><circle cx="1165" cy="265" r="0.7"/><circle cx="1180" cy="277" r="1.0"/><circle cx="1177" cy="268" r="0.6"/><circle cx="1175" cy="282" r="0.8"/><circle cx="1167" cy="263" r="0.8"/><circle cx="1170" cy="266" r="0.6"/><circle cx="1166" cy="272" r="0.5"/><circle cx="1179" cy="274" r="0.5"/><circle cx="1178" cy="264" r="0.5"/><circle cx="1173" cy="273" r="1.1"/><circle cx="1171" cy="266" r="0.4"/><circle cx="1166" cy="272" r="0.6"/><circle cx="1169" cy="274" r="0.6"/><circle cx="1174" cy="266" r="0.9"/><circle cx="1169" cy="271" r="0.8"/><circle cx="1176" cy="281" r="0.6"/><circle cx="1171" cy="268" r="0.8"/><circle cx="1171" cy="263" r="1.3"/><circle cx="1170" cy="269" r="0.7"/><circle cx="1178" cy="279" r="0.4"/><circle cx="1175" cy="268" r="0.4"/><circle cx="1175" cy="273" r="1.1"/><circle cx="1180" cy="280" r="1.2"/><circle cx="1175" cy="276" r="0.6"/><circle cx="1176" cy="280" r="0.7"/><circle cx="1167" cy="271" r="0.7"/><circle cx="1165" cy="268" r="0.4"/><circle cx="1166" cy="267" r="0.6"/><circle cx="1164" cy="278" r="1.3"/><circle cx="1164" cy="271" r="1.3"/></g><g fill="#000" fill-opacity="1.0"><circle cx="1182" cy="270" r="0.6"/><circle cx="1182" cy="276" r="0.7"/><circle cx="1171" cy="265" r="0.4"/><circle cx="1174" cy="274" r="1.1"/><circle cx="1176" cy="275" r="0.9"/><circle cx="1162" cy="278" r="1.1"/><circle cx="1174" cy="275" r="1.2"/><circle cx="1171" cy="262" r="1.0"/><circle cx="1161" cy="272" r="0.9"/><circle cx="1164" cy="277" r="0.4"/><circle cx="1175" cy="264" r="1.2"/></g><g fill="#000" fill-opacity="0.5"><circle cx="1178" cy="280" r="0.9"/><circle cx="1179" cy="266" r="1.0"/><circle cx="1176" cy="265" r="0.6"/><circle cx="1173" cy="266" r="0.5"/></g><rect x="1184" y="284" width="5" height="6" fill="#ff7070" opacity="0.8"/><path d="M1182 287 L1188 287 M1185 284 L1185 290" stroke="#000" stroke-width="1.3"/><g fill="#000" fill-opacity="0.75"><circle cx="1200" cy="277" r="0.9"/><circle cx="1212" cy="272" r="0.7"/><circle cx="1203" cy="264" r="0.5"/><circle cx="1215" cy="277" r="1.1"/><circle cx="1201" cy="282" r="0.9"/><circle cx="1209" cy="270" r="0.6"/><circle cx="1199" cy="274" r="0.9"/><circle cx="1200" cy="273" r="1.1"/><circle cx="1208" cy="271" r="0.5"/><circle cx="1208" cy="271" r="1.1"/><circle cx="1216" cy="278" r="0.5"/><circle cx="1212" cy="281" r="0.9"/><circle cx="1207" cy="276" r="1.1"/><circle cx="1203" cy="269" r="0.5"/><circle cx="1200" cy="269" r="0.5"/><circle cx="1210" cy="273" r="1.0"/><circle cx="1214" cy="274" r="1.1"/><circle cx="1202" cy="271" r="0.5"/><circle cx="1206" cy="263" r="1.0"/><circle cx="1197" cy="274" r="0.6"/><circle cx="1202" cy="282" r="1.1"/><circle cx="1198" cy="271" r="0.4"/><circle cx="1198" cy="268" r="1.1"/></g><g fill="#000" fill-opacity="1.0"><circle cx="1212" cy="274" r="1.3"/><circle cx="1206" cy="280" r="1.3"/><circle cx="1206" cy="272" r="0.6"/><circle cx="1205" cy="272" r="1.2"/><circle cx="1211" cy="271" r="1.0"/><circle cx="1203" cy="278" r="1.1"/><circle cx="1203" cy="264" r="0.9"/><circle cx="1210" cy="276" r="1.0"/><circle cx="1207" cy="265" r="0.9"/><circle cx="1199" cy="280" r="1.1"/><circle cx="1203" cy="279" r="1.1"/><circle cx="1199" cy="278" r="0.7"/><circle cx="1207" cy="279" r="0.9"/><circle cx="1214" cy="276" r="1.0"/><circle cx="1217" cy="271" r="0.8"/><circle cx="1203" cy="270" r="1.1"/><circle cx="1207" cy="272" r="0.4"/><circle cx="1213" cy="269" r="0.7"/><circle cx="1203" cy="280" r="1.1"/><circle cx="1202" cy="275" r="0.4"/><circle cx="1215" cy="277" r="0.8"/><circle cx="1209" cy="271" r="0.6"/><circle cx="1196" cy="270" r="0.9"/><circle cx="1207" cy="273" r="0.5"/><circle cx="1205" cy="273" r="1.0"/></g><g fill="#000" fill-opacity="0.5"><circle cx="1202" cy="267" r="1.1"/></g><rect x="1218" y="284" width="5" height="6" fill="#ff7070" opacity="0.8"/><path d="M1216 287 L1222 287 M1219 284 L1219 290" stroke="#000" stroke-width="1.3"/><g fill="#000" fill-opacity="0.5"><circle cx="1230" cy="276" r="0.7"/><circle cx="1249" cy="271" r="0.7"/><circle cx="1247" cy="285" r="0.3"/><circle cx="1232" cy="280" r="0.5"/><circle cx="1236" cy="266" r="0.5"/><circle cx="1229" cy="275" r="0.6"/><circle cx="1226" cy="278" r="0.5"/><circle cx="1236" cy="277" r="0.4"/><circle cx="1244" cy="282" r="0.3"/><circle cx="1248" cy="280" r="0.4"/><circle cx="1251" cy="275" r="0.5"/><circle cx="1249" cy="265" r="0.6"/><circle cx="1250" cy="269" r="0.4"/><circle cx="1233" cy="271" r="0.6"/><circle cx="1232" cy="276" r="0.4"/><circle cx="1234" cy="275" r="0.4"/><circle cx="1233" cy="272" r="0.4"/><circle cx="1247" cy="276" r="0.6"/><circle cx="1244" cy="276" r="0.4"/><circle cx="1253" cy="275" r="0.7"/><circle cx="1240" cy="260" r="0.5"/><circle cx="1248" cy="283" r="0.6"/><circle cx="1232" cy="267" r="0.6"/><circle cx="1241" cy="274" r="0.5"/><circle cx="1233" cy="279" r="0.4"/><circle cx="1250" cy="269" r="0.4"/><circle cx="1250" cy="268" r="0.6"/><circle cx="1250" cy="263" r="0.6"/><circle cx="1237" cy="286" r="0.5"/><circle cx="1230" cy="278" r="0.6"/><circle cx="1236" cy="272" r="0.3"/><circle cx="1240" cy="281" r="0.5"/><circle cx="1249" cy="273" r="0.4"/><circle cx="1236" cy="275" r="0.5"/><circle cx="1249" cy="279" r="0.5"/><circle cx="1251" cy="266" r="0.6"/><circle cx="1240" cy="274" r="0.7"/><circle cx="1249" cy="277" r="0.6"/><circle cx="1235" cy="271" r="0.5"/><circle cx="1227" cy="269" r="0.5"/><circle cx="1236" cy="270" r="0.4"/><circle cx="1250" cy="276" r="0.5"/><circle cx="1253" cy="279" r="0.3"/><circle cx="1242" cy="283" r="0.3"/><circle cx="1228" cy="265" r="0.6"/><circle cx="1243" cy="269" r="0.3"/><circle cx="1235" cy="285" r="0.7"/><circle cx="1243" cy="284" r="0.7"/><circle cx="1227" cy="274" r="0.6"/><circle cx="1226" cy="278" r="0.4"/><circle cx="1240" cy="270" r="0.6"/><circle cx="1236" cy="266" r="0.7"/><circle cx="1246" cy="263" r="0.6"/><circle cx="1248" cy="274" r="0.7"/><circle cx="1228" cy="276" r="0.5"/><circle cx="1228" cy="281" r="0.6"/><circle cx="1236" cy="284" r="0.6"/><circle cx="1238" cy="281" r="0.5"/><circle cx="1234" cy="280" r="0.6"/><circle cx="1243" cy="265" r="0.5"/><circle cx="1249" cy="267" r="0.7"/><circle cx="1240" cy="264" r="0.6"/><circle cx="1227" cy="274" r="0.5"/><circle cx="1230" cy="266" r="0.4"/><circle cx="1253" cy="278" r="0.4"/><circle cx="1247" cy="273" r="0.6"/><circle cx="1248" cy="263" r="0.3"/><circle cx="1231" cy="278" r="0.6"/><circle cx="1249" cy="265" r="0.6"/><circle cx="1236" cy="284" r="0.3"/><circle cx="1251" cy="263" r="0.6"/><circle cx="1247" cy="282" r="0.3"/><circle cx="1230" cy="275" r="0.6"/><circle cx="1229" cy="273" r="0.5"/><circle cx="1240" cy="270" r="0.4"/><circle cx="1243" cy="264" r="0.4"/><circle cx="1236" cy="272" r="0.4"/><circle cx="1229" cy="267" r="0.4"/><circle cx="1237" cy="263" r="0.6"/><circle cx="1245" cy="278" r="0.4"/><circle cx="1244" cy="280" r="0.7"/><circle cx="1243" cy="278" r="0.4"/><circle cx="1236" cy="261" r="0.5"/><circle cx="1242" cy="267" r="0.4"/><circle cx="1243" cy="284" r="0.6"/><circle cx="1236" cy="266" r="0.4"/><circle cx="1240" cy="286" r="0.3"/><circle cx="1233" cy="261" r="0.4"/><circle cx="1232" cy="272" r="0.7"/><circle cx="1236" cy="279" r="0.7"/><circle cx="1254" cy="277" r="0.5"/><circle cx="1249" cy="267" r="0.4"/><circle cx="1247" cy="261" r="0.5"/><circle cx="1253" cy="267" r="0.4"/><circle cx="1226" cy="273" r="0.6"/><circle cx="1244" cy="282" r="0.3"/><circle cx="1249" cy="284" r="0.6"/><circle cx="1238" cy="272" r="0.5"/><circle cx="1251" cy="264" r="0.4"/><circle cx="1231" cy="265" r="0.5"/><circle cx="1236" cy="284" r="0.6"/><circle cx="1238" cy="279" r="0.4"/><circle cx="1250" cy="281" r="0.4"/><circle cx="1238" cy="273" r="0.7"/><circle cx="1240" cy="263" r="0.6"/><circle cx="1244" cy="286" r="0.7"/><circle cx="1254" cy="278" r="0.6"/><circle cx="1233" cy="283" r="0.6"/><circle cx="1235" cy="280" r="0.4"/><circle cx="1240" cy="277" r="0.6"/><circle cx="1251" cy="264" r="0.7"/><circle cx="1231" cy="277" r="0.7"/><circle cx="1227" cy="277" r="0.5"/><circle cx="1246" cy="273" r="0.3"/><circle cx="1245" cy="265" r="0.5"/><circle cx="1245" cy="265" r="0.6"/><circle cx="1253" cy="277" r="0.4"/><circle cx="1228" cy="279" r="0.5"/><circle cx="1235" cy="274" r="0.4"/><circle cx="1239" cy="259" r="0.4"/></g><g fill="#000" fill-opacity="0.25"><circle cx="1233" cy="264" r="0.6"/><circle cx="1244" cy="280" r="0.5"/><circle cx="1243" cy="270" r="0.4"/><circle cx="1232" cy="279" r="0.5"/><circle cx="1249" cy="272" r="0.5"/><circle cx="1253" cy="277" r="0.6"/><circle cx="1243" cy="271" r="0.3"/><circle cx="1252" cy="267" r="0.3"/><circle cx="1248" cy="272" r="0.5"/><circle cx="1244" cy="281" r="0.3"/><circle cx="1242" cy="282" r="0.4"/><circle cx="1252" cy="269" r="0.4"/><circle cx="1235" cy="279" r="0.6"/><circle cx="1242" cy="279" r="0.7"/><circle cx="1242" cy="265" r="0.3"/><circle cx="1233" cy="279" r="0.7"/><circle cx="1247" cy="261" r="0.4"/><circle cx="1228" cy="281" r="0.7"/><circle cx="1227" cy="279" r="0.4"/><circle cx="1238" cy="282" r="0.7"/><circle cx="1240" cy="279" r="0.6"/><circle cx="1229" cy="269" r="0.3"/><circle cx="1254" cy="269" r="0.4"/><circle cx="1228" cy="274" r="0.4"/><circle cx="1238" cy="278" r="0.4"/><circle cx="1232" cy="263" r="0.7"/><circle cx="1229" cy="269" r="0.5"/><circle cx="1246" cy="262" r="0.5"/><circle cx="1236" cy="276" r="0.4"/><circle cx="1229" cy="277" r="0.3"/><circle cx="1251" cy="266" r="0.6"/><circle cx="1236" cy="279" r="0.7"/><circle cx="1232" cy="268" r="0.6"/><circle cx="1226" cy="274" r="0.6"/><circle cx="1229" cy="269" r="0.5"/><circle cx="1235" cy="264" r="0.5"/><circle cx="1236" cy="277" r="0.6"/><circle cx="1235" cy="278" r="0.7"/><circle cx="1248" cy="274" r="0.6"/><circle cx="1231" cy="276" r="0.6"/><circle cx="1228" cy="273" r="0.4"/><circle cx="1248" cy="277" r="0.4"/><circle cx="1245" cy="262" r="0.6"/></g><g fill="#000" fill-opacity="0.75"><circle cx="1235" cy="275" r="0.5"/><circle cx="1226" cy="275" r="0.7"/><circle cx="1251" cy="269" r="0.6"/><circle cx="1231" cy="284" r="0.3"/><circle cx="1230" cy="279" r="0.5"/><circle cx="1243" cy="280" r="0.7"/><circle cx="1227" cy="272" r="0.6"/><circle cx="1235" cy="277" r="0.3"/><circle cx="1229" cy="276" r="0.4"/><circle cx="1249" cy="280" r="0.5"/><circle cx="1237" cy="272" r="0.4"/><circle cx="1241" cy="269" r="0.3"/><circle cx="1246" cy="280" r="0.6"/><circle cx="1240" cy="278" r="0.6"/><circle cx="1249" cy="275" r="0.5"/><circle cx="1240" cy="263" r="0.7"/><circle cx="1233" cy="266" r="0.7"/><circle cx="1245" cy="273" r="0.5"/><circle cx="1240" cy="260" r="0.5"/><circle cx="1232" cy="284" r="0.3"/><circle cx="1237" cy="271" r="0.3"/><circle cx="1240" cy="277" r="0.6"/><circle cx="1228" cy="267" r="0.4"/><circle cx="1234" cy="285" r="0.4"/><circle cx="1234" cy="283" r="0.5"/><circle cx="1231" cy="281" r="0.3"/><circle cx="1237" cy="264" r="0.4"/><circle cx="1246" cy="271" r="0.7"/><circle cx="1238" cy="262" r="0.3"/><circle cx="1228" cy="276" r="0.7"/><circle cx="1248" cy="280" r="0.5"/><circle cx="1234" cy="263" r="0.5"/><circle cx="1244" cy="263" r="0.5"/><circle cx="1244" cy="262" r="0.5"/><circle cx="1249" cy="271" r="0.4"/><circle cx="1242" cy="284" r="0.3"/><circle cx="1248" cy="269" r="0.6"/><circle cx="1254" cy="274" r="0.3"/><circle cx="1239" cy="268" r="0.4"/><circle cx="1239" cy="272" r="0.6"/><circle cx="1229" cy="267" r="0.5"/><circle cx="1228" cy="278" r="0.6"/><circle cx="1233" cy="276" r="0.5"/><circle cx="1238" cy="264" r="0.4"/><circle cx="1235" cy="275" r="0.5"/><circle cx="1250" cy="279" r="0.3"/><circle cx="1227" cy="270" r="0.7"/><circle cx="1239" cy="264" r="0.4"/><circle cx="1228" cy="274" r="0.7"/><circle cx="1229" cy="271" r="0.5"/><circle cx="1242" cy="286" r="0.5"/><circle cx="1251" cy="280" r="0.4"/><circle cx="1238" cy="268" r="0.3"/><circle cx="1234" cy="282" r="0.4"/><circle cx="1239" cy="276" r="0.5"/><circle cx="1237" cy="263" r="0.4"/><circle cx="1249" cy="282" r="0.3"/><circle cx="1241" cy="270" r="0.4"/><circle cx="1226" cy="271" r="0.4"/><circle cx="1248" cy="262" r="0.5"/><circle cx="1247" cy="278" r="0.5"/><circle cx="1235" cy="267" r="0.7"/><circle cx="1247" cy="269" r="0.4"/><circle cx="1229" cy="271" r="0.4"/><circle cx="1245" cy="278" r="0.4"/><circle cx="1244" cy="260" r="0.4"/><circle cx="1240" cy="280" r="0.6"/><circle cx="1239" cy="274" r="0.7"/><circle cx="1254" cy="276" r="0.7"/><circle cx="1241" cy="277" r="0.7"/><circle cx="1248" cy="266" r="0.4"/><circle cx="1254" cy="275" r="0.5"/><circle cx="1237" cy="271" r="0.7"/><circle cx="1233" cy="278" r="0.6"/><circle cx="1245" cy="275" r="0.4"/><circle cx="1235" cy="265" r="0.6"/><circle cx="1237" cy="265" r="0.4"/><circle cx="1233" cy="278" r="0.7"/><circle cx="1239" cy="280" r="0.7"/><circle cx="1254" cy="272" r="0.6"/><circle cx="1245" cy="284" r="0.6"/><circle cx="1239" cy="272" r="0.3"/><circle cx="1228" cy="269" r="0.4"/><circle cx="1242" cy="264" r="0.5"/><circle cx="1252" cy="279" r="0.6"/><circle cx="1236" cy="274" r="0.3"/><circle cx="1235" cy="266" r="0.5"/><circle cx="1253" cy="273" r="0.5"/><circle cx="1244" cy="282" r="0.4"/><circle cx="1233" cy="265" r="0.4"/><circle cx="1241" cy="262" r="0.5"/><circle cx="1243" cy="271" r="0.7"/><circle cx="1247" cy="272" r="0.5"/><circle cx="1229" cy="281" r="0.4"/><circle cx="1242" cy="269" r="0.6"/><circle cx="1252" cy="272" r="0.6"/><circle cx="1234" cy="280" r="0.4"/><circle cx="1238" cy="271" r="0.7"/><circle cx="1245" cy="283" r="0.6"/><circle cx="1241" cy="273" r="0.7"/><circle cx="1233" cy="265" r="0.6"/><circle cx="1232" cy="261" r="0.6"/><circle cx="1241" cy="270" r="0.4"/><circle cx="1236" cy="272" r="0.6"/><circle cx="1248" cy="284" r="0.6"/><circle cx="1251" cy="270" r="0.7"/><circle cx="1241" cy="284" r="0.5"/><circle cx="1234" cy="261" r="0.4"/><circle cx="1243" cy="268" r="0.7"/><circle cx="1237" cy="283" r="0.4"/><circle cx="1248" cy="265" r="0.7"/><circle cx="1252" cy="271" r="0.7"/><circle cx="1233" cy="283" r="0.6"/><circle cx="1252" cy="277" r="0.3"/><circle cx="1246" cy="282" r="0.6"/><circle cx="1230" cy="281" r="0.4"/><circle cx="1243" cy="264" r="0.6"/><circle cx="1232" cy="264" r="0.6"/><circle cx="1236" cy="272" r="0.6"/><circle cx="1245" cy="283" r="0.5"/><circle cx="1246" cy="263" r="0.7"/><circle cx="1242" cy="279" r="0.6"/><circle cx="1252" cy="281" r="0.5"/><circle cx="1240" cy="268" r="0.6"/><circle cx="1236" cy="261" r="0.6"/><circle cx="1226" cy="268" r="0.5"/><circle cx="1247" cy="261" r="0.5"/><circle cx="1235" cy="271" r="0.3"/><circle cx="1238" cy="263" r="0.3"/><circle cx="1234" cy="285" r="0.5"/></g><g fill="#000" fill-opacity="1.0"><circle cx="1242" cy="262" r="0.7"/><circle cx="1248" cy="271" r="0.6"/><circle cx="1230" cy="272" r="0.4"/><circle cx="1235" cy="266" r="0.4"/><circle cx="1237" cy="285" r="0.4"/><circle cx="1249" cy="269" r="0.6"/><circle cx="1236" cy="282" r="0.5"/></g><path d="M1250 287 L1256 287 M1253 284 L1253 290" stroke="#000" stroke-width="1.3"/><g fill="#000" fill-opacity="0.25"><circle cx="1275" cy="277" r="0.9"/><circle cx="1266" cy="264" r="0.8"/><circle cx="1287" cy="278" r="0.8"/><circle cx="1279" cy="283" r="0.6"/><circle cx="1279" cy="280" r="0.5"/><circle cx="1273" cy="284" r="1.0"/><circle cx="1283" cy="270" r="1.0"/><circle cx="1271" cy="269" r="0.8"/><circle cx="1276" cy="276" r="0.8"/><circle cx="1278" cy="277" r="1.0"/><circle cx="1266" cy="278" r="1.0"/><circle cx="1269" cy="270" r="0.7"/><circle cx="1267" cy="278" r="0.6"/><circle cx="1266" cy="283" r="0.6"/><circle cx="1279" cy="277" r="0.5"/><circle cx="1275" cy="280" r="1.1"/><circle cx="1279" cy="263" r="0.4"/><circle cx="1268" cy="271" r="1.1"/><circle cx="1281" cy="272" r="1.1"/><circle cx="1270" cy="268" r="0.7"/><circle cx="1279" cy="264" r="0.6"/><circle cx="1265" cy="271" r="0.4"/><circle cx="1279" cy="273" r="0.5"/><circle cx="1266" cy="281" r="1.2"/><circle cx="1283" cy="276" r="0.7"/><circle cx="1281" cy="279" r="1.0"/><circle cx="1273" cy="262" r="0.9"/><circle cx="1268" cy="284" r="0.4"/><circle cx="1278" cy="278" r="0.6"/><circle cx="1282" cy="276" r="1.1"/><circle cx="1270" cy="274" r="1.1"/><circle cx="1279" cy="276" r="1.1"/><circle cx="1271" cy="280" r="0.6"/><circle cx="1274" cy="276" r="1.0"/><circle cx="1288" cy="274" r="1.0"/><circle cx="1277" cy="269" r="0.9"/><circle cx="1270" cy="276" r="1.1"/><circle cx="1281" cy="266" r="0.5"/><circle cx="1279" cy="278" r="1.1"/><circle cx="1275" cy="265" r="0.6"/><circle cx="1274" cy="273" r="0.9"/><circle cx="1265" cy="282" r="0.7"/><circle cx="1270" cy="264" r="1.1"/><circle cx="1264" cy="277" r="1.1"/><circle cx="1281" cy="278" r="0.7"/><circle cx="1263" cy="277" r="0.4"/><circle cx="1280" cy="274" r="0.8"/><circle cx="1263" cy="268" r="0.4"/><circle cx="1275" cy="280" r="0.9"/><circle cx="1284" cy="279" r="0.5"/><circle cx="1277" cy="279" r="0.5"/><circle cx="1268" cy="276" r="1.0"/><circle cx="1272" cy="261" r="0.5"/><circle cx="1265" cy="274" r="1.1"/><circle cx="1273" cy="266" r="1.2"/><circle cx="1275" cy="273" r="0.7"/><circle cx="1273" cy="278" r="1.2"/><circle cx="1277" cy="272" r="0.7"/><circle cx="1278" cy="274" r="0.9"/><circle cx="1271" cy="264" r="0.9"/><circle cx="1275" cy="275" r="0.9"/><circle cx="1270" cy="276" r="0.7"/><circle cx="1274" cy="281" r="1.1"/><circle cx="1273" cy="268" r="1.2"/><circle cx="1271" cy="275" r="0.5"/><circle cx="1265" cy="277" r="1.1"/><circle cx="1265" cy="282" r="0.5"/><circle cx="1273" cy="270" r="0.9"/><circle cx="1284" cy="265" r="0.6"/><circle cx="1279" cy="274" r="0.9"/><circle cx="1270" cy="268" r="1.0"/><circle cx="1272" cy="274" r="1.2"/><circle cx="1276" cy="273" r="1.0"/><circle cx="1263" cy="272" r="0.9"/><circle cx="1285" cy="276" r="0.8"/><circle cx="1269" cy="266" r="0.9"/><circle cx="1271" cy="277" r="1.1"/><circle cx="1273" cy="264" r="0.8"/><circle cx="1265" cy="275" r="0.9"/><circle cx="1280" cy="268" r="1.2"/><circle cx="1269" cy="261" r="0.4"/><circle cx="1273" cy="280" r="0.7"/><circle cx="1272" cy="274" r="1.0"/><circle cx="1276" cy="265" r="1.1"/><circle cx="1269" cy="273" r="0.6"/><circle cx="1278" cy="284" r="0.7"/><circle cx="1273" cy="274" r="1.1"/><circle cx="1276" cy="263" r="0.8"/><circle cx="1284" cy="273" r="0.8"/><circle cx="1265" cy="281" r="0.5"/><circle cx="1276" cy="281" r="0.5"/><circle cx="1276" cy="272" r="0.8"/><circle cx="1285" cy="269" r="0.7"/><circle cx="1275" cy="277" r="0.8"/><circle cx="1274" cy="283" r="0.7"/><circle cx="1262" cy="279" r="0.6"/><circle cx="1262" cy="266" r="0.8"/><circle cx="1268" cy="284" r="1.1"/><circle cx="1269" cy="273" r="1.0"/><circle cx="1269" cy="263" r="0.4"/><circle cx="1270" cy="278" r="0.8"/><circle cx="1279" cy="273" r="0.9"/><circle cx="1267" cy="276" r="0.9"/><circle cx="1284" cy="271" r="1.2"/><circle cx="1267" cy="277" r="1.1"/><circle cx="1274" cy="265" r="1.1"/><circle cx="1268" cy="270" r="0.4"/><circle cx="1275" cy="271" r="0.7"/><circle cx="1286" cy="268" r="0.7"/><circle cx="1275" cy="281" r="0.7"/><circle cx="1272" cy="271" r="0.8"/><circle cx="1274" cy="280" r="0.9"/><circle cx="1283" cy="280" r="1.1"/><circle cx="1266" cy="273" r="0.5"/><circle cx="1275" cy="272" r="1.2"/><circle cx="1263" cy="279" r="0.9"/><circle cx="1283" cy="283" r="0.5"/><circle cx="1272" cy="263" r="0.4"/><circle cx="1271" cy="271" r="0.6"/><circle cx="1277" cy="280" r="1.1"/><circle cx="1273" cy="276" r="0.5"/><circle cx="1269" cy="281" r="0.4"/><circle cx="1277" cy="262" r="0.4"/><circle cx="1265" cy="281" r="0.8"/><circle cx="1281" cy="268" r="1.1"/><circle cx="1270" cy="266" r="1.0"/><circle cx="1281" cy="284" r="0.9"/><circle cx="1266" cy="265" r="0.7"/><circle cx="1283" cy="269" r="0.5"/><circle cx="1264" cy="272" r="1.1"/><circle cx="1266" cy="276" r="0.5"/><circle cx="1269" cy="266" r="0.8"/><circle cx="1264" cy="266" r="0.7"/><circle cx="1281" cy="273" r="0.5"/></g><g fill="#000" fill-opacity="0.5"><circle cx="1275" cy="269" r="1.1"/><circle cx="1282" cy="273" r="1.2"/><circle cx="1272" cy="275" r="0.6"/><circle cx="1272" cy="270" r="0.9"/><circle cx="1272" cy="265" r="1.2"/><circle cx="1277" cy="284" r="0.8"/><circle cx="1268" cy="269" r="1.1"/><circle cx="1281" cy="268" r="0.5"/><circle cx="1277" cy="270" r="0.9"/><circle cx="1269" cy="271" r="0.8"/><circle cx="1278" cy="280" r="0.8"/><circle cx="1277" cy="275" r="0.5"/><circle cx="1277" cy="265" r="0.9"/><circle cx="1273" cy="275" r="1.0"/><circle cx="1271" cy="281" r="0.4"/><circle cx="1280" cy="283" r="0.6"/><circle cx="1264" cy="270" r="0.6"/><circle cx="1273" cy="276" r="0.7"/><circle cx="1265" cy="266" r="1.0"/><circle cx="1273" cy="285" r="1.0"/><circle cx="1282" cy="268" r="0.4"/><circle cx="1285" cy="272" r="0.5"/><circle cx="1264" cy="276" r="0.9"/><circle cx="1261" cy="274" r="0.4"/><circle cx="1284" cy="273" r="1.0"/><circle cx="1270" cy="276" r="0.6"/><circle cx="1274" cy="276" r="0.7"/><circle cx="1277" cy="268" r="0.5"/><circle cx="1268" cy="262" r="1.2"/><circle cx="1280" cy="264" r="1.1"/><circle cx="1271" cy="269" r="0.8"/><circle cx="1275" cy="282" r="0.5"/><circle cx="1282" cy="270" r="0.9"/><circle cx="1269" cy="263" r="0.4"/><circle cx="1286" cy="273" r="0.8"/><circle cx="1281" cy="284" r="0.9"/><circle cx="1284" cy="272" r="0.7"/><circle cx="1280" cy="263" r="0.4"/><circle cx="1281" cy="274" r="0.7"/><circle cx="1275" cy="266" r="1.1"/><circle cx="1265" cy="271" r="0.5"/><circle cx="1273" cy="274" r="1.1"/><circle cx="1285" cy="278" r="0.6"/><circle cx="1271" cy="279" r="0.9"/><circle cx="1278" cy="271" r="0.7"/><circle cx="1275" cy="263" r="0.6"/><circle cx="1274" cy="263" r="0.7"/><circle cx="1269" cy="265" r="0.9"/><circle cx="1265" cy="268" r="0.9"/><circle cx="1273" cy="280" r="0.9"/><circle cx="1262" cy="271" r="0.8"/><circle cx="1282" cy="274" r="0.7"/><circle cx="1267" cy="264" r="1.0"/><circle cx="1279" cy="279" r="0.7"/><circle cx="1284" cy="276" r="0.4"/><circle cx="1272" cy="265" r="0.5"/><circle cx="1271" cy="274" r="0.7"/><circle cx="1280" cy="272" r="0.9"/><circle cx="1267" cy="269" r="0.9"/><circle cx="1282" cy="272" r="0.6"/><circle cx="1282" cy="272" r="0.4"/><circle cx="1265" cy="272" r="0.7"/><circle cx="1266" cy="270" r="0.9"/><circle cx="1278" cy="271" r="0.7"/><circle cx="1280" cy="274" r="0.8"/><circle cx="1268" cy="280" r="0.9"/><circle cx="1276" cy="271" r="1.1"/><circle cx="1264" cy="271" r="1.0"/><circle cx="1276" cy="268" r="1.1"/><circle cx="1282" cy="277" r="1.1"/><circle cx="1276" cy="270" r="1.1"/><circle cx="1276" cy="266" r="0.5"/><circle cx="1281" cy="280" r="0.6"/><circle cx="1263" cy="266" r="0.4"/><circle cx="1275" cy="282" r="0.6"/><circle cx="1275" cy="281" r="1.1"/><circle cx="1261" cy="269" r="0.6"/><circle cx="1274" cy="266" r="0.8"/><circle cx="1278" cy="278" r="0.8"/><circle cx="1277" cy="281" r="0.9"/><circle cx="1281" cy="284" r="0.9"/><circle cx="1268" cy="268" r="0.5"/><circle cx="1274" cy="272" r="0.4"/><circle cx="1281" cy="282" r="1.0"/><circle cx="1267" cy="271" r="0.8"/><circle cx="1278" cy="264" r="1.1"/><circle cx="1280" cy="269" r="0.4"/><circle cx="1279" cy="278" r="0.6"/><circle cx="1264" cy="270" r="1.1"/><circle cx="1262" cy="273" r="0.5"/><circle cx="1264" cy="280" r="0.8"/><circle cx="1281" cy="272" r="1.2"/><circle cx="1264" cy="270" r="0.5"/><circle cx="1275" cy="270" r="0.8"/><circle cx="1278" cy="273" r="0.4"/><circle cx="1269" cy="284" r="1.0"/><circle cx="1283" cy="281" r="0.5"/><circle cx="1273" cy="281" r="0.4"/><circle cx="1287" cy="274" r="0.5"/><circle cx="1275" cy="271" r="0.6"/><circle cx="1275" cy="271" r="0.7"/><circle cx="1281" cy="271" r="1.2"/><circle cx="1281" cy="280" r="1.0"/></g><path d="M1284 287 L1290 287 M1287 284 L1287 290" stroke="#000" stroke-width="1.3"/><path d="M1297 284 C1299 274 1298 266 1301 260 M1305 284 C1306 274 1304 268 1307 262 M1313 284 C1314 274 1312 268 1317 261 M1297 270 L1319 268" fill="none" stroke="#999" stroke-width="0.7"/><rect x="1320" y="284" width="5" height="6" fill="#ff7070" opacity="0.8"/><path d="M1318 287 L1324 287 M1321 284 L1321 290" stroke="#000" stroke-width="1.3"/><g fill="#000" fill-opacity="0.25"><circle cx="1337" cy="278" r="0.6"/><circle cx="1339" cy="279" r="1.1"/><circle cx="1343" cy="273" r="0.6"/><circle cx="1354" cy="273" r="0.6"/><circle cx="1337" cy="277" r="0.7"/><circle cx="1337" cy="267" r="0.4"/><circle cx="1344" cy="278" r="0.7"/><circle cx="1348" cy="280" r="0.8"/><circle cx="1333" cy="274" r="0.5"/><circle cx="1345" cy="280" r="0.7"/><circle cx="1331" cy="274" r="0.8"/><circle cx="1339" cy="273" r="1.0"/><circle cx="1329" cy="273" r="0.9"/><circle cx="1338" cy="278" r="0.5"/><circle cx="1346" cy="275" r="0.7"/><circle cx="1342" cy="273" r="0.6"/><circle cx="1335" cy="282" r="0.6"/><circle cx="1340" cy="279" r="0.5"/><circle cx="1344" cy="265" r="0.9"/><circle cx="1351" cy="280" r="0.8"/><circle cx="1339" cy="268" r="0.8"/><circle cx="1341" cy="281" r="1.1"/><circle cx="1344" cy="277" r="0.8"/><circle cx="1347" cy="282" r="1.2"/><circle cx="1347" cy="270" r="1.0"/><circle cx="1338" cy="279" r="0.5"/><circle cx="1344" cy="268" r="0.8"/><circle cx="1348" cy="275" r="1.1"/><circle cx="1335" cy="277" r="1.1"/><circle cx="1344" cy="271" r="0.7"/><circle cx="1331" cy="272" r="1.0"/><circle cx="1341" cy="264" r="0.8"/><circle cx="1346" cy="270" r="0.8"/><circle cx="1339" cy="271" r="0.9"/><circle cx="1354" cy="269" r="0.7"/><circle cx="1342" cy="276" r="0.5"/><circle cx="1349" cy="265" r="0.7"/><circle cx="1351" cy="271" r="0.4"/><circle cx="1336" cy="277" r="1.1"/><circle cx="1351" cy="265" r="0.7"/><circle cx="1336" cy="272" r="1.1"/><circle cx="1335" cy="275" r="1.0"/><circle cx="1342" cy="274" r="1.1"/><circle cx="1332" cy="271" r="0.7"/><circle cx="1344" cy="267" r="0.9"/><circle cx="1348" cy="273" r="0.6"/><circle cx="1338" cy="279" r="0.9"/><circle cx="1335" cy="273" r="0.8"/><circle cx="1352" cy="276" r="1.1"/><circle cx="1346" cy="273" r="0.6"/><circle cx="1344" cy="265" r="0.8"/><circle cx="1339" cy="264" r="0.5"/><circle cx="1335" cy="280" r="1.0"/><circle cx="1334" cy="279" r="0.9"/><circle cx="1338" cy="281" r="0.7"/><circle cx="1339" cy="266" r="0.5"/><circle cx="1341" cy="263" r="0.7"/><circle cx="1339" cy="283" r="1.1"/><circle cx="1339" cy="266" r="1.2"/><circle cx="1342" cy="276" r="0.6"/><circle cx="1349" cy="270" r="1.1"/><circle cx="1348" cy="267" r="1.2"/><circle cx="1339" cy="268" r="0.9"/><circle cx="1335" cy="274" r="1.2"/><circle cx="1339" cy="273" r="0.4"/><circle cx="1339" cy="279" r="1.2"/><circle cx="1337" cy="264" r="1.0"/></g><g fill="#000" fill-opacity="0.5"><circle cx="1342" cy="283" r="0.9"/><circle cx="1349" cy="278" r="0.9"/><circle cx="1334" cy="267" r="0.4"/><circle cx="1342" cy="283" r="0.8"/><circle cx="1338" cy="264" r="0.6"/><circle cx="1340" cy="285" r="0.6"/><circle cx="1348" cy="273" r="0.6"/><circle cx="1355" cy="273" r="1.0"/><circle cx="1345" cy="272" r="1.1"/><circle cx="1351" cy="267" r="0.8"/><circle cx="1340" cy="267" r="0.7"/><circle cx="1336" cy="281" r="0.5"/><circle cx="1342" cy="266" r="0.8"/><circle cx="1335" cy="266" r="1.0"/><circle cx="1334" cy="265" r="0.6"/><circle cx="1347" cy="279" r="0.8"/><circle cx="1347" cy="276" r="0.4"/><circle cx="1332" cy="277" r="0.9"/><circle cx="1333" cy="272" r="1.0"/><circle cx="1350" cy="274" r="1.0"/><circle cx="1338" cy="282" r="0.4"/><circle cx="1349" cy="274" r="0.6"/><circle cx="1348" cy="281" r="1.1"/><circle cx="1335" cy="270" r="1.2"/><circle cx="1350" cy="274" r="0.6"/><circle cx="1342" cy="267" r="0.8"/><circle cx="1338" cy="279" r="0.5"/><circle cx="1344" cy="279" r="0.5"/><circle cx="1333" cy="281" r="1.0"/><circle cx="1341" cy="266" r="0.5"/><circle cx="1340" cy="279" r="1.0"/><circle cx="1349" cy="273" r="0.6"/><circle cx="1334" cy="272" r="1.1"/><circle cx="1337" cy="272" r="0.4"/><circle cx="1343" cy="278" r="0.9"/><circle cx="1339" cy="277" r="1.0"/><circle cx="1349" cy="267" r="0.4"/><circle cx="1351" cy="280" r="0.9"/><circle cx="1346" cy="269" r="1.0"/><circle cx="1332" cy="279" r="1.1"/><circle cx="1334" cy="271" r="0.9"/><circle cx="1343" cy="282" r="1.1"/><circle cx="1345" cy="276" r="0.7"/><circle cx="1348" cy="263" r="1.1"/><circle cx="1335" cy="271" r="0.8"/><circle cx="1349" cy="270" r="0.9"/><circle cx="1339" cy="265" r="0.7"/><circle cx="1353" cy="278" r="0.7"/><circle cx="1347" cy="263" r="1.1"/><circle cx="1337" cy="268" r="0.5"/><circle cx="1332" cy="267" r="0.8"/><circle cx="1331" cy="274" r="0.6"/><circle cx="1337" cy="283" r="0.9"/><circle cx="1343" cy="273" r="0.9"/><circle cx="1333" cy="275" r="0.7"/><circle cx="1338" cy="273" r="1.0"/><circle cx="1351" cy="274" r="0.7"/><circle cx="1350" cy="264" r="0.4"/><circle cx="1334" cy="269" r="0.8"/><circle cx="1340" cy="279" r="0.8"/><circle cx="1335" cy="268" r="0.9"/><circle cx="1349" cy="276" r="0.7"/><circle cx="1341" cy="264" r="0.6"/><circle cx="1347" cy="266" r="0.6"/><circle cx="1334" cy="265" r="1.1"/><circle cx="1338" cy="273" r="1.2"/><circle cx="1342" cy="266" r="1.0"/><circle cx="1344" cy="262" r="0.5"/><circle cx="1338" cy="273" r="1.1"/><circle cx="1343" cy="267" r="0.6"/><circle cx="1343" cy="268" r="0.7"/><circle cx="1336" cy="271" r="0.9"/><circle cx="1342" cy="269" r="0.9"/><circle cx="1340" cy="273" r="0.7"/><circle cx="1346" cy="280" r="1.0"/><circle cx="1346" cy="271" r="1.0"/><circle cx="1341" cy="266" r="0.6"/><circle cx="1347" cy="278" r="0.8"/><circle cx="1346" cy="274" r="1.0"/></g><g fill="#000" fill-opacity="0.75"><circle cx="1343" cy="279" r="1.2"/><circle cx="1342" cy="279" r="0.6"/><circle cx="1343" cy="269" r="0.9"/><circle cx="1340" cy="273" r="0.5"/><circle cx="1350" cy="274" r="0.7"/><circle cx="1331" cy="268" r="0.6"/><circle cx="1345" cy="270" r="1.0"/><circle cx="1335" cy="274" r="0.4"/><circle cx="1332" cy="276" r="0.5"/><circle cx="1338" cy="266" r="0.7"/><circle cx="1346" cy="268" r="0.5"/><circle cx="1351" cy="278" r="0.9"/><circle cx="1338" cy="280" r="0.8"/><circle cx="1338" cy="279" r="0.8"/><circle cx="1332" cy="271" r="0.6"/><circle cx="1341" cy="280" r="0.9"/><circle cx="1333" cy="280" r="1.0"/><circle cx="1350" cy="269" r="0.5"/><circle cx="1335" cy="269" r="1.0"/><circle cx="1351" cy="280" r="0.5"/><circle cx="1335" cy="273" r="0.7"/><circle cx="1348" cy="277" r="0.6"/><circle cx="1336" cy="263" r="0.9"/><circle cx="1332" cy="269" r="0.6"/><circle cx="1341" cy="271" r="0.4"/><circle cx="1342" cy="270" r="0.9"/><circle cx="1346" cy="279" r="0.8"/><circle cx="1343" cy="272" r="1.1"/><circle cx="1339" cy="268" r="0.7"/><circle cx="1340" cy="278" r="0.5"/></g><path d="M1352 287 L1358 287 M1355 284 L1355 290" stroke="#000" stroke-width="1.3"/><g fill="#000" fill-opacity="0.25"><circle cx="1378" cy="283" r="0.4"/><circle cx="1380" cy="274" r="0.5"/><circle cx="1368" cy="276" r="0.8"/><circle cx="1385" cy="269" r="0.9"/><circle cx="1374" cy="277" r="0.6"/><circle cx="1377" cy="280" r="0.4"/><circle cx="1380" cy="270" r="0.4"/><circle cx="1373" cy="273" r="0.8"/><circle cx="1373" cy="263" r="0.6"/><circle cx="1382" cy="274" r="0.5"/><circle cx="1387" cy="269" r="0.9"/><circle cx="1368" cy="277" r="0.7"/><circle cx="1379" cy="280" r="0.5"/><circle cx="1370" cy="278" r="0.9"/><circle cx="1376" cy="272" r="0.4"/><circle cx="1383" cy="275" r="0.8"/><circle cx="1388" cy="270" r="1.0"/><circle cx="1368" cy="267" r="0.5"/><circle cx="1371" cy="281" r="0.8"/><circle cx="1367" cy="269" r="0.8"/><circle cx="1374" cy="279" r="1.2"/><circle cx="1370" cy="268" r="0.8"/><circle cx="1384" cy="277" r="0.8"/><circle cx="1386" cy="272" r="0.9"/><circle cx="1382" cy="281" r="0.4"/><circle cx="1385" cy="279" r="0.6"/><circle cx="1384" cy="276" r="0.6"/><circle cx="1368" cy="280" r="0.7"/><circle cx="1366" cy="267" r="1.1"/><circle cx="1380" cy="277" r="0.7"/><circle cx="1387" cy="269" r="1.1"/><circle cx="1373" cy="263" r="1.2"/><circle cx="1378" cy="274" r="0.6"/><circle cx="1384" cy="266" r="0.6"/><circle cx="1386" cy="278" r="0.7"/><circle cx="1372" cy="273" r="1.2"/><circle cx="1374" cy="266" r="0.7"/></g><g fill="#000" fill-opacity="0.5"><circle cx="1384" cy="275" r="0.8"/><circle cx="1369" cy="264" r="1.1"/><circle cx="1383" cy="275" r="0.4"/><circle cx="1383" cy="280" r="1.0"/><circle cx="1380" cy="268" r="1.1"/><circle cx="1367" cy="273" r="0.7"/><circle cx="1380" cy="272" r="0.5"/><circle cx="1384" cy="270" r="0.9"/><circle cx="1382" cy="268" r="0.9"/><circle cx="1375" cy="267" r="1.1"/><circle cx="1374" cy="280" r="0.6"/><circle cx="1366" cy="279" r="0.4"/><circle cx="1381" cy="271" r="0.5"/><circle cx="1372" cy="278" r="0.8"/><circle cx="1373" cy="272" r="1.2"/><circle cx="1378" cy="265" r="0.9"/><circle cx="1379" cy="271" r="0.7"/><circle cx="1380" cy="274" r="0.9"/><circle cx="1373" cy="274" r="0.5"/><circle cx="1375" cy="271" r="0.8"/><circle cx="1378" cy="277" r="0.5"/><circle cx="1370" cy="271" r="1.2"/><circle cx="1381" cy="272" r="1.0"/><circle cx="1367" cy="274" r="0.6"/><circle cx="1384" cy="274" r="0.4"/><circle cx="1364" cy="273" r="0.8"/><circle cx="1388" cy="276" r="0.4"/><circle cx="1377" cy="265" r="0.9"/><circle cx="1382" cy="275" r="1.2"/><circle cx="1381" cy="264" r="1.1"/><circle cx="1366" cy="275" r="0.6"/><circle cx="1382" cy="280" r="1.0"/><circle cx="1373" cy="278" r="0.5"/><circle cx="1377" cy="272" r="0.7"/><circle cx="1372" cy="280" r="0.4"/><circle cx="1377" cy="265" r="0.9"/><circle cx="1381" cy="279" r="0.7"/><circle cx="1363" cy="274" r="0.9"/><circle cx="1373" cy="271" r="0.9"/><circle cx="1367" cy="273" r="0.7"/><circle cx="1374" cy="280" r="0.6"/><circle cx="1375" cy="269" r="0.5"/><circle cx="1374" cy="277" r="0.5"/><circle cx="1382" cy="265" r="0.5"/><circle cx="1372" cy="281" r="0.6"/><circle cx="1379" cy="268" r="0.8"/><circle cx="1380" cy="274" r="0.9"/><circle cx="1369" cy="266" r="1.0"/><circle cx="1379" cy="267" r="0.8"/><circle cx="1369" cy="269" r="0.9"/><circle cx="1387" cy="272" r="1.0"/><circle cx="1376" cy="272" r="1.2"/><circle cx="1373" cy="263" r="0.5"/><circle cx="1386" cy="268" r="1.1"/><circle cx="1383" cy="273" r="0.7"/><circle cx="1374" cy="266" r="0.6"/><circle cx="1374" cy="264" r="0.6"/><circle cx="1380" cy="267" r="0.6"/><circle cx="1383" cy="277" r="1.1"/><circle cx="1379" cy="278" r="0.9"/><circle cx="1366" cy="278" r="1.1"/><circle cx="1383" cy="274" r="0.5"/><circle cx="1381" cy="273" r="0.9"/><circle cx="1374" cy="270" r="0.5"/><circle cx="1377" cy="269" r="0.7"/><circle cx="1385" cy="268" r="0.9"/><circle cx="1371" cy="265" r="0.6"/><circle cx="1385" cy="280" r="1.0"/><circle cx="1379" cy="280" r="1.1"/><circle cx="1379" cy="281" r="0.6"/><circle cx="1384" cy="275" r="1.1"/></g><g fill="#000" fill-opacity="0.75"><circle cx="1367" cy="277" r="1.0"/><circle cx="1382" cy="275" r="0.9"/><circle cx="1365" cy="279" r="0.6"/><circle cx="1369" cy="265" r="0.8"/><circle cx="1379" cy="265" r="0.4"/><circle cx="1368" cy="273" r="0.8"/><circle cx="1388" cy="274" r="1.0"/><circle cx="1374" cy="275" r="0.9"/><circle cx="1379" cy="272" r="1.0"/><circle cx="1374" cy="270" r="0.9"/><circle cx="1370" cy="278" r="1.2"/><circle cx="1375" cy="282" r="0.5"/><circle cx="1380" cy="265" r="0.9"/><circle cx="1377" cy="267" r="1.0"/><circle cx="1377" cy="266" r="0.5"/><circle cx="1384" cy="278" r="1.1"/><circle cx="1380" cy="280" r="0.5"/><circle cx="1378" cy="273" r="0.9"/><circle cx="1379" cy="268" r="0.7"/><circle cx="1378" cy="283" r="1.1"/><circle cx="1383" cy="282" r="1.0"/><circle cx="1376" cy="273" r="0.5"/><circle cx="1366" cy="267" r="1.1"/><circle cx="1383" cy="276" r="1.0"/><circle cx="1382" cy="278" r="0.7"/><circle cx="1368" cy="270" r="1.0"/><circle cx="1375" cy="268" r="0.6"/><circle cx="1377" cy="282" r="1.1"/><circle cx="1374" cy="267" r="0.9"/><circle cx="1380" cy="266" r="0.4"/><circle cx="1374" cy="265" r="0.7"/><circle cx="1376" cy="268" r="1.0"/><circle cx="1372" cy="267" r="1.1"/><circle cx="1371" cy="272" r="1.0"/><circle cx="1377" cy="275" r="1.2"/><circle cx="1369" cy="278" r="0.8"/><circle cx="1387" cy="269" r="1.1"/><circle cx="1380" cy="269" r="0.5"/><circle cx="1383" cy="272" r="1.0"/><circle cx="1373" cy="282" r="0.4"/><circle cx="1384" cy="277" r="1.1"/><circle cx="1371" cy="269" r="0.9"/><circle cx="1368" cy="272" r="1.2"/><circle cx="1367" cy="266" r="0.8"/><circle cx="1373" cy="272" r="0.8"/><circle cx="1382" cy="275" r="0.6"/><circle cx="1373" cy="265" r="0.4"/><circle cx="1376" cy="282" r="0.7"/><circle cx="1374" cy="270" r="0.5"/><circle cx="1380" cy="280" r="0.8"/></g><path d="M1386 287 L1392 287 M1389 284 L1389 290" stroke="#000" stroke-width="1.3"/><g fill="#000" fill-opacity="0.75"><circle cx="1072" cy="304" r="0.7"/><circle cx="1070" cy="300" r="0.4"/><circle cx="1070" cy="305" r="1.0"/><circle cx="1071" cy="311" r="0.9"/><circle cx="1067" cy="313" r="0.7"/><circle cx="1074" cy="312" r="0.6"/><circle cx="1075" cy="305" r="0.7"/><circle cx="1066" cy="312" r="0.6"/><circle cx="1068" cy="317" r="0.8"/><circle cx="1065" cy="303" r="1.0"/><circle cx="1071" cy="310" r="1.0"/><circle cx="1072" cy="305" r="0.6"/><circle cx="1070" cy="304" r="0.9"/><circle cx="1068" cy="315" r="0.7"/><circle cx="1073" cy="311" r="1.2"/><circle cx="1066" cy="297" r="0.5"/><circle cx="1065" cy="310" r="0.6"/><circle cx="1070" cy="316" r="0.9"/><circle cx="1061" cy="303" r="1.1"/><circle cx="1070" cy="308" r="1.0"/><circle cx="1067" cy="312" r="0.4"/><circle cx="1067" cy="299" r="0.7"/><circle cx="1062" cy="311" r="0.4"/><circle cx="1059" cy="311" r="0.8"/><circle cx="1072" cy="310" r="0.9"/><circle cx="1065" cy="312" r="1.2"/><circle cx="1068" cy="296" r="1.2"/><circle cx="1060" cy="313" r="0.9"/><circle cx="1075" cy="307" r="1.2"/><circle cx="1067" cy="306" r="1.3"/><circle cx="1075" cy="310" r="1.1"/><circle cx="1066" cy="300" r="0.7"/><circle cx="1069" cy="303" r="0.6"/><circle cx="1061" cy="300" r="0.5"/><circle cx="1065" cy="307" r="0.6"/><circle cx="1072" cy="303" r="0.7"/><circle cx="1064" cy="309" r="0.6"/><circle cx="1062" cy="316" r="1.1"/><circle cx="1066" cy="300" r="0.6"/><circle cx="1063" cy="314" r="0.9"/><circle cx="1066" cy="295" r="1.0"/><circle cx="1063" cy="303" r="0.4"/><circle cx="1076" cy="304" r="0.6"/><circle cx="1065" cy="319" r="0.5"/><circle cx="1063" cy="307" r="1.1"/><circle cx="1063" cy="307" r="0.6"/><circle cx="1071" cy="309" r="0.8"/><circle cx="1070" cy="310" r="0.6"/><circle cx="1065" cy="314" r="0.6"/><circle cx="1074" cy="314" r="1.2"/><circle cx="1071" cy="311" r="0.9"/><circle cx="1071" cy="305" r="1.2"/><circle cx="1068" cy="300" r="1.2"/><circle cx="1072" cy="304" r="0.7"/><circle cx="1060" cy="308" r="0.8"/><circle cx="1071" cy="308" r="1.1"/><circle cx="1072" cy="314" r="0.6"/><circle cx="1073" cy="313" r="1.0"/><circle cx="1060" cy="311" r="0.7"/><circle cx="1066" cy="310" r="1.0"/><circle cx="1069" cy="295" r="0.5"/><circle cx="1065" cy="313" r="0.6"/><circle cx="1059" cy="309" r="0.6"/><circle cx="1068" cy="317" r="1.2"/><circle cx="1068" cy="295" r="1.2"/><circle cx="1062" cy="298" r="1.1"/><circle cx="1072" cy="297" r="0.5"/><circle cx="1062" cy="298" r="0.9"/><circle cx="1067" cy="307" r="0.7"/><circle cx="1068" cy="301" r="0.5"/><circle cx="1070" cy="304" r="0.6"/><circle cx="1061" cy="302" r="0.8"/><circle cx="1065" cy="307" r="1.2"/><circle cx="1066" cy="310" r="1.3"/><circle cx="1061" cy="305" r="0.7"/></g><g fill="#000" fill-opacity="1.0"><circle cx="1062" cy="296" r="0.9"/><circle cx="1064" cy="307" r="0.6"/><circle cx="1066" cy="306" r="0.6"/><circle cx="1070" cy="311" r="0.7"/><circle cx="1067" cy="306" r="0.9"/><circle cx="1073" cy="314" r="1.1"/><circle cx="1067" cy="296" r="0.7"/><circle cx="1067" cy="305" r="1.2"/><circle cx="1069" cy="316" r="1.2"/><circle cx="1071" cy="314" r="1.0"/><circle cx="1060" cy="303" r="1.0"/><circle cx="1073" cy="305" r="1.3"/><circle cx="1067" cy="311" r="0.7"/><circle cx="1070" cy="300" r="1.3"/><circle cx="1064" cy="313" r="0.9"/><circle cx="1066" cy="305" r="1.3"/><circle cx="1070" cy="304" r="0.5"/><circle cx="1065" cy="306" r="1.1"/><circle cx="1065" cy="303" r="0.5"/><circle cx="1064" cy="296" r="0.6"/><circle cx="1074" cy="315" r="0.6"/><circle cx="1066" cy="303" r="1.2"/><circle cx="1073" cy="298" r="0.5"/><circle cx="1069" cy="305" r="0.6"/><circle cx="1067" cy="298" r="1.0"/><circle cx="1070" cy="310" r="1.1"/><circle cx="1073" cy="312" r="0.5"/><circle cx="1065" cy="309" r="1.0"/><circle cx="1063" cy="301" r="1.0"/><circle cx="1059" cy="306" r="0.5"/><circle cx="1067" cy="312" r="0.9"/><circle cx="1069" cy="300" r="0.5"/><circle cx="1068" cy="312" r="0.9"/><circle cx="1071" cy="303" r="1.2"/><circle cx="1062" cy="303" r="1.2"/></g><g fill="#000" fill-opacity="0.5"><circle cx="1064" cy="301" r="0.4"/><circle cx="1074" cy="300" r="0.9"/><circle cx="1066" cy="299" r="0.7"/><circle cx="1072" cy="310" r="0.7"/><circle cx="1067" cy="295" r="0.5"/><circle cx="1069" cy="304" r="0.9"/><circle cx="1063" cy="304" r="0.6"/><circle cx="1068" cy="311" r="1.2"/><circle cx="1074" cy="301" r="1.2"/><circle cx="1065" cy="317" r="0.7"/><circle cx="1067" cy="299" r="0.6"/><circle cx="1070" cy="302" r="0.5"/><circle cx="1064" cy="296" r="0.4"/><circle cx="1064" cy="300" r="0.8"/><circle cx="1061" cy="312" r="0.9"/><circle cx="1071" cy="308" r="0.5"/><circle cx="1067" cy="305" r="1.3"/><circle cx="1064" cy="301" r="0.9"/><circle cx="1070" cy="296" r="1.0"/><circle cx="1063" cy="316" r="0.7"/><circle cx="1068" cy="310" r="0.8"/><circle cx="1073" cy="301" r="0.8"/><circle cx="1065" cy="300" r="1.0"/><circle cx="1072" cy="304" r="0.5"/><circle cx="1068" cy="307" r="1.0"/><circle cx="1067" cy="299" r="0.4"/><circle cx="1073" cy="306" r="0.8"/><circle cx="1071" cy="303" r="1.2"/><circle cx="1070" cy="299" r="0.9"/><circle cx="1070" cy="309" r="1.1"/><circle cx="1075" cy="308" r="0.5"/><circle cx="1060" cy="308" r="0.7"/><circle cx="1067" cy="310" r="1.3"/></g><rect x="1082" y="318" width="5" height="6" fill="#ff7070" opacity="0.8"/><path d="M1080 321 L1086 321 M1083 318 L1083 324" stroke="#000" stroke-width="1.3"/><path d="M1093 318 C1095 308 1094 300 1097 294 M1101 318 C1102 308 1100 302 1103 296 M1109 318 C1110 308 1108 302 1113 295" fill="none" stroke="#aaa" stroke-width="0.7"/><rect x="1116" y="318" width="5" height="6" fill="#ff7070" opacity="0.8"/><path d="M1114 321 L1120 321 M1117 318 L1117 324" stroke="#000" stroke-width="1.3"/><circle cx="1138" cy="307" r="13" fill="url(#gG)"/><g fill="#000" fill-opacity="0.25"><circle cx="1132" cy="316" r="1.1"/><circle cx="1146" cy="307" r="0.8"/><circle cx="1137" cy="314" r="0.4"/><circle cx="1146" cy="305" r="1.1"/><circle cx="1137" cy="299" r="0.5"/><circle cx="1139" cy="299" r="0.7"/><circle cx="1137" cy="316" r="0.8"/><circle cx="1135" cy="314" r="1.3"/><circle cx="1145" cy="300" r="1.3"/><circle cx="1130" cy="310" r="1.3"/><circle cx="1148" cy="302" r="1.3"/><circle cx="1138" cy="319" r="0.9"/><circle cx="1129" cy="308" r="0.4"/><circle cx="1141" cy="317" r="0.7"/><circle cx="1142" cy="302" r="1.2"/><circle cx="1138" cy="308" r="0.4"/><circle cx="1131" cy="311" r="1.1"/><circle cx="1148" cy="301" r="1.0"/><circle cx="1146" cy="308" r="1.3"/><circle cx="1140" cy="302" r="0.9"/><circle cx="1140" cy="313" r="1.0"/><circle cx="1141" cy="312" r="0.6"/><circle cx="1132" cy="313" r="1.3"/><circle cx="1134" cy="306" r="0.6"/><circle cx="1128" cy="309" r="0.5"/><circle cx="1137" cy="305" r="1.0"/><circle cx="1133" cy="302" r="0.9"/><circle cx="1133" cy="299" r="1.3"/><circle cx="1143" cy="302" r="0.7"/><circle cx="1136" cy="298" r="0.7"/><circle cx="1135" cy="315" r="0.8"/><circle cx="1145" cy="311" r="0.6"/><circle cx="1128" cy="310" r="0.5"/><circle cx="1146" cy="310" r="1.3"/><circle cx="1140" cy="306" r="0.7"/><circle cx="1133" cy="305" r="1.2"/><circle cx="1136" cy="309" r="1.4"/><circle cx="1146" cy="309" r="0.7"/><circle cx="1130" cy="305" r="0.4"/><circle cx="1141" cy="300" r="0.9"/><circle cx="1142" cy="299" r="0.7"/><circle cx="1143" cy="302" r="0.9"/><circle cx="1143" cy="309" r="1.3"/><circle cx="1133" cy="314" r="1.4"/></g><rect x="1150" y="318" width="5" height="6" fill="#ff7070" opacity="0.8"/><path d="M1148 321 L1154 321 M1151 318 L1151 324" stroke="#000" stroke-width="1.3"/><path d="M1172 307 l12.0 0.0" stroke="#555" stroke-width="1.2" opacity="0.8"/><path d="M1172 307 l9.2 7.7" stroke="#555" stroke-width="2.5" opacity="0.8"/><path d="M1172 307 l2.1 11.8" stroke="#555" stroke-width="1.2" opacity="0.8"/><path d="M1172 307 l-6.0 10.4" stroke="#555" stroke-width="2.5" opacity="0.8"/><path d="M1172 307 l-11.3 4.1" stroke="#555" stroke-width="1.2" opacity="0.8"/><path d="M1172 307 l-11.3 -4.1" stroke="#555" stroke-width="2.5" opacity="0.8"/><path d="M1172 307 l-6.0 -10.4" stroke="#555" stroke-width="1.2" opacity="0.8"/><path d="M1172 307 l2.1 -11.8" stroke="#555" stroke-width="2.5" opacity="0.8"/><path d="M1172 307 l9.2 -7.7" stroke="#555" stroke-width="1.2" opacity="0.8"/><path d="M1182 321 L1188 321 M1185 318 L1185 324" stroke="#000" stroke-width="1.3"/><g fill="#000" fill-opacity="0.25"><circle cx="1210" cy="307" r="0.8"/><circle cx="1202" cy="303" r="1.1"/><circle cx="1204" cy="306" r="0.4"/><circle cx="1211" cy="304" r="0.7"/><circle cx="1205" cy="306" r="0.5"/><circle cx="1206" cy="309" r="0.5"/><circle cx="1214" cy="308" r="0.8"/><circle cx="1200" cy="305" r="0.8"/><circle cx="1211" cy="306" r="1.1"/><circle cx="1203" cy="315" r="1.2"/><circle cx="1200" cy="307" r="0.7"/><circle cx="1214" cy="310" r="1.1"/><circle cx="1202" cy="299" r="0.4"/><circle cx="1199" cy="307" r="0.5"/><circle cx="1208" cy="312" r="1.0"/><circle cx="1212" cy="308" r="0.6"/><circle cx="1207" cy="302" r="0.7"/><circle cx="1209" cy="298" r="1.1"/><circle cx="1213" cy="299" r="0.6"/><circle cx="1199" cy="304" r="0.8"/><circle cx="1200" cy="299" r="0.8"/><circle cx="1210" cy="301" r="0.7"/><circle cx="1206" cy="306" r="0.8"/><circle cx="1195" cy="310" r="0.7"/><circle cx="1212" cy="308" r="0.5"/><circle cx="1207" cy="310" r="0.8"/><circle cx="1209" cy="302" r="1.0"/><circle cx="1214" cy="307" r="1.2"/><circle cx="1196" cy="313" r="1.1"/><circle cx="1202" cy="311" r="1.0"/><circle cx="1217" cy="312" r="0.8"/><circle cx="1211" cy="307" r="0.7"/><circle cx="1209" cy="305" r="1.1"/><circle cx="1211" cy="308" r="0.4"/><circle cx="1206" cy="311" r="1.1"/><circle cx="1217" cy="310" r="1.1"/><circle cx="1209" cy="299" r="0.8"/><circle cx="1200" cy="302" r="0.8"/><circle cx="1209" cy="316" r="0.6"/><circle cx="1210" cy="306" r="0.8"/><circle cx="1214" cy="312" r="0.9"/><circle cx="1208" cy="309" r="0.6"/><circle cx="1217" cy="305" r="1.1"/><circle cx="1207" cy="298" r="1.2"/><circle cx="1201" cy="307" r="0.6"/><circle cx="1212" cy="299" r="1.2"/><circle cx="1202" cy="309" r="1.0"/><circle cx="1202" cy="298" r="0.7"/><circle cx="1204" cy="309" r="0.7"/><circle cx="1208" cy="315" r="0.5"/><circle cx="1202" cy="299" r="0.5"/><circle cx="1211" cy="300" r="0.9"/><circle cx="1201" cy="318" r="0.7"/><circle cx="1203" cy="317" r="0.7"/><circle cx="1204" cy="309" r="1.1"/><circle cx="1216" cy="301" r="0.6"/><circle cx="1217" cy="305" r="0.7"/><circle cx="1204" cy="308" r="0.7"/><circle cx="1201" cy="300" r="1.0"/><circle cx="1209" cy="302" r="0.6"/><circle cx="1202" cy="314" r="0.7"/><circle cx="1198" cy="303" r="1.0"/><circle cx="1208" cy="312" r="1.1"/><circle cx="1204" cy="304" r="0.5"/><circle cx="1211" cy="312" r="0.6"/><circle cx="1212" cy="305" r="1.2"/><circle cx="1214" cy="315" r="0.9"/><circle cx="1195" cy="312" r="0.7"/><circle cx="1197" cy="301" r="0.7"/><circle cx="1204" cy="305" r="0.5"/><circle cx="1200" cy="300" r="0.9"/><circle cx="1202" cy="299" r="1.2"/><circle cx="1194" cy="304" r="0.9"/><circle cx="1194" cy="305" r="0.7"/><circle cx="1200" cy="307" r="0.8"/><circle cx="1209" cy="298" r="0.6"/><circle cx="1210" cy="300" r="0.8"/><circle cx="1210" cy="304" r="0.9"/><circle cx="1213" cy="305" r="0.6"/><circle cx="1209" cy="317" r="0.6"/><circle cx="1194" cy="310" r="0.8"/></g><g fill="#000" fill-opacity="0.5"><circle cx="1213" cy="301" r="1.1"/><circle cx="1205" cy="317" r="0.5"/><circle cx="1205" cy="309" r="0.4"/><circle cx="1212" cy="307" r="1.1"/><circle cx="1209" cy="300" r="1.2"/><circle cx="1196" cy="303" r="1.1"/><circle cx="1197" cy="306" r="0.7"/><circle cx="1202" cy="318" r="0.8"/><circle cx="1210" cy="304" r="0.9"/><circle cx="1204" cy="300" r="0.7"/><circle cx="1196" cy="307" r="0.8"/><circle cx="1204" cy="314" r="1.1"/><circle cx="1216" cy="311" r="0.5"/><circle cx="1201" cy="308" r="1.1"/><circle cx="1212" cy="307" r="0.7"/><circle cx="1201" cy="311" r="0.6"/><circle cx="1207" cy="299" r="0.9"/><circle cx="1198" cy="311" r="1.1"/><circle cx="1214" cy="300" r="1.1"/><circle cx="1208" cy="298" r="0.5"/><circle cx="1207" cy="306" r="0.9"/><circle cx="1203" cy="316" r="0.6"/><circle cx="1212" cy="298" r="0.5"/><circle cx="1205" cy="314" r="1.0"/><circle cx="1199" cy="309" r="0.9"/><circle cx="1195" cy="306" r="0.7"/><circle cx="1215" cy="301" r="0.5"/><circle cx="1214" cy="311" r="0.9"/><circle cx="1216" cy="313" r="0.7"/><circle cx="1203" cy="305" r="0.6"/><circle cx="1213" cy="308" r="0.7"/><circle cx="1211" cy="309" r="0.7"/><circle cx="1214" cy="301" r="0.7"/><circle cx="1217" cy="309" r="0.8"/><circle cx="1215" cy="311" r="0.6"/><circle cx="1198" cy="312" r="1.1"/><circle cx="1205" cy="314" r="1.0"/><circle cx="1201" cy="310" r="0.7"/><circle cx="1197" cy="312" r="0.7"/><circle cx="1215" cy="310" r="0.6"/><circle cx="1203" cy="309" r="0.9"/><circle cx="1201" cy="308" r="0.7"/><circle cx="1207" cy="303" r="1.1"/><circle cx="1216" cy="306" r="1.0"/><circle cx="1211" cy="303" r="1.1"/><circle cx="1198" cy="312" r="0.6"/><circle cx="1211" cy="311" r="0.5"/><circle cx="1203" cy="309" r="0.8"/><circle cx="1210" cy="308" r="1.2"/><circle cx="1215" cy="307" r="0.9"/><circle cx="1201" cy="300" r="1.2"/><circle cx="1205" cy="316" r="0.8"/><circle cx="1196" cy="309" r="0.6"/><circle cx="1210" cy="316" r="0.5"/><circle cx="1204" cy="308" r="0.4"/><circle cx="1207" cy="311" r="1.0"/><circle cx="1209" cy="308" r="0.7"/><circle cx="1206" cy="304" r="0.6"/><circle cx="1217" cy="303" r="0.5"/><circle cx="1203" cy="308" r="0.9"/><circle cx="1211" cy="301" r="0.8"/><circle cx="1212" cy="300" r="0.5"/><circle cx="1200" cy="310" r="0.7"/><circle cx="1198" cy="300" r="0.7"/><circle cx="1205" cy="314" r="1.2"/><circle cx="1201" cy="316" r="1.0"/><circle cx="1209" cy="302" r="0.9"/><circle cx="1218" cy="306" r="0.7"/><circle cx="1205" cy="303" r="1.0"/><circle cx="1201" cy="311" r="0.9"/><circle cx="1198" cy="309" r="0.7"/><circle cx="1197" cy="311" r="0.6"/><circle cx="1203" cy="301" r="0.6"/><circle cx="1213" cy="302" r="0.4"/><circle cx="1201" cy="307" r="1.0"/><circle cx="1215" cy="302" r="0.6"/><circle cx="1211" cy="306" r="1.0"/><circle cx="1213" cy="315" r="0.8"/><circle cx="1201" cy="305" r="0.9"/><circle cx="1200" cy="303" r="0.8"/><circle cx="1210" cy="302" r="0.7"/><circle cx="1211" cy="307" r="1.1"/><circle cx="1209" cy="300" r="0.6"/><circle cx="1210" cy="305" r="0.9"/></g><rect x="1218" y="318" width="5" height="6" fill="#ff7070" opacity="0.8"/><path d="M1216 321 L1222 321 M1219 318 L1219 324" stroke="#000" stroke-width="1.3"/><ellipse cx="1231" cy="304" rx="3.5" ry="2.5" fill="#6a9a40"/><ellipse cx="1238" cy="310" rx="3.5" ry="2.5" fill="#6a9a40"/><ellipse cx="1245" cy="304" rx="3.5" ry="2.5" fill="#6a9a40"/><ellipse cx="1252" cy="310" rx="3.5" ry="2.5" fill="#6a9a40"/><path d="M1227 302 L1253 314" stroke="#5a7a30" stroke-width="0.8"/><rect x="1252" y="318" width="5" height="6" fill="#ff7070" opacity="0.8"/><path d="M1250 321 L1256 321 M1253 318 L1253 324" stroke="#000" stroke-width="1.3"/><path d="M1263 308 C1263 298 1269 294 1275 296 L1285 292 L1284 304 C1286 312 1279 316 1271 314 Z" fill="#8a7a5a"/><circle cx="1270" cy="303" r="3.5" fill="#fff"/><circle cx="1277" cy="302" r="3.5" fill="#fff"/><circle cx="1270.5" cy="303" r="1.5" fill="#000"/><circle cx="1277.5" cy="302" r="1.5" fill="#000"/><circle cx="1262" cy="307" r="2.5" fill="#000"/><path d="M1277 312 L1287 320" stroke="#e0a040" stroke-width="1.5"/><rect x="1286" y="318" width="5" height="6" fill="#ff7070" opacity="0.8"/><path d="M1284 321 L1290 321 M1287 318 L1287 324" stroke="#000" stroke-width="1.3"/><ellipse cx="1307" cy="308" rx="12" ry="13" fill="url(#gP)"/><path d="M1306 296 L1308 291" stroke="#3a6a20" stroke-width="2"/><path d="M1318 321 L1324 321 M1321 318 L1321 324" stroke="#000" stroke-width="1.3"/></svg><div class="a" style="left:85px;top:169px;width:374px;height:415px;background:rgba(0,0,0,0.18);filter:blur(2px)"></div><div class="a" style="left:86px;top:170px;width:371px;height:411px;background:#474747;border:1px solid #3a3a3a;border-top:none"></div><div class="a" style="left:86px;top:170px;width:371px;height:30px;background:#fff"></div><div class="a" style="left:94px;top:176px;width:16px;height:16px;background:#f3eaea"></div><svg style="left:94px;top:176px" width="16" height="16"><path d="M3 6 L8 5.5 L11 3.5 L14 1.5 L13.5 6.5 L12 8.5 L13 10.5 L14 14 L11 10 L8 9.5 Z" fill="#a4a4a4"/><circle cx="3" cy="6" r="0.8" fill="#333"/></svg><div class="t" style="left:115px;top:179px;font-size:11.6px;color:#000">Drop Shadow</div><svg style="left:436px;top:179px" width="11" height="11"><path d="M0.5 0.5 L10.5 10.5 M10.5 0.5 L0.5 10.5" stroke="#111" stroke-width="1.1"/></svg><div class="a" style="left:87px;top:236px;width:368px;height:1px;background:#3a3a3a"></div><svg style="left:86px;top:200px" width="32" height="32"><circle cx="15.06" cy="14.87" r="11.06" fill="#c4c4c4"/><path d="M28 10.7 L14.5 10.7 A4.3 4.3 0 1 0 18.7 15.9" fill="none" stroke="#474747" stroke-width="3.8" stroke-linecap="round"/><rect x="14.5" y="8.9" width="14" height="3.6" fill="#474747"/></svg><div class="t" style="left:119px;top:205px;font-size:16.5px;font-weight:bold;color:#dcdcdc">Drop Shadow</div><div class="t" style="left:119px;top:223px;font-size:11px;color:#e0e0e0">Alphr Guides-5 ([Untitled])</div><div class="a" style="left:417px;top:215px;width:34px;height:8px;border:1px solid #0c0c0c;background:#474747"></div><svg style="left:429px;top:215px" width="10" height="8"><path d="M2 6.5 L8 6.5 L8 4.5 L6 4.5 L5 1.5 L4 4.5 L2 4.5 Z" fill="#aaa"/></svg><div class="t" style="left:92px;top:253px;font-size:12.5px;color:#e6e6e6">Presets:</div><div class="a" style="left:145px;top:244px;width:257px;height:29px;background:#2f2f2f;border:1px solid #1c1c1c;border-radius:4px"></div><svg style="left:382px;top:255px" width="14" height="9"><path d="M1 1 L7.0 8 L13 1" fill="none" stroke="#e6e6e6" stroke-width="1.6"/></svg><svg style="left:412px;top:252px" width="12" height="12"><path d="M6 1 L6 11 M1 6 L11 6" stroke="#bebebe" stroke-width="2.2"/></svg><svg style="left:433px;top:252px" width="12" height="12"><rect x="0.5" y="0.5" width="11" height="11" fill="none" stroke="#bebebe" stroke-width="1"/><path d="M9 2.5 L3 6 L9 9.5 Z" fill="#bebebe"/></svg><div class="a" style="left:93px;top:280px;width:325px;height:20px;background:#2f2f2f;border:1px solid #686868"></div><div class="a" style="left:94px;top:281px;width:123px;height:18px;background:#595959;border-right:1px solid #111"></div><div class="a" style="left:405px;top:281px;width:12px;height:18px;background:#222"></div><svg style="left:405px;top:281px" width="12" height="18"><path d="M2.5 6.8 L6.0 3.0 L9.5 6.8 M2.5 11.2 L6.0 15.0 L9.5 11.2" fill="none" stroke="#dcdcdc" stroke-width="1.8"/></svg><div class="t" style="left:94px;top:285.0px;font-size:12.5px;color:#e6e6e6;letter-spacing:0.25px">X</div><div class="t" style="right:1043px;top:285.0px;font-size:12.5px;color:#e6e6e6">-7.692</div><div class="a" style="left:365px;top:283px;width:1px;height:15px;background:#eee"></div><div class="a" style="left:93px;top:302px;width:325px;height:20px;background:#2f2f2f;border:1px solid #686868"></div><div class="a" style="left:94px;top:303px;width:145px;height:18px;background:#595959;border-right:1px solid #111"></div><div class="a" style="left:405px;top:303px;width:12px;height:18px;background:#222"></div><svg style="left:405px;top:303px" width="12" height="18"><path d="M2.5 6.8 L6.0 3.0 L9.5 6.8 M2.5 11.2 L6.0 15.0 L9.5 11.2" fill="none" stroke="#dcdcdc" stroke-width="1.8"/></svg><div class="t" style="left:94px;top:307.0px;font-size:12.5px;color:#e6e6e6;letter-spacing:0.25px">Y</div><div class="t" style="right:1043px;top:307.0px;font-size:12.5px;color:#e6e6e6">-2.051</div><div class="a" style="left:93px;top:324px;width:356px;height:20px;background:#2f2f2f;border:1px solid #686868"></div><div class="a" style="left:94px;top:325px;width:14px;height:18px;background:#595959;border-right:1px solid #111"></div><div class="a" style="left:436px;top:325px;width:12px;height:18px;background:#222"></div><svg style="left:436px;top:325px" width="12" height="18"><path d="M2.5 6.8 L6.0 3.0 L9.5 6.8 M2.5 11.2 L6.0 15.0 L9.5 11.2" fill="none" stroke="#dcdcdc" stroke-width="1.8"/></svg><div class="t" style="left:94px;top:329.0px;font-size:12.5px;color:#e6e6e6;letter-spacing:0.25px">Blur radius</div><div class="t" style="right:1012px;top:329.0px;font-size:12.5px;color:#e6e6e6">3.30</div><svg style="left:427px;top:280px" width="18" height="42">
<path d="M6 3 L10 3 L10 6.5" fill="none" stroke="#e6e6e6" stroke-width="1.8"/>
<path d="M6 38.5 L10 38.5 L10 35" fill="none" stroke="#e6e6e6" stroke-width="1.8"/>
<path d="M3 18.5 L3 16.5 C3 14 5 12.8 8.6 12.8 C12.2 12.8 14.2 14 14.2 16.5 L14.2 18.5" fill="none" stroke="#b4b4b4" stroke-width="2.6"/><path d="M8.6 10.5 L8.6 18" stroke="#b4b4b4" stroke-width="2.4"/>
<path d="M3 22.5 L3 24.5 C3 27 5 28.2 8.6 28.2 C12.2 28.2 14.2 27 14.2 24.5 L14.2 22.5" fill="none" stroke="#b4b4b4" stroke-width="2.6"/><path d="M8.6 23 L8.6 31" stroke="#b4b4b4" stroke-width="2.4"/>
</svg><div class="a" style="left:90px;top:275px;width:362px;height:71px;border:3px solid #ff0000;border-radius:2px"></div><div class="a" style="left:92px;top:348px;width:358px;height:28px;background:#2f2f2f;border:1px solid #1c1c1c;border-radius:4px"></div><div class="t" style="left:99px;top:355.5px;font-size:12.5px;color:#e6e6e6;letter-spacing:0.25px">Grow shape</div><div class="t" style="right:1022px;top:355.5px;font-size:12.5px;color:#e6e6e6">Circle</div><svg style="left:429px;top:357.0px" width="14" height="9"><path d="M1 1 L7.0 8 L13 1" fill="none" stroke="#e6e6e6" stroke-width="1.6"/></svg><div class="a" style="left:92px;top:378px;width:358px;height:20px;background:#2f2f2f;border:1px solid #686868"></div><div class="a" style="left:93px;top:379px;width:216px;height:18px;background:#595959;border-right:1px solid #111"></div><div class="a" style="left:437px;top:379px;width:12px;height:18px;background:#222"></div><svg style="left:437px;top:379px" width="12" height="18"><path d="M2.5 6.8 L6.0 3.0 L9.5 6.8 M2.5 11.2 L6.0 15.0 L9.5 11.2" fill="none" stroke="#dcdcdc" stroke-width="1.8"/></svg><div class="t" style="left:93px;top:383.0px;font-size:12.5px;color:#e6e6e6;letter-spacing:0.25px">Grow radius</div><div class="t" style="right:1011px;top:383.0px;font-size:12.5px;color:#e6e6e6">7</div><div class="t" style="left:92px;top:410px;font-size:12.5px;color:#e6e6e6">Color</div><div class="a" style="left:126px;top:400px;width:288px;height:32px;background:#2f2f2f;border:1px solid #1c1c1c;border-radius:4px"></div><div class="a" style="left:130px;top:404px;width:281px;height:24px;background:#000"></div><div class="a" style="left:418px;top:400px;width:32px;height:32px;background:#2f2f2f;border:1px solid #1c1c1c;border-radius:4px"></div><svg style="left:425px;top:405px" width="20" height="22"><path d="M4 16 L11 6" stroke="#d0d0d0" stroke-width="1.6"/><ellipse cx="12" cy="4.5" rx="2" ry="3" transform="rotate(35 12 4.5)" fill="#d0d0d0"/><circle cx="4" cy="16.5" r="1.3" fill="#d0d0d0"/><rect x="9.5" y="13" width="8" height="8" fill="#8a8a8a" stroke="#d0d0d0" stroke-width="1"/></svg><div class="a" style="left:92px;top:434px;width:358px;height:20px;background:#2f2f2f;border:1px solid #686868"></div><div class="a" style="left:93px;top:435px;width:84px;height:18px;background:#595959;border-right:1px solid #111"></div><div class="a" style="left:437px;top:435px;width:12px;height:18px;background:#222"></div><svg style="left:437px;top:435px" width="12" height="18"><path d="M2.5 6.8 L6.0 3.0 L9.5 6.8 M2.5 11.2 L6.0 15.0 L9.5 11.2" fill="none" stroke="#dcdcdc" stroke-width="1.8"/></svg><div class="t" style="left:93px;top:439.0px;font-size:12.5px;color:#e6e6e6;letter-spacing:0.25px">Opacity</div><div class="t" style="right:1011px;top:439.0px;font-size:12.5px;color:#e6e6e6">0.500</div><div class="a" style="left:92px;top:460px;width:358px;height:30px;background:#2f2f2f;border:1px solid #1c1c1c;border-radius:4px"></div><div class="t" style="left:99px;top:468.5px;font-size:12.5px;color:#e6e6e6;letter-spacing:0.25px">Clipping</div><div class="t" style="right:1022px;top:468.5px;font-size:12.5px;color:#e6e6e6">Adjust</div><svg style="left:429px;top:470.0px" width="14" height="9"><path d="M1 1 L7.0 8 L13 1" fill="none" stroke="#e6e6e6" stroke-width="1.6"/></svg><div class="a" style="left:94px;top:495px;width:13px;height:13px;background:#1a1a1a;border-radius:3px"></div><svg style="left:94px;top:495px" width="13" height="13"><path d="M6.5 2.5 L6.5 10.5 M2.5 6.5 L10.5 6.5" stroke="#fff" stroke-width="2.4"/></svg><div class="t" style="left:111px;top:497px;font-size:12.5px;color:#e6e6e6">Blending Options</div><div class="a" style="left:94px;top:520px;width:13px;height:13px;background:#1a1a1a;border-radius:3px"></div><svg style="left:94px;top:520px" width="13" height="13"><path d="M3.5 3.5 L9.5 9.5 M9.5 3.5 L3.5 9.5" stroke="#fff" stroke-width="2"/></svg><div class="t" style="left:111px;top:521px;font-size:12.5px;color:#8e8e8e">Preview</div><div class="a" style="left:378px;top:520px;width:13px;height:13px;background:#222;border:1px solid #161616;border-radius:3px"></div><div class="t" style="left:395px;top:521px;font-size:12.5px;color:#e6e6e6">Split view</div><div class="a" style="left:92px;top:547px;width:85px;height:27px;background:#2c2c2c;border:1px solid #141414;border-radius:3px"></div><div class="t" style="left:92px;width:85px;text-align:center;top:554px;font-size:12.5px;color:#e6e6e6">Help</div><div class="a" style="left:183px;top:547px;width:85px;height:27px;background:#2c2c2c;border:1px solid #141414;border-radius:3px"></div><div class="t" style="left:183px;width:85px;text-align:center;top:554px;font-size:12.5px;color:#e6e6e6">Reset</div><div class="a" style="left:274px;top:547px;width:85px;height:27px;background:#2c2c2c;border:1px solid #141414;border-radius:3px"></div><div class="t" style="left:274px;width:85px;text-align:center;top:554px;font-size:12.5px;color:#e6e6e6">OK</div><div class="a" style="left:365px;top:547px;width:85px;height:27px;background:#2c2c2c;border:1px solid #141414;border-radius:3px"></div><div class="t" style="left:365px;width:85px;text-align:center;top:554px;font-size:12.5px;color:#e6e6e6">Cancel</div>
</body></html>
